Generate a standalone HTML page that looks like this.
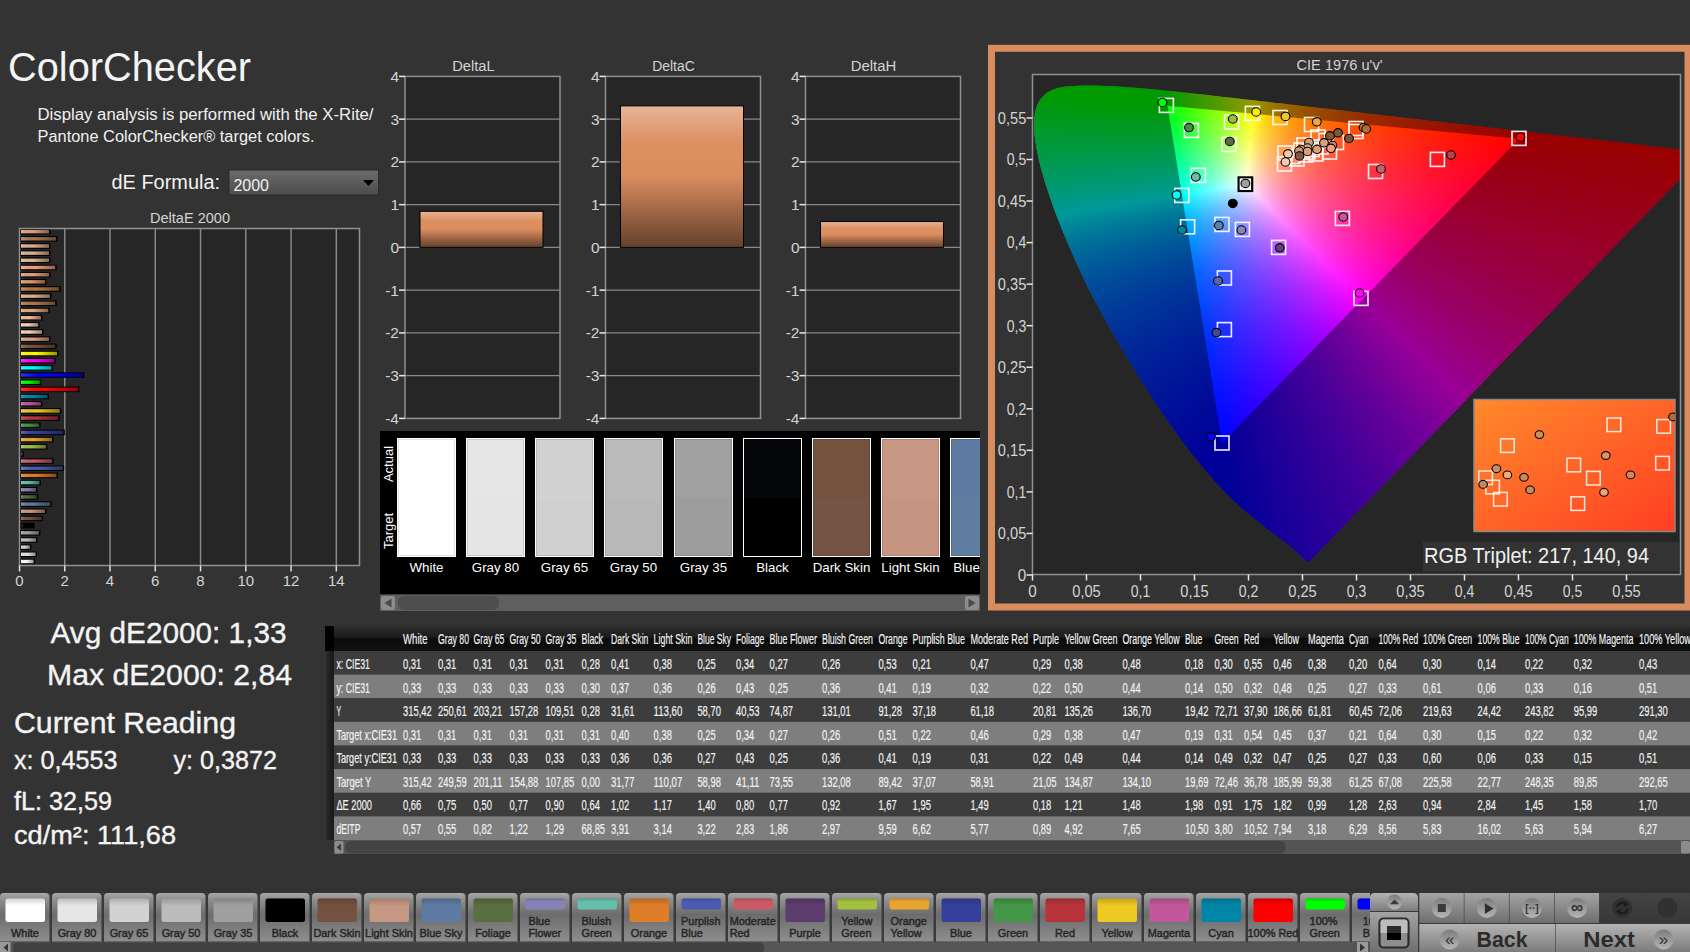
<!DOCTYPE html>
<html lang="en"><head><meta charset="utf-8"><title>ColorChecker</title>
<style>html,body{margin:0;padding:0;width:1690px;height:952px;background:#333333;overflow:hidden}svg{display:block;font-family:"Liberation Sans",sans-serif}.b{stroke:#262626;stroke-width:.45px}</style>
</head><body>
<svg width="1690" height="952" viewBox="0 0 1690 952">
<defs>
<linearGradient id="dd" x1="0" y1="0" x2="0" y2="1"><stop offset="0" stop-color="#6b6b6b"/><stop offset="1" stop-color="#4c4c4c"/></linearGradient>
<linearGradient id="bh" x1="0" y1="0" x2="1" y2="0"><stop offset="0" stop-color="#fff" stop-opacity=".2"/><stop offset=".4" stop-color="#000" stop-opacity="0"/><stop offset="1" stop-color="#000" stop-opacity=".4"/></linearGradient>
<linearGradient id="bg3" x1="0" y1="0" x2="0" y2="1"><stop offset="0" stop-color="#e9b497"/><stop offset=".25" stop-color="#dd9163"/><stop offset=".5" stop-color="#d98c5e"/><stop offset="1" stop-color="#63402c"/></linearGradient>
<clipPath id="cp"><rect x="1032.5" y="74.5" width="648" height="500"/></clipPath>
<clipPath id="cl"><path d="M1309.9,560.8 L1309.9,560.8 L1309.8,560.7 L1309.8,560.7 L1309.8,560.7 L1309.7,560.7 L1309.7,560.8 L1309.6,560.8 L1309.6,560.9 L1309.5,560.9 L1309.4,560.9 L1309.3,560.9 L1309.2,560.8 L1309.1,560.8 L1309.0,560.8 L1309.0,560.9 L1308.9,561.0 L1308.9,561.0 L1308.8,561.1 L1308.8,561.2 L1308.7,561.2 L1308.7,561.3 L1308.6,561.3 L1308.5,561.3 L1308.3,561.3 L1308.2,561.3 L1308.0,561.3 L1307.8,561.3 L1307.7,561.2 L1307.5,561.2 L1307.4,561.2 L1307.2,561.2 L1307.0,561.2 L1306.8,561.2 L1306.6,561.2 L1306.4,561.0 L1306.2,560.8 L1305.9,560.6 L1305.6,560.3 L1305.2,560.0 L1304.8,559.6 L1304.2,559.1 L1303.7,558.7 L1303.1,558.1 L1302.5,557.6 L1301.9,557.0 L1301.2,556.4 L1300.5,555.7 L1299.7,555.0 L1298.8,554.2 L1297.9,553.3 L1297.0,552.5 L1295.9,551.5 L1294.9,550.5 L1293.7,549.4 L1292.5,548.3 L1291.3,547.1 L1290.0,546.1 L1288.6,545.1 L1287.2,544.0 L1285.7,542.8 L1284.2,541.6 L1282.6,540.4 L1280.9,539.1 L1279.0,537.7 L1277.1,536.2 L1275.1,534.7 L1272.9,533.0 L1270.7,531.3 L1268.3,529.4 L1265.8,527.5 L1263.3,525.6 L1260.6,523.5 L1257.9,521.3 L1255.0,519.1 L1252.0,516.7 L1248.9,514.1 L1245.7,511.4 L1242.3,508.5 L1238.8,505.3 L1235.2,501.9 L1231.5,498.4 L1227.6,494.6 L1223.6,490.5 L1219.5,486.1 L1215.0,481.3 L1210.2,475.8 L1205.1,469.9 L1199.7,463.3 L1194.0,456.2 L1188.1,448.7 L1182.1,440.7 L1175.9,432.3 L1169.5,423.4 L1163.0,414.0 L1156.3,404.1 L1149.6,393.8 L1142.7,383.0 L1135.8,371.9 L1128.9,360.5 L1121.9,348.8 L1115.0,337.0 L1108.2,325.1 L1101.5,313.1 L1095.0,301.0 L1088.8,288.9 L1082.9,277.0 L1077.4,265.2 L1072.3,253.7 L1067.4,242.4 L1062.9,231.5 L1058.7,220.9 L1054.8,210.7 L1051.3,200.9 L1048.1,191.7 L1045.3,183.0 L1042.9,174.8 L1040.7,167.1 L1038.9,159.9 L1037.5,153.2 L1036.2,147.0 L1035.3,141.1 L1034.6,135.7 L1034.2,130.8 L1034.0,126.2 L1034.0,121.9 L1034.3,117.9 L1034.8,114.2 L1035.5,110.7 L1036.4,107.6 L1037.5,104.7 L1038.8,102.0 L1040.3,99.6 L1042.0,97.4 L1043.8,95.4 L1045.8,93.7 L1047.9,92.2 L1050.1,90.9 L1052.5,89.8 L1054.9,88.9 L1057.5,88.1 L1060.1,87.5 L1062.8,87.0 L1065.6,86.6 L1068.5,86.3 L1071.4,86.1 L1074.4,85.9 L1077.4,85.7 L1080.4,85.7 L1083.5,85.6 L1086.6,85.6 L1089.6,85.6 L1092.7,85.6 L1095.8,85.6 L1098.9,85.7 L1102.0,85.7 L1105.1,85.9 L1108.3,86.0 L1111.5,86.1 L1114.8,86.3 L1118.1,86.5 L1121.4,86.7 L1124.8,86.9 L1128.3,87.2 L1131.8,87.5 L1135.4,87.8 L1139.0,88.1 L1142.7,88.4 L1146.5,88.7 L1150.3,89.1 L1154.2,89.5 L1158.2,89.8 L1162.3,90.3 L1166.4,90.7 L1170.6,91.1 L1174.9,91.6 L1179.3,92.0 L1183.8,92.5 L1188.4,93.0 L1193.1,93.5 L1197.9,94.0 L1202.7,94.6 L1207.7,95.1 L1212.8,95.7 L1217.9,96.3 L1223.2,96.9 L1228.6,97.5 L1234.1,98.1 L1239.7,98.7 L1245.4,99.4 L1251.3,100.0 L1257.2,100.7 L1263.3,101.4 L1269.5,102.1 L1275.7,102.9 L1282.1,103.6 L1288.7,104.4 L1295.3,105.1 L1302.0,105.9 L1308.9,106.7 L1315.8,107.5 L1322.9,108.3 L1330.0,109.1 L1337.3,110.0 L1344.7,110.8 L1352.1,111.7 L1359.6,112.5 L1367.2,113.4 L1374.9,114.3 L1382.7,115.2 L1390.5,116.1 L1398.4,117.0 L1406.3,117.9 L1414.2,118.8 L1422.2,119.8 L1430.0,120.7 L1437.8,121.6 L1445.5,122.4 L1453.1,123.3 L1460.7,124.2 L1468.3,125.1 L1475.9,125.9 L1483.4,126.8 L1490.9,127.7 L1498.3,128.5 L1505.5,129.4 L1512.6,130.2 L1519.4,131.0 L1526.2,131.7 L1532.7,132.5 L1539.2,133.2 L1545.4,133.9 L1551.6,134.6 L1557.5,135.3 L1563.3,136.0 L1568.9,136.7 L1574.4,137.3 L1579.6,137.9 L1584.7,138.5 L1589.6,139.0 L1594.3,139.6 L1598.9,140.1 L1603.3,140.6 L1607.5,141.1 L1611.7,141.6 L1615.6,142.0 L1619.4,142.5 L1623.1,142.9 L1626.7,143.3 L1630.1,143.7 L1633.5,144.1 L1636.8,144.5 L1640.0,144.8 L1643.1,145.2 L1646.1,145.6 L1649.0,145.9 L1651.9,146.2 L1654.6,146.5 L1657.2,146.8 L1659.7,147.1 L1662.2,147.4 L1664.5,147.7 L1666.8,147.9 L1668.9,148.2 L1671.0,148.4 L1672.9,148.6 L1674.7,148.9 L1676.4,149.1 L1678.0,149.2 L1679.6,149.4 L1681.0,149.6 L1682.4,149.7 L1683.7,149.9 L1685.0,150.0 L1686.2,150.2 L1687.4,150.3 L1688.5,150.4 L1689.5,150.6 L1690.4,150.7 L1691.3,150.8 L1692.2,150.9 L1692.9,151.0 L1693.6,151.0 L1694.2,151.1 L1694.8,151.2 L1695.3,151.2 L1695.9,151.3 L1696.4,151.4 L1697.0,151.4 L1697.5,151.5 L1697.9,151.5 L1698.4,151.6 L1698.8,151.6 L1699.2,151.7 L1699.6,151.7 L1700.0,151.8 L1700.4,151.8 L1700.8,151.9 L1701.2,151.9 L1701.6,152.0 L1702.0,152.0 L1702.4,152.1 L1702.8,152.1 L1703.2,152.1 L1703.5,152.2 L1703.9,152.2 L1704.1,152.3 L1704.4,152.3 L1704.6,152.3 L1704.7,152.3 L1704.9,152.3 L1705.0,152.4 L1705.1,152.4 L1705.2,152.4 L1705.4,152.4 L1705.4,152.4 L1705.5,152.4 L1705.6,152.4 L1705.7,152.4 L1705.7,152.4 L1705.7,152.4Z"/></clipPath>
<linearGradient id="c0" gradientUnits="userSpaceOnUse" x1="1033" x2="1681" y1="0" y2="0"><stop offset="0.0586" stop-color="#00ff00"/><stop offset="0.1188" stop-color="#00ff00"/></linearGradient>
<linearGradient id="c1" gradientUnits="userSpaceOnUse" x1="1033" x2="1681" y1="0" y2="0"><stop offset="0.0370" stop-color="#00ff00"/><stop offset="0.1651" stop-color="#00ff00"/></linearGradient>
<linearGradient id="c2" gradientUnits="userSpaceOnUse" x1="1033" x2="1681" y1="0" y2="0"><stop offset="0.0278" stop-color="#00ff00"/><stop offset="0.1975" stop-color="#00ff00"/></linearGradient>
<linearGradient id="c3" gradientUnits="userSpaceOnUse" x1="1033" x2="1681" y1="0" y2="0"><stop offset="0.0216" stop-color="#00ff00"/><stop offset="0.2037" stop-color="#00ff00"/><stop offset="0.2269" stop-color="#29ff00"/></linearGradient>
<linearGradient id="c4" gradientUnits="userSpaceOnUse" x1="1033" x2="1681" y1="0" y2="0"><stop offset="0.0170" stop-color="#00ff00"/><stop offset="0.2037" stop-color="#00ff00"/><stop offset="0.2562" stop-color="#5aff00"/></linearGradient>
<linearGradient id="c5" gradientUnits="userSpaceOnUse" x1="1033" x2="1681" y1="0" y2="0"><stop offset="0.0139" stop-color="#00ff03"/><stop offset="0.2037" stop-color="#00ff00"/><stop offset="0.2840" stop-color="#8bff00"/></linearGradient>
<linearGradient id="c6" gradientUnits="userSpaceOnUse" x1="1033" x2="1681" y1="0" y2="0"><stop offset="0.0108" stop-color="#00ff07"/><stop offset="0.0633" stop-color="#00ff00"/><stop offset="0.2052" stop-color="#00ff00"/><stop offset="0.2747" stop-color="#7aff00"/><stop offset="0.3117" stop-color="#c1ff00"/></linearGradient>
<linearGradient id="c7" gradientUnits="userSpaceOnUse" x1="1033" x2="1681" y1="0" y2="0"><stop offset="0.0093" stop-color="#00ff0b"/><stop offset="0.0972" stop-color="#00ff00"/><stop offset="0.2052" stop-color="#00ff00"/><stop offset="0.2855" stop-color="#8eff00"/><stop offset="0.3380" stop-color="#f8ff00"/></linearGradient>
<linearGradient id="c8" gradientUnits="userSpaceOnUse" x1="1033" x2="1681" y1="0" y2="0"><stop offset="0.0062" stop-color="#00ff10"/><stop offset="0.1296" stop-color="#00ff00"/><stop offset="0.2068" stop-color="#01ff00"/><stop offset="0.2886" stop-color="#94ff00"/><stop offset="0.3410" stop-color="#ffff00"/><stop offset="0.3657" stop-color="#ffd000"/></linearGradient>
<linearGradient id="c9" gradientUnits="userSpaceOnUse" x1="1033" x2="1681" y1="0" y2="0"><stop offset="0.0046" stop-color="#00ff14"/><stop offset="0.1620" stop-color="#00ff00"/><stop offset="0.2068" stop-color="#00ff00"/><stop offset="0.2870" stop-color="#91ff00"/><stop offset="0.3410" stop-color="#fffe00"/><stop offset="0.3642" stop-color="#ffd200"/><stop offset="0.3920" stop-color="#ffab00"/></linearGradient>
<linearGradient id="c10" gradientUnits="userSpaceOnUse" x1="1033" x2="1681" y1="0" y2="0"><stop offset="0.0031" stop-color="#00ff17"/><stop offset="0.2068" stop-color="#00ff00"/><stop offset="0.2855" stop-color="#8eff00"/><stop offset="0.3410" stop-color="#fffe00"/><stop offset="0.3565" stop-color="#ffdf00"/><stop offset="0.3750" stop-color="#ffc100"/><stop offset="0.3951" stop-color="#ffa600"/><stop offset="0.4182" stop-color="#ff8e00"/></linearGradient>
<linearGradient id="c11" gradientUnits="userSpaceOnUse" x1="1033" x2="1681" y1="0" y2="0"><stop offset="0.0031" stop-color="#00ff1b"/><stop offset="0.2068" stop-color="#00ff04"/><stop offset="0.2284" stop-color="#26ff00"/><stop offset="0.2855" stop-color="#8eff00"/><stop offset="0.3395" stop-color="#feff00"/><stop offset="0.3627" stop-color="#ffd300"/><stop offset="0.3858" stop-color="#ffb100"/><stop offset="0.4136" stop-color="#ff9200"/><stop offset="0.4460" stop-color="#ff7600"/></linearGradient>
<linearGradient id="c12" gradientUnits="userSpaceOnUse" x1="1033" x2="1681" y1="0" y2="0"><stop offset="0.0015" stop-color="#00ff1f"/><stop offset="0.2083" stop-color="#00ff0a"/><stop offset="0.2608" stop-color="#60ff00"/><stop offset="0.2886" stop-color="#94ff00"/><stop offset="0.3395" stop-color="#feff00"/><stop offset="0.3657" stop-color="#ffcd00"/><stop offset="0.3951" stop-color="#ffa500"/><stop offset="0.4306" stop-color="#ff8100"/><stop offset="0.4722" stop-color="#ff6300"/></linearGradient>
<linearGradient id="c13" gradientUnits="userSpaceOnUse" x1="1033" x2="1681" y1="0" y2="0"><stop offset="0.0015" stop-color="#00ff23"/><stop offset="0.2083" stop-color="#00ff0f"/><stop offset="0.2870" stop-color="#91ff02"/><stop offset="0.3395" stop-color="#ffff00"/><stop offset="0.3534" stop-color="#ffe200"/><stop offset="0.3688" stop-color="#ffc800"/><stop offset="0.4043" stop-color="#ff9a00"/><stop offset="0.4475" stop-color="#ff7300"/><stop offset="0.4985" stop-color="#ff5300"/></linearGradient>
<linearGradient id="c14" gradientUnits="userSpaceOnUse" x1="1033" x2="1681" y1="0" y2="0"><stop offset="0.0000" stop-color="#00ff26"/><stop offset="0.2083" stop-color="#00ff14"/><stop offset="0.2855" stop-color="#8eff09"/><stop offset="0.3380" stop-color="#fcff00"/><stop offset="0.3395" stop-color="#fffe00"/><stop offset="0.3549" stop-color="#ffdf00"/><stop offset="0.3735" stop-color="#ffc000"/><stop offset="0.4136" stop-color="#ff8f00"/><stop offset="0.4645" stop-color="#ff6700"/><stop offset="0.5262" stop-color="#ff4600"/></linearGradient>
<linearGradient id="c15" gradientUnits="userSpaceOnUse" x1="1033" x2="1681" y1="0" y2="0"><stop offset="0.0000" stop-color="#00ff2a"/><stop offset="0.2099" stop-color="#00ff19"/><stop offset="0.2886" stop-color="#94ff0f"/><stop offset="0.3380" stop-color="#fdff05"/><stop offset="0.3580" stop-color="#ffd800"/><stop offset="0.3765" stop-color="#ffbb00"/><stop offset="0.3981" stop-color="#ff9f00"/><stop offset="0.4213" stop-color="#ff8700"/><stop offset="0.4799" stop-color="#ff5c00"/><stop offset="0.5525" stop-color="#ff3a00"/></linearGradient>
<linearGradient id="c16" gradientUnits="userSpaceOnUse" x1="1033" x2="1681" y1="0" y2="0"><stop offset="0.0000" stop-color="#00ff2e"/><stop offset="0.2099" stop-color="#00ff1e"/><stop offset="0.2870" stop-color="#91ff15"/><stop offset="0.3380" stop-color="#fdff0d"/><stop offset="0.3580" stop-color="#ffd807"/><stop offset="0.3781" stop-color="#ffb803"/><stop offset="0.4012" stop-color="#ff9b00"/><stop offset="0.4290" stop-color="#ff8000"/><stop offset="0.4599" stop-color="#ff6800"/><stop offset="0.4938" stop-color="#ff5400"/><stop offset="0.5787" stop-color="#ff3000"/></linearGradient>
<linearGradient id="c17" gradientUnits="userSpaceOnUse" x1="1033" x2="1681" y1="0" y2="0"><stop offset="0.0000" stop-color="#00ff31"/><stop offset="0.2099" stop-color="#00ff23"/><stop offset="0.2855" stop-color="#8dff1b"/><stop offset="0.3380" stop-color="#feff14"/><stop offset="0.3596" stop-color="#ffd40d"/><stop offset="0.3812" stop-color="#ffb308"/><stop offset="0.4074" stop-color="#ff9303"/><stop offset="0.4367" stop-color="#ff7900"/><stop offset="0.4707" stop-color="#ff6100"/><stop offset="0.5108" stop-color="#ff4b00"/><stop offset="0.6065" stop-color="#ff2700"/></linearGradient>
<linearGradient id="c18" gradientUnits="userSpaceOnUse" x1="1033" x2="1681" y1="0" y2="0"><stop offset="0.0000" stop-color="#00ff35"/><stop offset="0.2114" stop-color="#00ff28"/><stop offset="0.2886" stop-color="#93ff21"/><stop offset="0.3380" stop-color="#ffff1a"/><stop offset="0.3596" stop-color="#ffd313"/><stop offset="0.3843" stop-color="#ffae0d"/><stop offset="0.4120" stop-color="#ff8e07"/><stop offset="0.4444" stop-color="#ff7202"/><stop offset="0.4815" stop-color="#ff5900"/><stop offset="0.5247" stop-color="#ff4400"/><stop offset="0.6327" stop-color="#ff1f00"/></linearGradient>
<linearGradient id="c19" gradientUnits="userSpaceOnUse" x1="1033" x2="1681" y1="0" y2="0"><stop offset="0.0000" stop-color="#00ff39"/><stop offset="0.2114" stop-color="#00ff2d"/><stop offset="0.2870" stop-color="#90ff27"/><stop offset="0.3380" stop-color="#ffff21"/><stop offset="0.3596" stop-color="#ffd319"/><stop offset="0.3858" stop-color="#ffab12"/><stop offset="0.4151" stop-color="#ff8a0b"/><stop offset="0.4506" stop-color="#ff6d06"/><stop offset="0.4907" stop-color="#ff5400"/><stop offset="0.5386" stop-color="#ff3d00"/><stop offset="0.6590" stop-color="#ff1800"/></linearGradient>
<linearGradient id="c20" gradientUnits="userSpaceOnUse" x1="1033" x2="1681" y1="0" y2="0"><stop offset="-0.0015" stop-color="#00ff3c"/><stop offset="0.2114" stop-color="#00ff33"/><stop offset="0.2855" stop-color="#8dff2d"/><stop offset="0.3380" stop-color="#fffe28"/><stop offset="0.3611" stop-color="#ffcf1e"/><stop offset="0.3889" stop-color="#ffa616"/><stop offset="0.4213" stop-color="#ff840f"/><stop offset="0.4583" stop-color="#ff6708"/><stop offset="0.5031" stop-color="#ff4d03"/><stop offset="0.5540" stop-color="#ff3700"/><stop offset="0.6142" stop-color="#ff2300"/><stop offset="0.6867" stop-color="#ff1100"/></linearGradient>
<linearGradient id="c21" gradientUnits="userSpaceOnUse" x1="1033" x2="1681" y1="0" y2="0"><stop offset="-0.0015" stop-color="#00ff40"/><stop offset="0.2130" stop-color="#00ff38"/><stop offset="0.2870" stop-color="#90ff33"/><stop offset="0.3380" stop-color="#fffd2e"/><stop offset="0.3627" stop-color="#ffcc23"/><stop offset="0.3904" stop-color="#ffa41a"/><stop offset="0.4244" stop-color="#ff8012"/><stop offset="0.4645" stop-color="#ff620b"/><stop offset="0.5123" stop-color="#ff4705"/><stop offset="0.5679" stop-color="#ff3100"/><stop offset="0.6327" stop-color="#ff1d00"/><stop offset="0.7130" stop-color="#ff0b00"/></linearGradient>
<linearGradient id="c22" gradientUnits="userSpaceOnUse" x1="1033" x2="1681" y1="0" y2="0"><stop offset="0.0000" stop-color="#00ff44"/><stop offset="0.2130" stop-color="#00ff3d"/><stop offset="0.2855" stop-color="#8dff39"/><stop offset="0.3380" stop-color="#fffd35"/><stop offset="0.3627" stop-color="#ffcb29"/><stop offset="0.3935" stop-color="#ff9f1e"/><stop offset="0.4290" stop-color="#ff7b15"/><stop offset="0.4707" stop-color="#ff5d0e"/><stop offset="0.5201" stop-color="#ff4307"/><stop offset="0.5802" stop-color="#ff2c01"/><stop offset="0.6512" stop-color="#ff1800"/><stop offset="0.7407" stop-color="#ff0500"/></linearGradient>
<linearGradient id="c23" gradientUnits="userSpaceOnUse" x1="1033" x2="1681" y1="0" y2="0"><stop offset="0.0000" stop-color="#00ff47"/><stop offset="0.2130" stop-color="#00ff42"/><stop offset="0.2824" stop-color="#87ff3f"/><stop offset="0.3102" stop-color="#c2ff3d"/><stop offset="0.3364" stop-color="#feff3c"/><stop offset="0.3380" stop-color="#fffc3b"/><stop offset="0.3642" stop-color="#ffc82d"/><stop offset="0.3951" stop-color="#ff9d22"/><stop offset="0.4321" stop-color="#ff7818"/><stop offset="0.4769" stop-color="#ff5910"/><stop offset="0.5309" stop-color="#ff3e09"/><stop offset="0.5941" stop-color="#ff2703"/><stop offset="0.6713" stop-color="#ff1300"/><stop offset="0.7670" stop-color="#ff0000"/></linearGradient>
<linearGradient id="c24" gradientUnits="userSpaceOnUse" x1="1033" x2="1681" y1="0" y2="0"><stop offset="0.0000" stop-color="#00ff4b"/><stop offset="0.2145" stop-color="#00ff47"/><stop offset="0.2886" stop-color="#93ff44"/><stop offset="0.3364" stop-color="#ffff42"/><stop offset="0.3503" stop-color="#ffe03a"/><stop offset="0.3642" stop-color="#ffc733"/><stop offset="0.3966" stop-color="#ff9a26"/><stop offset="0.4367" stop-color="#ff731b"/><stop offset="0.4846" stop-color="#ff5412"/><stop offset="0.5463" stop-color="#ff370a"/><stop offset="0.6219" stop-color="#ff1f03"/><stop offset="0.7593" stop-color="#ff0000"/><stop offset="0.7932" stop-color="#ff0000"/></linearGradient>
<linearGradient id="c25" gradientUnits="userSpaceOnUse" x1="1033" x2="1681" y1="0" y2="0"><stop offset="0.0000" stop-color="#00ff4f"/><stop offset="0.2145" stop-color="#00ff4c"/><stop offset="0.2870" stop-color="#90ff4a"/><stop offset="0.3364" stop-color="#fffe49"/><stop offset="0.3503" stop-color="#ffdf40"/><stop offset="0.3642" stop-color="#ffc638"/><stop offset="0.3997" stop-color="#ff962a"/><stop offset="0.4414" stop-color="#ff6f1e"/><stop offset="0.4938" stop-color="#ff4e14"/><stop offset="0.5648" stop-color="#ff300b"/><stop offset="0.6559" stop-color="#ff1503"/><stop offset="0.7562" stop-color="#ff0000"/><stop offset="0.8210" stop-color="#ff0000"/></linearGradient>
<linearGradient id="c26" gradientUnits="userSpaceOnUse" x1="1033" x2="1681" y1="0" y2="0"><stop offset="0.0000" stop-color="#00ff53"/><stop offset="0.2145" stop-color="#00ff51"/><stop offset="0.2840" stop-color="#89ff51"/><stop offset="0.3364" stop-color="#fffd4f"/><stop offset="0.3503" stop-color="#ffdf46"/><stop offset="0.3657" stop-color="#ffc33d"/><stop offset="0.3827" stop-color="#ffaa35"/><stop offset="0.4028" stop-color="#ff912d"/><stop offset="0.4475" stop-color="#ff6a20"/><stop offset="0.5015" stop-color="#ff4916"/><stop offset="0.5849" stop-color="#ff280b"/><stop offset="0.6960" stop-color="#ff0c02"/><stop offset="0.7531" stop-color="#ff0000"/><stop offset="0.8472" stop-color="#ff0000"/></linearGradient>
<linearGradient id="c27" gradientUnits="userSpaceOnUse" x1="1033" x2="1681" y1="0" y2="0"><stop offset="0.0000" stop-color="#00ff56"/><stop offset="0.2160" stop-color="#01ff56"/><stop offset="0.2855" stop-color="#8dff56"/><stop offset="0.3364" stop-color="#fffd56"/><stop offset="0.3503" stop-color="#ffde4b"/><stop offset="0.3673" stop-color="#ffbf41"/><stop offset="0.4043" stop-color="#ff8f31"/><stop offset="0.4522" stop-color="#ff6623"/><stop offset="0.5108" stop-color="#ff4417"/><stop offset="0.6080" stop-color="#ff210b"/><stop offset="0.7500" stop-color="#ff0000"/><stop offset="0.8735" stop-color="#ff0000"/></linearGradient>
<linearGradient id="c28" gradientUnits="userSpaceOnUse" x1="1033" x2="1681" y1="0" y2="0"><stop offset="0.0015" stop-color="#00ff5a"/><stop offset="0.2160" stop-color="#00ff5c"/><stop offset="0.2840" stop-color="#89ff5d"/><stop offset="0.3102" stop-color="#c3ff5d"/><stop offset="0.3349" stop-color="#feff5d"/><stop offset="0.3364" stop-color="#fffc5c"/><stop offset="0.3503" stop-color="#ffdd51"/><stop offset="0.3673" stop-color="#ffbf46"/><stop offset="0.3858" stop-color="#ffa43d"/><stop offset="0.4074" stop-color="#ff8b34"/><stop offset="0.4568" stop-color="#ff6225"/><stop offset="0.5185" stop-color="#ff4019"/><stop offset="0.6127" stop-color="#ff1f0d"/><stop offset="0.7469" stop-color="#ff0003"/><stop offset="0.9012" stop-color="#ff0000"/></linearGradient>
<linearGradient id="c29" gradientUnits="userSpaceOnUse" x1="1033" x2="1681" y1="0" y2="0"><stop offset="0.0015" stop-color="#00ff5e"/><stop offset="0.2160" stop-color="#00ff61"/><stop offset="0.2870" stop-color="#90ff63"/><stop offset="0.3349" stop-color="#ffff64"/><stop offset="0.3503" stop-color="#ffdc57"/><stop offset="0.3673" stop-color="#ffbe4b"/><stop offset="0.3873" stop-color="#ffa141"/><stop offset="0.4090" stop-color="#ff8937"/><stop offset="0.4599" stop-color="#ff5f28"/><stop offset="0.5247" stop-color="#ff3d1b"/><stop offset="0.6157" stop-color="#ff1d0f"/><stop offset="0.7438" stop-color="#ff0005"/><stop offset="0.8194" stop-color="#ff0000"/><stop offset="0.9275" stop-color="#ff0000"/></linearGradient>
<linearGradient id="c30" gradientUnits="userSpaceOnUse" x1="1033" x2="1681" y1="0" y2="0"><stop offset="0.0015" stop-color="#00ff62"/><stop offset="0.2176" stop-color="#01ff66"/><stop offset="0.2886" stop-color="#93ff69"/><stop offset="0.3349" stop-color="#fffe6b"/><stop offset="0.3503" stop-color="#ffdc5d"/><stop offset="0.3688" stop-color="#ffbb50"/><stop offset="0.3889" stop-color="#ff9e45"/><stop offset="0.4105" stop-color="#ff863b"/><stop offset="0.4645" stop-color="#ff5b2a"/><stop offset="0.5324" stop-color="#ff391c"/><stop offset="0.6188" stop-color="#ff1c11"/><stop offset="0.7407" stop-color="#ff0007"/><stop offset="0.8534" stop-color="#ff0000"/><stop offset="0.9537" stop-color="#ff0000"/></linearGradient>
<linearGradient id="c31" gradientUnits="userSpaceOnUse" x1="1033" x2="1681" y1="0" y2="0"><stop offset="0.0031" stop-color="#00ff65"/><stop offset="0.2176" stop-color="#00ff6c"/><stop offset="0.2870" stop-color="#90ff6f"/><stop offset="0.3349" stop-color="#fffe71"/><stop offset="0.3503" stop-color="#ffdb63"/><stop offset="0.3688" stop-color="#ffba55"/><stop offset="0.3904" stop-color="#ff9c48"/><stop offset="0.4136" stop-color="#ff823e"/><stop offset="0.4691" stop-color="#ff582c"/><stop offset="0.5401" stop-color="#ff351e"/><stop offset="0.6219" stop-color="#ff1b13"/><stop offset="0.7377" stop-color="#ff0009"/><stop offset="0.8858" stop-color="#ff0000"/><stop offset="0.9815" stop-color="#ff0000"/></linearGradient>
<linearGradient id="c32" gradientUnits="userSpaceOnUse" x1="1033" x2="1681" y1="0" y2="0"><stop offset="0.0031" stop-color="#00ff69"/><stop offset="0.2176" stop-color="#00ff71"/><stop offset="0.2840" stop-color="#89ff75"/><stop offset="0.3349" stop-color="#fffd78"/><stop offset="0.3519" stop-color="#ffd767"/><stop offset="0.3704" stop-color="#ffb659"/><stop offset="0.3920" stop-color="#ff994c"/><stop offset="0.4151" stop-color="#ff8041"/><stop offset="0.4414" stop-color="#ff6a37"/><stop offset="0.4722" stop-color="#ff552e"/><stop offset="0.5463" stop-color="#ff321f"/><stop offset="0.6250" stop-color="#ff1915"/><stop offset="0.7346" stop-color="#ff000b"/><stop offset="0.9182" stop-color="#ff0000"/><stop offset="1.0031" stop-color="#ff0000"/></linearGradient>
<linearGradient id="c33" gradientUnits="userSpaceOnUse" x1="1033" x2="1681" y1="0" y2="0"><stop offset="0.0031" stop-color="#00ff6d"/><stop offset="0.2191" stop-color="#01ff77"/><stop offset="0.2855" stop-color="#8cff7b"/><stop offset="0.3333" stop-color="#feff80"/><stop offset="0.3349" stop-color="#fffc7f"/><stop offset="0.3519" stop-color="#ffd66d"/><stop offset="0.3704" stop-color="#ffb65e"/><stop offset="0.3920" stop-color="#ff9851"/><stop offset="0.4151" stop-color="#ff7f45"/><stop offset="0.4414" stop-color="#ff693b"/><stop offset="0.4722" stop-color="#ff5431"/><stop offset="0.5463" stop-color="#ff3122"/><stop offset="0.6235" stop-color="#ff1917"/><stop offset="0.7315" stop-color="#ff000d"/><stop offset="1.0031" stop-color="#ff0000"/></linearGradient>
<linearGradient id="c34" gradientUnits="userSpaceOnUse" x1="1033" x2="1681" y1="0" y2="0"><stop offset="0.0046" stop-color="#00ff71"/><stop offset="0.2191" stop-color="#00ff7c"/><stop offset="0.2886" stop-color="#93ff82"/><stop offset="0.3333" stop-color="#ffff87"/><stop offset="0.3503" stop-color="#ffd874"/><stop offset="0.3688" stop-color="#ffb764"/><stop offset="0.3904" stop-color="#ff9956"/><stop offset="0.4136" stop-color="#ff804a"/><stop offset="0.4398" stop-color="#ff693f"/><stop offset="0.4707" stop-color="#ff5435"/><stop offset="0.5448" stop-color="#ff3124"/><stop offset="0.6219" stop-color="#ff1919"/><stop offset="0.7299" stop-color="#ff000f"/><stop offset="1.0031" stop-color="#ff0000"/></linearGradient>
<linearGradient id="c35" gradientUnits="userSpaceOnUse" x1="1033" x2="1681" y1="0" y2="0"><stop offset="0.0046" stop-color="#00ff75"/><stop offset="0.2191" stop-color="#00ff82"/><stop offset="0.2870" stop-color="#8fff88"/><stop offset="0.3333" stop-color="#ffff8e"/><stop offset="0.3488" stop-color="#ffdb7c"/><stop offset="0.3673" stop-color="#ffb96b"/><stop offset="0.3889" stop-color="#ff9a5b"/><stop offset="0.4120" stop-color="#ff814f"/><stop offset="0.4398" stop-color="#ff6943"/><stop offset="0.4707" stop-color="#ff5438"/><stop offset="0.5448" stop-color="#ff3027"/><stop offset="0.6204" stop-color="#ff191b"/><stop offset="0.7269" stop-color="#ff0011"/><stop offset="1.0031" stop-color="#ff0001"/></linearGradient>
<linearGradient id="c36" gradientUnits="userSpaceOnUse" x1="1033" x2="1681" y1="0" y2="0"><stop offset="0.0062" stop-color="#00ff79"/><stop offset="0.2207" stop-color="#01ff87"/><stop offset="0.2870" stop-color="#8fff8f"/><stop offset="0.3333" stop-color="#fffe95"/><stop offset="0.3488" stop-color="#ffda82"/><stop offset="0.3673" stop-color="#ffb870"/><stop offset="0.3889" stop-color="#ff9960"/><stop offset="0.4120" stop-color="#ff8053"/><stop offset="0.4398" stop-color="#ff6846"/><stop offset="0.4707" stop-color="#ff533b"/><stop offset="0.5448" stop-color="#ff3029"/><stop offset="0.6204" stop-color="#ff181e"/><stop offset="0.7238" stop-color="#ff0013"/><stop offset="1.0031" stop-color="#ff0002"/></linearGradient>
<linearGradient id="c37" gradientUnits="userSpaceOnUse" x1="1033" x2="1681" y1="0" y2="0"><stop offset="0.0062" stop-color="#00ff7d"/><stop offset="0.2207" stop-color="#00ff8d"/><stop offset="0.2870" stop-color="#8fff95"/><stop offset="0.3333" stop-color="#fffd9c"/><stop offset="0.3488" stop-color="#ffd988"/><stop offset="0.3673" stop-color="#ffb775"/><stop offset="0.3889" stop-color="#ff9965"/><stop offset="0.4120" stop-color="#ff7f57"/><stop offset="0.4398" stop-color="#ff674a"/><stop offset="0.4707" stop-color="#ff523f"/><stop offset="0.5448" stop-color="#ff2f2c"/><stop offset="0.6188" stop-color="#ff1820"/><stop offset="0.7207" stop-color="#ff0015"/><stop offset="1.0031" stop-color="#ff0003"/></linearGradient>
<linearGradient id="c38" gradientUnits="userSpaceOnUse" x1="1033" x2="1681" y1="0" y2="0"><stop offset="0.0062" stop-color="#00ff81"/><stop offset="0.2207" stop-color="#00ff93"/><stop offset="0.2840" stop-color="#88ff9b"/><stop offset="0.3086" stop-color="#c2ffa0"/><stop offset="0.3318" stop-color="#feffa4"/><stop offset="0.3333" stop-color="#fffca2"/><stop offset="0.3488" stop-color="#ffd88e"/><stop offset="0.3673" stop-color="#ffb67b"/><stop offset="0.3889" stop-color="#ff9869"/><stop offset="0.4120" stop-color="#ff7e5b"/><stop offset="0.4398" stop-color="#ff664d"/><stop offset="0.4707" stop-color="#ff5142"/><stop offset="0.5448" stop-color="#ff2e2f"/><stop offset="0.6173" stop-color="#ff1722"/><stop offset="0.7176" stop-color="#ff0017"/><stop offset="1.0031" stop-color="#ff0005"/></linearGradient>
<linearGradient id="c39" gradientUnits="userSpaceOnUse" x1="1033" x2="1681" y1="0" y2="0"><stop offset="0.0077" stop-color="#00ff85"/><stop offset="0.2222" stop-color="#01ff99"/><stop offset="0.2855" stop-color="#8bffa2"/><stop offset="0.3318" stop-color="#feffab"/><stop offset="0.3333" stop-color="#fffba9"/><stop offset="0.3488" stop-color="#ffd794"/><stop offset="0.3673" stop-color="#ffb580"/><stop offset="0.3889" stop-color="#ff976e"/><stop offset="0.4120" stop-color="#ff7d5f"/><stop offset="0.4383" stop-color="#ff6752"/><stop offset="0.4691" stop-color="#ff5246"/><stop offset="0.5448" stop-color="#ff2e31"/><stop offset="0.6157" stop-color="#ff1725"/><stop offset="0.7145" stop-color="#ff0019"/><stop offset="1.0031" stop-color="#ff0006"/></linearGradient>
<linearGradient id="c40" gradientUnits="userSpaceOnUse" x1="1033" x2="1681" y1="0" y2="0"><stop offset="0.0077" stop-color="#00ff89"/><stop offset="0.2222" stop-color="#00ff9e"/><stop offset="0.2886" stop-color="#93ffaa"/><stop offset="0.3318" stop-color="#ffffb3"/><stop offset="0.3472" stop-color="#ffda9c"/><stop offset="0.3657" stop-color="#ffb787"/><stop offset="0.3873" stop-color="#ff9874"/><stop offset="0.4105" stop-color="#ff7e64"/><stop offset="0.4367" stop-color="#ff6756"/><stop offset="0.4676" stop-color="#ff5249"/><stop offset="0.5417" stop-color="#ff2e34"/><stop offset="0.6127" stop-color="#ff1727"/><stop offset="0.7114" stop-color="#ff001b"/><stop offset="1.0031" stop-color="#ff0007"/></linearGradient>
<linearGradient id="c41" gradientUnits="userSpaceOnUse" x1="1033" x2="1681" y1="0" y2="0"><stop offset="0.0093" stop-color="#00ff8d"/><stop offset="0.2222" stop-color="#00ffa4"/><stop offset="0.2870" stop-color="#8fffb0"/><stop offset="0.3318" stop-color="#fffeba"/><stop offset="0.3472" stop-color="#ffd9a2"/><stop offset="0.3657" stop-color="#ffb68c"/><stop offset="0.3873" stop-color="#ff9778"/><stop offset="0.4105" stop-color="#ff7d68"/><stop offset="0.4367" stop-color="#ff665a"/><stop offset="0.4676" stop-color="#ff514c"/><stop offset="0.5417" stop-color="#ff2e37"/><stop offset="0.6111" stop-color="#ff1729"/><stop offset="0.7083" stop-color="#ff001d"/><stop offset="1.0031" stop-color="#ff0008"/></linearGradient>
<linearGradient id="c42" gradientUnits="userSpaceOnUse" x1="1033" x2="1681" y1="0" y2="0"><stop offset="0.0093" stop-color="#00ff91"/><stop offset="0.2222" stop-color="#00ffaa"/><stop offset="0.2840" stop-color="#88ffb6"/><stop offset="0.3318" stop-color="#fffdc1"/><stop offset="0.3472" stop-color="#ffd8a8"/><stop offset="0.3657" stop-color="#ffb591"/><stop offset="0.3873" stop-color="#ff967d"/><stop offset="0.4105" stop-color="#ff7c6c"/><stop offset="0.4367" stop-color="#ff655d"/><stop offset="0.4676" stop-color="#ff5050"/><stop offset="0.5417" stop-color="#ff2d39"/><stop offset="0.6096" stop-color="#ff172c"/><stop offset="0.7052" stop-color="#ff001f"/><stop offset="1.0031" stop-color="#ff000a"/></linearGradient>
<linearGradient id="c43" gradientUnits="userSpaceOnUse" x1="1033" x2="1681" y1="0" y2="0"><stop offset="0.0108" stop-color="#00ff95"/><stop offset="0.2238" stop-color="#00ffb1"/><stop offset="0.2870" stop-color="#8fffbe"/><stop offset="0.3318" stop-color="#fffcc8"/><stop offset="0.3472" stop-color="#ffd7ae"/><stop offset="0.3657" stop-color="#ffb497"/><stop offset="0.3873" stop-color="#ff9582"/><stop offset="0.4105" stop-color="#ff7b70"/><stop offset="0.4367" stop-color="#ff6561"/><stop offset="0.4676" stop-color="#ff4f53"/><stop offset="0.5417" stop-color="#ff2c3c"/><stop offset="0.6080" stop-color="#ff172e"/><stop offset="0.7022" stop-color="#ff0021"/><stop offset="1.0031" stop-color="#ff000b"/></linearGradient>
<linearGradient id="c44" gradientUnits="userSpaceOnUse" x1="1033" x2="1681" y1="0" y2="0"><stop offset="0.0123" stop-color="#00ff99"/><stop offset="0.1281" stop-color="#00ffa7"/><stop offset="0.2238" stop-color="#00ffb7"/><stop offset="0.2840" stop-color="#87ffc4"/><stop offset="0.3086" stop-color="#c4ffcb"/><stop offset="0.3302" stop-color="#feffd1"/><stop offset="0.3318" stop-color="#fffccf"/><stop offset="0.3472" stop-color="#ffd6b5"/><stop offset="0.3657" stop-color="#ffb49c"/><stop offset="0.3873" stop-color="#ff9486"/><stop offset="0.4105" stop-color="#ff7b74"/><stop offset="0.4367" stop-color="#ff6465"/><stop offset="0.4676" stop-color="#ff4f56"/><stop offset="0.5417" stop-color="#ff2b3e"/><stop offset="0.6065" stop-color="#ff1730"/><stop offset="0.6991" stop-color="#ff0023"/><stop offset="0.8333" stop-color="#ff0016"/><stop offset="1.0031" stop-color="#ff000c"/></linearGradient>
<linearGradient id="c45" gradientUnits="userSpaceOnUse" x1="1033" x2="1681" y1="0" y2="0"><stop offset="0.0123" stop-color="#00ff9e"/><stop offset="0.1281" stop-color="#00ffac"/><stop offset="0.2238" stop-color="#00ffbd"/><stop offset="0.2855" stop-color="#8bffcc"/><stop offset="0.3302" stop-color="#ffffd9"/><stop offset="0.3457" stop-color="#ffd9bd"/><stop offset="0.3642" stop-color="#ffb5a4"/><stop offset="0.3843" stop-color="#ff978e"/><stop offset="0.4074" stop-color="#ff7d7b"/><stop offset="0.4336" stop-color="#ff656a"/><stop offset="0.4645" stop-color="#ff505b"/><stop offset="0.5401" stop-color="#ff2b41"/><stop offset="0.6049" stop-color="#ff1633"/><stop offset="0.6960" stop-color="#ff0025"/><stop offset="0.8302" stop-color="#ff0018"/><stop offset="1.0031" stop-color="#ff000d"/></linearGradient>
<linearGradient id="c46" gradientUnits="userSpaceOnUse" x1="1033" x2="1681" y1="0" y2="0"><stop offset="0.0139" stop-color="#00ffa2"/><stop offset="0.1296" stop-color="#00ffb1"/><stop offset="0.2253" stop-color="#00ffc3"/><stop offset="0.2886" stop-color="#92ffd4"/><stop offset="0.3302" stop-color="#fffee1"/><stop offset="0.3457" stop-color="#ffd8c4"/><stop offset="0.3642" stop-color="#ffb4a9"/><stop offset="0.3843" stop-color="#ff9793"/><stop offset="0.4074" stop-color="#ff7c7f"/><stop offset="0.4336" stop-color="#ff646e"/><stop offset="0.4645" stop-color="#ff4f5e"/><stop offset="0.5401" stop-color="#ff2b44"/><stop offset="0.6034" stop-color="#ff1635"/><stop offset="0.6929" stop-color="#ff0027"/><stop offset="0.8287" stop-color="#ff001a"/><stop offset="1.0031" stop-color="#ff000e"/></linearGradient>
<linearGradient id="c47" gradientUnits="userSpaceOnUse" x1="1033" x2="1681" y1="0" y2="0"><stop offset="0.0139" stop-color="#00ffa6"/><stop offset="0.1296" stop-color="#00ffb6"/><stop offset="0.2253" stop-color="#00ffc9"/><stop offset="0.2870" stop-color="#8effda"/><stop offset="0.3302" stop-color="#fffde8"/><stop offset="0.3457" stop-color="#ffd7ca"/><stop offset="0.3642" stop-color="#ffb3af"/><stop offset="0.3843" stop-color="#ff9698"/><stop offset="0.4074" stop-color="#ff7b83"/><stop offset="0.4336" stop-color="#ff6471"/><stop offset="0.4645" stop-color="#ff4e61"/><stop offset="0.5401" stop-color="#ff2a46"/><stop offset="0.6019" stop-color="#ff1638"/><stop offset="0.6898" stop-color="#ff0029"/><stop offset="0.8256" stop-color="#ff001b"/><stop offset="1.0015" stop-color="#ff0010"/></linearGradient>
<linearGradient id="c48" gradientUnits="userSpaceOnUse" x1="1033" x2="1681" y1="0" y2="0"><stop offset="0.0154" stop-color="#00ffab"/><stop offset="0.1296" stop-color="#00ffbb"/><stop offset="0.2253" stop-color="#00ffd0"/><stop offset="0.2840" stop-color="#87ffe1"/><stop offset="0.3302" stop-color="#fffdf0"/><stop offset="0.3457" stop-color="#ffd6d1"/><stop offset="0.3642" stop-color="#ffb2b4"/><stop offset="0.3843" stop-color="#ff959d"/><stop offset="0.4074" stop-color="#ff7a88"/><stop offset="0.4336" stop-color="#ff6375"/><stop offset="0.4645" stop-color="#ff4d64"/><stop offset="0.5386" stop-color="#ff2a49"/><stop offset="0.6065" stop-color="#ff1439"/><stop offset="0.6867" stop-color="#ff002c"/><stop offset="0.8241" stop-color="#ff001d"/><stop offset="1.0000" stop-color="#ff0011"/></linearGradient>
<linearGradient id="c49" gradientUnits="userSpaceOnUse" x1="1033" x2="1681" y1="0" y2="0"><stop offset="0.0170" stop-color="#00ffaf"/><stop offset="0.1312" stop-color="#00ffc1"/><stop offset="0.2269" stop-color="#00ffd6"/><stop offset="0.2855" stop-color="#8affe9"/><stop offset="0.3287" stop-color="#fefffa"/><stop offset="0.3302" stop-color="#fffcf7"/><stop offset="0.3457" stop-color="#ffd5d7"/><stop offset="0.3642" stop-color="#ffb1ba"/><stop offset="0.3843" stop-color="#ff94a1"/><stop offset="0.4074" stop-color="#ff798c"/><stop offset="0.4336" stop-color="#ff6279"/><stop offset="0.4645" stop-color="#ff4d68"/><stop offset="0.5386" stop-color="#ff294c"/><stop offset="0.6049" stop-color="#ff143b"/><stop offset="0.6836" stop-color="#ff002e"/><stop offset="0.8210" stop-color="#ff001e"/><stop offset="0.9969" stop-color="#ff0012"/></linearGradient>
<linearGradient id="c50" gradientUnits="userSpaceOnUse" x1="1033" x2="1681" y1="0" y2="0"><stop offset="0.0170" stop-color="#00ffb3"/><stop offset="0.1312" stop-color="#00ffc6"/><stop offset="0.2269" stop-color="#00ffdd"/><stop offset="0.2840" stop-color="#86ffef"/><stop offset="0.3210" stop-color="#e8ffff"/><stop offset="0.3302" stop-color="#fffbff"/><stop offset="0.3457" stop-color="#ffd4de"/><stop offset="0.3642" stop-color="#ffb1bf"/><stop offset="0.3843" stop-color="#ff93a6"/><stop offset="0.4074" stop-color="#ff7890"/><stop offset="0.4336" stop-color="#ff617d"/><stop offset="0.4630" stop-color="#ff4d6c"/><stop offset="0.5370" stop-color="#ff294f"/><stop offset="0.6019" stop-color="#ff143e"/><stop offset="0.6806" stop-color="#ff0030"/><stop offset="0.8179" stop-color="#ff0020"/><stop offset="0.9938" stop-color="#ff0013"/></linearGradient>
<linearGradient id="c51" gradientUnits="userSpaceOnUse" x1="1033" x2="1681" y1="0" y2="0"><stop offset="0.0185" stop-color="#00ffb8"/><stop offset="0.1327" stop-color="#00ffcc"/><stop offset="0.2269" stop-color="#00ffe3"/><stop offset="0.2731" stop-color="#6cfff3"/><stop offset="0.3025" stop-color="#b6ffff"/><stop offset="0.3333" stop-color="#fff1ff"/><stop offset="0.3488" stop-color="#ffcdde"/><stop offset="0.3673" stop-color="#ffaac1"/><stop offset="0.3873" stop-color="#ff8ea8"/><stop offset="0.4105" stop-color="#ff7492"/><stop offset="0.4367" stop-color="#ff5e7e"/><stop offset="0.4676" stop-color="#ff496d"/><stop offset="0.5432" stop-color="#ff264f"/><stop offset="0.6775" stop-color="#ff0032"/><stop offset="0.8148" stop-color="#ff0022"/><stop offset="0.9907" stop-color="#ff0015"/></linearGradient>
<linearGradient id="c52" gradientUnits="userSpaceOnUse" x1="1033" x2="1681" y1="0" y2="0"><stop offset="0.0185" stop-color="#00ffbc"/><stop offset="0.1327" stop-color="#00ffd1"/><stop offset="0.2284" stop-color="#00ffea"/><stop offset="0.2855" stop-color="#8affff"/><stop offset="0.3364" stop-color="#ffe8ff"/><stop offset="0.3519" stop-color="#ffc5df"/><stop offset="0.3704" stop-color="#ffa5c2"/><stop offset="0.3920" stop-color="#ff87a8"/><stop offset="0.4151" stop-color="#ff6f92"/><stop offset="0.4414" stop-color="#ff597f"/><stop offset="0.4722" stop-color="#ff466d"/><stop offset="0.5478" stop-color="#ff2450"/><stop offset="0.6744" stop-color="#ff0035"/><stop offset="0.8102" stop-color="#ff0024"/><stop offset="0.9877" stop-color="#ff0016"/></linearGradient>
<linearGradient id="c53" gradientUnits="userSpaceOnUse" x1="1033" x2="1681" y1="0" y2="0"><stop offset="0.0201" stop-color="#00ffc1"/><stop offset="0.1343" stop-color="#00ffd7"/><stop offset="0.2284" stop-color="#00fff1"/><stop offset="0.2670" stop-color="#5cffff"/><stop offset="0.3395" stop-color="#ffe0ff"/><stop offset="0.3549" stop-color="#ffbee0"/><stop offset="0.3735" stop-color="#ff9fc3"/><stop offset="0.3951" stop-color="#ff83a9"/><stop offset="0.4182" stop-color="#ff6b94"/><stop offset="0.4460" stop-color="#ff5580"/><stop offset="0.4769" stop-color="#ff426e"/><stop offset="0.5525" stop-color="#ff2151"/><stop offset="0.6728" stop-color="#ff0037"/><stop offset="0.8086" stop-color="#ff0025"/><stop offset="0.9846" stop-color="#ff0017"/></linearGradient>
<linearGradient id="c54" gradientUnits="userSpaceOnUse" x1="1033" x2="1681" y1="0" y2="0"><stop offset="0.0216" stop-color="#00ffc6"/><stop offset="0.1343" stop-color="#00ffdc"/><stop offset="0.2284" stop-color="#00fff8"/><stop offset="0.2485" stop-color="#30ffff"/><stop offset="0.3426" stop-color="#ffd7ff"/><stop offset="0.3596" stop-color="#ffb5de"/><stop offset="0.3781" stop-color="#ff97c2"/><stop offset="0.3997" stop-color="#ff7da9"/><stop offset="0.4228" stop-color="#ff6694"/><stop offset="0.4815" stop-color="#ff3f6f"/><stop offset="0.5571" stop-color="#ff1f52"/><stop offset="0.6698" stop-color="#ff0039"/><stop offset="0.8056" stop-color="#ff0027"/><stop offset="0.9815" stop-color="#ff0019"/></linearGradient>
<linearGradient id="c55" gradientUnits="userSpaceOnUse" x1="1033" x2="1681" y1="0" y2="0"><stop offset="0.0216" stop-color="#00ffca"/><stop offset="0.1343" stop-color="#00ffe2"/><stop offset="0.2299" stop-color="#00ffff"/><stop offset="0.2562" stop-color="#3ff5ff"/><stop offset="0.3457" stop-color="#ffcfff"/><stop offset="0.3627" stop-color="#ffaede"/><stop offset="0.3812" stop-color="#ff92c3"/><stop offset="0.4028" stop-color="#ff79aa"/><stop offset="0.4275" stop-color="#ff6294"/><stop offset="0.4861" stop-color="#ff3c70"/><stop offset="0.5633" stop-color="#ff1c53"/><stop offset="0.6667" stop-color="#ff003b"/><stop offset="0.8025" stop-color="#ff0029"/><stop offset="0.9784" stop-color="#ff001a"/></linearGradient>
<linearGradient id="c56" gradientUnits="userSpaceOnUse" x1="1033" x2="1681" y1="0" y2="0"><stop offset="0.0231" stop-color="#00ffcf"/><stop offset="0.1250" stop-color="#00ffe5"/><stop offset="0.2099" stop-color="#00ffff"/><stop offset="0.2299" stop-color="#00f8ff"/><stop offset="0.2577" stop-color="#40eeff"/><stop offset="0.3488" stop-color="#ffc8ff"/><stop offset="0.3657" stop-color="#ffa8df"/><stop offset="0.3843" stop-color="#ff8dc4"/><stop offset="0.4059" stop-color="#ff74ab"/><stop offset="0.4306" stop-color="#ff5e95"/><stop offset="0.4907" stop-color="#ff3871"/><stop offset="0.5679" stop-color="#ff1a54"/><stop offset="0.6636" stop-color="#ff003e"/><stop offset="0.7994" stop-color="#ff002a"/><stop offset="0.9753" stop-color="#ff001b"/></linearGradient>
<linearGradient id="c57" gradientUnits="userSpaceOnUse" x1="1033" x2="1681" y1="0" y2="0"><stop offset="0.0247" stop-color="#00ffd4"/><stop offset="0.1142" stop-color="#00ffe8"/><stop offset="0.1914" stop-color="#00ffff"/><stop offset="0.2299" stop-color="#00f2ff"/><stop offset="0.2623" stop-color="#47e5ff"/><stop offset="0.3519" stop-color="#ffc0ff"/><stop offset="0.3688" stop-color="#ffa2e0"/><stop offset="0.3889" stop-color="#ff86c3"/><stop offset="0.4105" stop-color="#ff6fab"/><stop offset="0.4352" stop-color="#ff5a96"/><stop offset="0.4954" stop-color="#ff3571"/><stop offset="0.5741" stop-color="#ff1754"/><stop offset="0.6605" stop-color="#ff0040"/><stop offset="0.7963" stop-color="#ff002c"/><stop offset="0.9722" stop-color="#ff001d"/></linearGradient>
<linearGradient id="c58" gradientUnits="userSpaceOnUse" x1="1033" x2="1681" y1="0" y2="0"><stop offset="0.0247" stop-color="#00ffd9"/><stop offset="0.1728" stop-color="#00ffff"/><stop offset="0.2315" stop-color="#01ebff"/><stop offset="0.2593" stop-color="#3ee0ff"/><stop offset="0.3549" stop-color="#ffb9ff"/><stop offset="0.3719" stop-color="#ff9ce0"/><stop offset="0.3920" stop-color="#ff82c4"/><stop offset="0.4151" stop-color="#ff6aab"/><stop offset="0.4398" stop-color="#ff5596"/><stop offset="0.5000" stop-color="#ff3272"/><stop offset="0.5787" stop-color="#ff1555"/><stop offset="0.6574" stop-color="#ff0043"/><stop offset="0.7932" stop-color="#ff002e"/><stop offset="0.9691" stop-color="#ff001e"/></linearGradient>
<linearGradient id="c59" gradientUnits="userSpaceOnUse" x1="1033" x2="1681" y1="0" y2="0"><stop offset="0.0262" stop-color="#00ffde"/><stop offset="0.1543" stop-color="#00ffff"/><stop offset="0.2315" stop-color="#00e5ff"/><stop offset="0.2608" stop-color="#3fdaff"/><stop offset="0.3580" stop-color="#ffb3ff"/><stop offset="0.3750" stop-color="#ff97e1"/><stop offset="0.3951" stop-color="#ff7dc5"/><stop offset="0.4182" stop-color="#ff66ac"/><stop offset="0.4444" stop-color="#ff5196"/><stop offset="0.5062" stop-color="#ff2f72"/><stop offset="0.5849" stop-color="#ff1356"/><stop offset="0.6543" stop-color="#ff0045"/><stop offset="0.7901" stop-color="#ff0030"/><stop offset="0.9660" stop-color="#ff001f"/></linearGradient>
<linearGradient id="c60" gradientUnits="userSpaceOnUse" x1="1033" x2="1681" y1="0" y2="0"><stop offset="0.0278" stop-color="#00ffe3"/><stop offset="0.1358" stop-color="#00ffff"/><stop offset="0.2315" stop-color="#00dfff"/><stop offset="0.2639" stop-color="#43d3ff"/><stop offset="0.3611" stop-color="#ffacff"/><stop offset="0.3796" stop-color="#ff8fdf"/><stop offset="0.3997" stop-color="#ff77c4"/><stop offset="0.4228" stop-color="#ff61ac"/><stop offset="0.4491" stop-color="#ff4d96"/><stop offset="0.5123" stop-color="#ff2b72"/><stop offset="0.5926" stop-color="#ff1056"/><stop offset="0.6512" stop-color="#ff0048"/><stop offset="0.7870" stop-color="#ff0032"/><stop offset="0.9630" stop-color="#ff0021"/></linearGradient>
<linearGradient id="c61" gradientUnits="userSpaceOnUse" x1="1033" x2="1681" y1="0" y2="0"><stop offset="0.0293" stop-color="#00ffe8"/><stop offset="0.1188" stop-color="#00ffff"/><stop offset="0.2330" stop-color="#01d9ff"/><stop offset="0.2623" stop-color="#3eceff"/><stop offset="0.3642" stop-color="#ffa6ff"/><stop offset="0.3827" stop-color="#ff8ae0"/><stop offset="0.4028" stop-color="#ff73c5"/><stop offset="0.4259" stop-color="#ff5dad"/><stop offset="0.4537" stop-color="#ff4996"/><stop offset="0.5170" stop-color="#ff2973"/><stop offset="0.5988" stop-color="#ff0d56"/><stop offset="0.6481" stop-color="#ff004a"/><stop offset="0.7824" stop-color="#ff0034"/><stop offset="0.9599" stop-color="#ff0022"/></linearGradient>
<linearGradient id="c62" gradientUnits="userSpaceOnUse" x1="1033" x2="1681" y1="0" y2="0"><stop offset="0.0293" stop-color="#00ffed"/><stop offset="0.1003" stop-color="#00ffff"/><stop offset="0.2330" stop-color="#00d4ff"/><stop offset="0.2639" stop-color="#3fc9ff"/><stop offset="0.3673" stop-color="#ffa0ff"/><stop offset="0.3858" stop-color="#ff85e0"/><stop offset="0.4074" stop-color="#ff6dc4"/><stop offset="0.4306" stop-color="#ff59ad"/><stop offset="0.4583" stop-color="#ff4597"/><stop offset="0.5247" stop-color="#ff2572"/><stop offset="0.6080" stop-color="#ff0a56"/><stop offset="0.6451" stop-color="#ff004d"/><stop offset="0.7793" stop-color="#ff0036"/><stop offset="0.9568" stop-color="#ff0023"/></linearGradient>
<linearGradient id="c63" gradientUnits="userSpaceOnUse" x1="1033" x2="1681" y1="0" y2="0"><stop offset="0.0309" stop-color="#00fff2"/><stop offset="0.0818" stop-color="#00ffff"/><stop offset="0.2330" stop-color="#00cfff"/><stop offset="0.2670" stop-color="#42c3ff"/><stop offset="0.3704" stop-color="#ff9aff"/><stop offset="0.3904" stop-color="#ff7fdf"/><stop offset="0.4136" stop-color="#ff66c2"/><stop offset="0.4398" stop-color="#ff51a8"/><stop offset="0.4707" stop-color="#ff3d92"/><stop offset="0.5448" stop-color="#ff1c6c"/><stop offset="0.6404" stop-color="#ff0050"/><stop offset="0.7762" stop-color="#ff0037"/><stop offset="0.9537" stop-color="#ff0025"/></linearGradient>
<linearGradient id="c64" gradientUnits="userSpaceOnUse" x1="1033" x2="1681" y1="0" y2="0"><stop offset="0.0324" stop-color="#00fff7"/><stop offset="0.0633" stop-color="#00ffff"/><stop offset="0.2346" stop-color="#01c9ff"/><stop offset="0.2654" stop-color="#3ebeff"/><stop offset="0.3735" stop-color="#ff94ff"/><stop offset="0.3935" stop-color="#ff7adf"/><stop offset="0.4167" stop-color="#ff62c3"/><stop offset="0.4429" stop-color="#ff4eaa"/><stop offset="0.4722" stop-color="#ff3b94"/><stop offset="0.5448" stop-color="#ff1c6f"/><stop offset="0.6373" stop-color="#ff0052"/><stop offset="0.7716" stop-color="#ff003a"/><stop offset="0.9506" stop-color="#ff0026"/></linearGradient>
<linearGradient id="c65" gradientUnits="userSpaceOnUse" x1="1033" x2="1681" y1="0" y2="0"><stop offset="0.0340" stop-color="#00fffc"/><stop offset="0.1003" stop-color="#00efff"/><stop offset="0.2346" stop-color="#00c4ff"/><stop offset="0.2670" stop-color="#3eb9ff"/><stop offset="0.3765" stop-color="#ff8eff"/><stop offset="0.4090" stop-color="#ff69d0"/><stop offset="0.4491" stop-color="#ff49a8"/><stop offset="0.4969" stop-color="#ff2e88"/><stop offset="0.5556" stop-color="#ff176d"/><stop offset="0.6358" stop-color="#ff0055"/><stop offset="0.7701" stop-color="#ff003b"/><stop offset="0.9491" stop-color="#ff0028"/></linearGradient>
<linearGradient id="c66" gradientUnits="userSpaceOnUse" x1="1033" x2="1681" y1="0" y2="0"><stop offset="0.0340" stop-color="#00fdff"/><stop offset="0.2346" stop-color="#00c0ff"/><stop offset="0.2701" stop-color="#42b3ff"/><stop offset="0.3796" stop-color="#ff89ff"/><stop offset="0.4120" stop-color="#ff65d0"/><stop offset="0.4522" stop-color="#ff46a9"/><stop offset="0.5000" stop-color="#ff2c89"/><stop offset="0.5586" stop-color="#ff166e"/><stop offset="0.6327" stop-color="#ff0057"/><stop offset="0.7670" stop-color="#ff003d"/><stop offset="0.9460" stop-color="#ff0029"/></linearGradient>
<linearGradient id="c67" gradientUnits="userSpaceOnUse" x1="1033" x2="1681" y1="0" y2="0"><stop offset="0.0355" stop-color="#00f7ff"/><stop offset="0.2361" stop-color="#01bbff"/><stop offset="0.2685" stop-color="#3db0ff"/><stop offset="0.3827" stop-color="#ff84ff"/><stop offset="0.4151" stop-color="#ff61d1"/><stop offset="0.4552" stop-color="#ff43aa"/><stop offset="0.5031" stop-color="#ff2a8a"/><stop offset="0.5617" stop-color="#ff1470"/><stop offset="0.6296" stop-color="#ff005a"/><stop offset="0.7639" stop-color="#ff003f"/><stop offset="0.9429" stop-color="#ff002a"/></linearGradient>
<linearGradient id="c68" gradientUnits="userSpaceOnUse" x1="1033" x2="1681" y1="0" y2="0"><stop offset="0.0370" stop-color="#00f2ff"/><stop offset="0.2361" stop-color="#00b7ff"/><stop offset="0.2701" stop-color="#3eabff"/><stop offset="0.3858" stop-color="#ff7fff"/><stop offset="0.4182" stop-color="#ff5dd2"/><stop offset="0.4583" stop-color="#ff40ab"/><stop offset="0.5062" stop-color="#ff278c"/><stop offset="0.5633" stop-color="#ff1271"/><stop offset="0.6265" stop-color="#ff005d"/><stop offset="0.7608" stop-color="#ff0041"/><stop offset="0.9398" stop-color="#ff002c"/></linearGradient>
<linearGradient id="c69" gradientUnits="userSpaceOnUse" x1="1033" x2="1681" y1="0" y2="0"><stop offset="0.0386" stop-color="#00edff"/><stop offset="0.2361" stop-color="#00b2ff"/><stop offset="0.2731" stop-color="#41a6ff"/><stop offset="0.3889" stop-color="#ff7aff"/><stop offset="0.4213" stop-color="#ff59d2"/><stop offset="0.4614" stop-color="#ff3dac"/><stop offset="0.5093" stop-color="#ff258d"/><stop offset="0.5664" stop-color="#ff1173"/><stop offset="0.6235" stop-color="#ff0060"/><stop offset="0.7577" stop-color="#ff0043"/><stop offset="0.9367" stop-color="#ff002d"/></linearGradient>
<linearGradient id="c70" gradientUnits="userSpaceOnUse" x1="1033" x2="1681" y1="0" y2="0"><stop offset="0.0386" stop-color="#00e9ff"/><stop offset="0.2377" stop-color="#01aeff"/><stop offset="0.2731" stop-color="#40a2ff"/><stop offset="0.3920" stop-color="#ff75ff"/><stop offset="0.4244" stop-color="#ff56d3"/><stop offset="0.4645" stop-color="#ff3aad"/><stop offset="0.5108" stop-color="#ff248f"/><stop offset="0.5679" stop-color="#ff0f74"/><stop offset="0.6204" stop-color="#ff0063"/><stop offset="0.7546" stop-color="#ff0045"/><stop offset="0.9336" stop-color="#ff002f"/></linearGradient>
<linearGradient id="c71" gradientUnits="userSpaceOnUse" x1="1033" x2="1681" y1="0" y2="0"><stop offset="0.0401" stop-color="#00e4ff"/><stop offset="0.2377" stop-color="#00aaff"/><stop offset="0.2731" stop-color="#3e9eff"/><stop offset="0.3951" stop-color="#ff71ff"/><stop offset="0.4275" stop-color="#ff52d4"/><stop offset="0.4676" stop-color="#ff38ae"/><stop offset="0.5139" stop-color="#ff2290"/><stop offset="0.5710" stop-color="#ff0e75"/><stop offset="0.6173" stop-color="#ff0066"/><stop offset="0.7515" stop-color="#ff0047"/><stop offset="0.9306" stop-color="#ff0030"/></linearGradient>
<linearGradient id="c72" gradientUnits="userSpaceOnUse" x1="1033" x2="1681" y1="0" y2="0"><stop offset="0.0417" stop-color="#00e0ff"/><stop offset="0.2377" stop-color="#00a6ff"/><stop offset="0.2762" stop-color="#4199ff"/><stop offset="0.3981" stop-color="#ff6cff"/><stop offset="0.4306" stop-color="#ff4fd4"/><stop offset="0.4707" stop-color="#ff35af"/><stop offset="0.5170" stop-color="#ff2091"/><stop offset="0.5725" stop-color="#ff0c77"/><stop offset="0.6142" stop-color="#ff0069"/><stop offset="0.7191" stop-color="#ff004f"/><stop offset="0.9275" stop-color="#ff0032"/></linearGradient>
<linearGradient id="c73" gradientUnits="userSpaceOnUse" x1="1033" x2="1681" y1="0" y2="0"><stop offset="0.0432" stop-color="#00dbff"/><stop offset="0.2392" stop-color="#01a2ff"/><stop offset="0.2762" stop-color="#3f96ff"/><stop offset="0.4012" stop-color="#ff68ff"/><stop offset="0.4352" stop-color="#ff4bd3"/><stop offset="0.4738" stop-color="#ff33b0"/><stop offset="0.5201" stop-color="#ff1e92"/><stop offset="0.5756" stop-color="#ff0b78"/><stop offset="0.6111" stop-color="#ff006c"/><stop offset="0.7207" stop-color="#ff0050"/><stop offset="0.9244" stop-color="#ff0033"/></linearGradient>
<linearGradient id="c74" gradientUnits="userSpaceOnUse" x1="1033" x2="1681" y1="0" y2="0"><stop offset="0.0448" stop-color="#00d7ff"/><stop offset="0.2392" stop-color="#009fff"/><stop offset="0.2762" stop-color="#3e93ff"/><stop offset="0.4043" stop-color="#ff64ff"/><stop offset="0.4367" stop-color="#ff49d5"/><stop offset="0.4753" stop-color="#ff31b2"/><stop offset="0.5216" stop-color="#ff1c94"/><stop offset="0.5772" stop-color="#ff097a"/><stop offset="0.6096" stop-color="#ff006e"/><stop offset="0.7207" stop-color="#ff0052"/><stop offset="0.9213" stop-color="#ff0035"/></linearGradient>
<linearGradient id="c75" gradientUnits="userSpaceOnUse" x1="1033" x2="1681" y1="0" y2="0"><stop offset="0.0448" stop-color="#00d3ff"/><stop offset="0.2392" stop-color="#009bff"/><stop offset="0.2793" stop-color="#418eff"/><stop offset="0.4074" stop-color="#ff60ff"/><stop offset="0.4414" stop-color="#ff44d4"/><stop offset="0.4799" stop-color="#ff2eb2"/><stop offset="0.5262" stop-color="#ff1a94"/><stop offset="0.5802" stop-color="#ff087b"/><stop offset="0.6065" stop-color="#ff0071"/><stop offset="0.7207" stop-color="#ff0053"/><stop offset="0.9182" stop-color="#ff0036"/></linearGradient>
<linearGradient id="c76" gradientUnits="userSpaceOnUse" x1="1033" x2="1681" y1="0" y2="0"><stop offset="0.0463" stop-color="#00cfff"/><stop offset="0.2392" stop-color="#0098ff"/><stop offset="0.2824" stop-color="#448aff"/><stop offset="0.4105" stop-color="#ff5cff"/><stop offset="0.4429" stop-color="#ff42d6"/><stop offset="0.4815" stop-color="#ff2cb4"/><stop offset="0.5278" stop-color="#ff1896"/><stop offset="0.5818" stop-color="#ff067d"/><stop offset="0.6034" stop-color="#ff0075"/><stop offset="0.7207" stop-color="#ff0055"/><stop offset="0.9151" stop-color="#ff0038"/></linearGradient>
<linearGradient id="c77" gradientUnits="userSpaceOnUse" x1="1033" x2="1681" y1="0" y2="0"><stop offset="0.0478" stop-color="#00cbff"/><stop offset="0.2407" stop-color="#0094ff"/><stop offset="0.2793" stop-color="#3d88ff"/><stop offset="0.4136" stop-color="#ff58ff"/><stop offset="0.4460" stop-color="#ff3fd7"/><stop offset="0.4846" stop-color="#ff2ab5"/><stop offset="0.5293" stop-color="#ff1798"/><stop offset="0.5833" stop-color="#ff057e"/><stop offset="0.6003" stop-color="#ff0078"/><stop offset="0.7207" stop-color="#ff0057"/><stop offset="0.9120" stop-color="#ff0039"/></linearGradient>
<linearGradient id="c78" gradientUnits="userSpaceOnUse" x1="1033" x2="1681" y1="0" y2="0"><stop offset="0.0494" stop-color="#00c7ff"/><stop offset="0.2407" stop-color="#0091ff"/><stop offset="0.2824" stop-color="#4084ff"/><stop offset="0.4167" stop-color="#ff54ff"/><stop offset="0.4491" stop-color="#ff3cd8"/><stop offset="0.4877" stop-color="#ff27b5"/><stop offset="0.5324" stop-color="#ff1599"/><stop offset="0.5864" stop-color="#ff037f"/><stop offset="0.5972" stop-color="#ff007b"/><stop offset="0.6481" stop-color="#ff006a"/><stop offset="0.7222" stop-color="#ff0058"/><stop offset="0.9090" stop-color="#ff003b"/></linearGradient>
<linearGradient id="c79" gradientUnits="userSpaceOnUse" x1="1033" x2="1681" y1="0" y2="0"><stop offset="0.0509" stop-color="#00c3ff"/><stop offset="0.2407" stop-color="#008eff"/><stop offset="0.2855" stop-color="#4380ff"/><stop offset="0.4198" stop-color="#ff50ff"/><stop offset="0.4522" stop-color="#ff39d8"/><stop offset="0.4907" stop-color="#ff25b6"/><stop offset="0.5355" stop-color="#ff1399"/><stop offset="0.5880" stop-color="#ff0281"/><stop offset="0.6497" stop-color="#ff006c"/><stop offset="0.7222" stop-color="#ff0059"/><stop offset="0.9059" stop-color="#ff003c"/></linearGradient>
<linearGradient id="c80" gradientUnits="userSpaceOnUse" x1="1033" x2="1681" y1="0" y2="0"><stop offset="0.0525" stop-color="#00bfff"/><stop offset="0.2423" stop-color="#008bff"/><stop offset="0.2824" stop-color="#3d7eff"/><stop offset="0.4228" stop-color="#ff4dff"/><stop offset="0.4552" stop-color="#ff36d9"/><stop offset="0.4938" stop-color="#ff22b7"/><stop offset="0.5386" stop-color="#ff119a"/><stop offset="0.5895" stop-color="#ff0083"/><stop offset="0.6512" stop-color="#ff006d"/><stop offset="0.7222" stop-color="#ff005b"/><stop offset="0.9028" stop-color="#ff003e"/></linearGradient>
<linearGradient id="c81" gradientUnits="userSpaceOnUse" x1="1033" x2="1681" y1="0" y2="0"><stop offset="0.0525" stop-color="#00bcff"/><stop offset="0.2423" stop-color="#0088ff"/><stop offset="0.2855" stop-color="#407aff"/><stop offset="0.4259" stop-color="#ff49ff"/><stop offset="0.4583" stop-color="#ff34d9"/><stop offset="0.4969" stop-color="#ff20b8"/><stop offset="0.5417" stop-color="#ff0f9b"/><stop offset="0.5926" stop-color="#ff0083"/><stop offset="0.6528" stop-color="#ff006f"/><stop offset="0.7238" stop-color="#ff005c"/><stop offset="0.9012" stop-color="#ff003f"/></linearGradient>
<linearGradient id="c82" gradientUnits="userSpaceOnUse" x1="1033" x2="1681" y1="0" y2="0"><stop offset="0.0540" stop-color="#00b8ff"/><stop offset="0.2423" stop-color="#0085ff"/><stop offset="0.2886" stop-color="#4377ff"/><stop offset="0.4290" stop-color="#ff46ff"/><stop offset="0.4614" stop-color="#ff31d9"/><stop offset="0.4985" stop-color="#ff1fba"/><stop offset="0.5432" stop-color="#ff0d9d"/><stop offset="0.5833" stop-color="#ff008a"/><stop offset="0.5941" stop-color="#ff0085"/><stop offset="0.6543" stop-color="#ff0070"/><stop offset="0.7238" stop-color="#ff005e"/><stop offset="0.8981" stop-color="#ff0041"/></linearGradient>
<linearGradient id="c83" gradientUnits="userSpaceOnUse" x1="1033" x2="1681" y1="0" y2="0"><stop offset="0.0556" stop-color="#00b5ff"/><stop offset="0.2438" stop-color="#0082ff"/><stop offset="0.2855" stop-color="#3d75ff"/><stop offset="0.4321" stop-color="#ff43ff"/><stop offset="0.4645" stop-color="#ff2eda"/><stop offset="0.5015" stop-color="#ff1cba"/><stop offset="0.5386" stop-color="#ff0ea2"/><stop offset="0.5802" stop-color="#ff008d"/><stop offset="0.5957" stop-color="#ff0087"/><stop offset="0.6543" stop-color="#ff0072"/><stop offset="0.7238" stop-color="#ff0060"/><stop offset="0.8951" stop-color="#ff0042"/></linearGradient>
<linearGradient id="c84" gradientUnits="userSpaceOnUse" x1="1033" x2="1681" y1="0" y2="0"><stop offset="0.0571" stop-color="#00b1ff"/><stop offset="0.2438" stop-color="#007fff"/><stop offset="0.2886" stop-color="#4071ff"/><stop offset="0.4352" stop-color="#ff3fff"/><stop offset="0.4676" stop-color="#ff2bda"/><stop offset="0.5046" stop-color="#ff1abb"/><stop offset="0.5772" stop-color="#ff0091"/><stop offset="0.5988" stop-color="#ff0088"/><stop offset="0.6574" stop-color="#ff0073"/><stop offset="0.7238" stop-color="#ff0061"/><stop offset="0.8920" stop-color="#ff0044"/></linearGradient>
<linearGradient id="c85" gradientUnits="userSpaceOnUse" x1="1033" x2="1681" y1="0" y2="0"><stop offset="0.0586" stop-color="#00aeff"/><stop offset="0.2438" stop-color="#007cff"/><stop offset="0.2917" stop-color="#426eff"/><stop offset="0.4383" stop-color="#ff3cff"/><stop offset="0.4707" stop-color="#ff29db"/><stop offset="0.5077" stop-color="#ff18bc"/><stop offset="0.5756" stop-color="#ff0094"/><stop offset="0.6003" stop-color="#ff0089"/><stop offset="0.6574" stop-color="#ff0075"/><stop offset="0.7238" stop-color="#ff0063"/><stop offset="0.8889" stop-color="#ff0046"/></linearGradient>
<linearGradient id="c86" gradientUnits="userSpaceOnUse" x1="1033" x2="1681" y1="0" y2="0"><stop offset="0.0602" stop-color="#00abff"/><stop offset="0.2454" stop-color="#0079ff"/><stop offset="0.2886" stop-color="#3d6cff"/><stop offset="0.4414" stop-color="#ff39ff"/><stop offset="0.4738" stop-color="#ff26db"/><stop offset="0.5108" stop-color="#ff16bc"/><stop offset="0.5725" stop-color="#ff0098"/><stop offset="0.6019" stop-color="#ff008b"/><stop offset="0.6590" stop-color="#ff0076"/><stop offset="0.7238" stop-color="#ff0064"/><stop offset="0.8858" stop-color="#ff0047"/></linearGradient>
<linearGradient id="c87" gradientUnits="userSpaceOnUse" x1="1033" x2="1681" y1="0" y2="0"><stop offset="0.0617" stop-color="#00a8ff"/><stop offset="0.2454" stop-color="#0077ff"/><stop offset="0.2917" stop-color="#3f69ff"/><stop offset="0.4444" stop-color="#ff36ff"/><stop offset="0.4769" stop-color="#ff24dc"/><stop offset="0.5123" stop-color="#ff14be"/><stop offset="0.5694" stop-color="#ff009c"/><stop offset="0.6034" stop-color="#ff008c"/><stop offset="0.6590" stop-color="#ff0078"/><stop offset="0.7238" stop-color="#ff0066"/><stop offset="0.8827" stop-color="#ff0049"/></linearGradient>
<linearGradient id="c88" gradientUnits="userSpaceOnUse" x1="1033" x2="1681" y1="0" y2="0"><stop offset="0.0633" stop-color="#00a5ff"/><stop offset="0.2454" stop-color="#0074ff"/><stop offset="0.2948" stop-color="#4266ff"/><stop offset="0.4475" stop-color="#ff33ff"/><stop offset="0.4799" stop-color="#ff21dc"/><stop offset="0.5154" stop-color="#ff12bf"/><stop offset="0.5664" stop-color="#ff00a0"/><stop offset="0.6049" stop-color="#ff008e"/><stop offset="0.6605" stop-color="#ff0079"/><stop offset="0.7238" stop-color="#ff0068"/><stop offset="0.8796" stop-color="#ff004b"/></linearGradient>
<linearGradient id="c89" gradientUnits="userSpaceOnUse" x1="1033" x2="1681" y1="0" y2="0"><stop offset="0.0633" stop-color="#00a2ff"/><stop offset="0.2469" stop-color="#0072ff"/><stop offset="0.2917" stop-color="#3d65ff"/><stop offset="0.4506" stop-color="#ff30ff"/><stop offset="0.4830" stop-color="#ff1fdc"/><stop offset="0.5185" stop-color="#ff10bf"/><stop offset="0.5633" stop-color="#ff00a4"/><stop offset="0.6065" stop-color="#ff008f"/><stop offset="0.6605" stop-color="#ff007b"/><stop offset="0.7238" stop-color="#ff0069"/><stop offset="0.8765" stop-color="#ff004c"/></linearGradient>
<linearGradient id="c90" gradientUnits="userSpaceOnUse" x1="1033" x2="1681" y1="0" y2="0"><stop offset="0.0648" stop-color="#009fff"/><stop offset="0.2469" stop-color="#006fff"/><stop offset="0.2948" stop-color="#3f61ff"/><stop offset="0.4537" stop-color="#ff2dff"/><stop offset="0.4861" stop-color="#ff1cdd"/><stop offset="0.5216" stop-color="#ff0ec0"/><stop offset="0.5602" stop-color="#ff00a8"/><stop offset="0.6096" stop-color="#ff0090"/><stop offset="0.7238" stop-color="#ff006b"/><stop offset="0.8735" stop-color="#ff004e"/></linearGradient>
<linearGradient id="c91" gradientUnits="userSpaceOnUse" x1="1033" x2="1681" y1="0" y2="0"><stop offset="0.0664" stop-color="#009cff"/><stop offset="0.2469" stop-color="#006dff"/><stop offset="0.2978" stop-color="#425eff"/><stop offset="0.4568" stop-color="#ff2aff"/><stop offset="0.5031" stop-color="#ff14d1"/><stop offset="0.5571" stop-color="#ff00ac"/><stop offset="0.6111" stop-color="#ff0091"/><stop offset="0.7238" stop-color="#ff006d"/><stop offset="0.8704" stop-color="#ff0050"/></linearGradient>
<linearGradient id="c92" gradientUnits="userSpaceOnUse" x1="1033" x2="1681" y1="0" y2="0"><stop offset="0.0679" stop-color="#0099ff"/><stop offset="0.2485" stop-color="#006bff"/><stop offset="0.2963" stop-color="#3e5dff"/><stop offset="0.4599" stop-color="#ff27ff"/><stop offset="0.5031" stop-color="#ff13d4"/><stop offset="0.5540" stop-color="#ff00b0"/><stop offset="0.6127" stop-color="#ff0093"/><stop offset="0.7238" stop-color="#ff006e"/><stop offset="0.8673" stop-color="#ff0051"/></linearGradient>
<linearGradient id="c93" gradientUnits="userSpaceOnUse" x1="1033" x2="1681" y1="0" y2="0"><stop offset="0.0694" stop-color="#0096ff"/><stop offset="0.2485" stop-color="#0068ff"/><stop offset="0.2978" stop-color="#3f5aff"/><stop offset="0.4630" stop-color="#ff25ff"/><stop offset="0.5031" stop-color="#ff12d7"/><stop offset="0.5509" stop-color="#ff00b5"/><stop offset="0.6142" stop-color="#ff0094"/><stop offset="0.7238" stop-color="#ff0070"/><stop offset="0.8642" stop-color="#ff0053"/></linearGradient>
<linearGradient id="c94" gradientUnits="userSpaceOnUse" x1="1033" x2="1681" y1="0" y2="0"><stop offset="0.0710" stop-color="#0093ff"/><stop offset="0.2485" stop-color="#0066ff"/><stop offset="0.3009" stop-color="#4157ff"/><stop offset="0.4660" stop-color="#ff22ff"/><stop offset="0.5046" stop-color="#ff10d9"/><stop offset="0.5478" stop-color="#ff00b9"/><stop offset="0.6157" stop-color="#ff0096"/><stop offset="0.7238" stop-color="#ff0071"/><stop offset="0.8611" stop-color="#ff0055"/></linearGradient>
<linearGradient id="c95" gradientUnits="userSpaceOnUse" x1="1033" x2="1681" y1="0" y2="0"><stop offset="0.0725" stop-color="#0091ff"/><stop offset="0.2500" stop-color="#0064ff"/><stop offset="0.2994" stop-color="#3e56ff"/><stop offset="0.4691" stop-color="#ff1fff"/><stop offset="0.5046" stop-color="#ff0fdc"/><stop offset="0.5448" stop-color="#ff00be"/><stop offset="0.6173" stop-color="#ff0097"/><stop offset="0.7238" stop-color="#ff0073"/><stop offset="0.8580" stop-color="#ff0057"/></linearGradient>
<linearGradient id="c96" gradientUnits="userSpaceOnUse" x1="1033" x2="1681" y1="0" y2="0"><stop offset="0.0741" stop-color="#008eff"/><stop offset="0.2500" stop-color="#0062ff"/><stop offset="0.3009" stop-color="#3f54ff"/><stop offset="0.4722" stop-color="#ff1dff"/><stop offset="0.5046" stop-color="#ff0edf"/><stop offset="0.5417" stop-color="#ff00c2"/><stop offset="0.6188" stop-color="#ff0099"/><stop offset="0.7222" stop-color="#ff0075"/><stop offset="0.8549" stop-color="#ff0059"/></linearGradient>
<linearGradient id="c97" gradientUnits="userSpaceOnUse" x1="1033" x2="1681" y1="0" y2="0"><stop offset="0.0756" stop-color="#008bff"/><stop offset="0.2500" stop-color="#0060ff"/><stop offset="0.3040" stop-color="#4151ff"/><stop offset="0.4753" stop-color="#ff1aff"/><stop offset="0.5062" stop-color="#ff0de1"/><stop offset="0.5386" stop-color="#ff00c7"/><stop offset="0.5772" stop-color="#ff00af"/><stop offset="0.6204" stop-color="#ff009a"/><stop offset="0.7238" stop-color="#ff0076"/><stop offset="0.8534" stop-color="#ff005a"/></linearGradient>
<linearGradient id="c98" gradientUnits="userSpaceOnUse" x1="1033" x2="1681" y1="0" y2="0"><stop offset="0.0772" stop-color="#0089ff"/><stop offset="0.2515" stop-color="#015eff"/><stop offset="0.3025" stop-color="#3e4fff"/><stop offset="0.4784" stop-color="#ff18ff"/><stop offset="0.5062" stop-color="#ff0ce4"/><stop offset="0.5355" stop-color="#ff00cc"/><stop offset="0.5756" stop-color="#ff00b2"/><stop offset="0.6219" stop-color="#ff009b"/><stop offset="0.7222" stop-color="#ff0078"/><stop offset="0.8503" stop-color="#ff005c"/></linearGradient>
<linearGradient id="c99" gradientUnits="userSpaceOnUse" x1="1033" x2="1681" y1="0" y2="0"><stop offset="0.0787" stop-color="#0086ff"/><stop offset="0.2515" stop-color="#005cff"/><stop offset="0.3040" stop-color="#3e4dff"/><stop offset="0.4815" stop-color="#ff15ff"/><stop offset="0.5340" stop-color="#ff00d0"/><stop offset="0.5756" stop-color="#ff00b5"/><stop offset="0.6235" stop-color="#ff009d"/><stop offset="0.7222" stop-color="#ff007a"/><stop offset="0.8472" stop-color="#ff005e"/></linearGradient>
<linearGradient id="c100" gradientUnits="userSpaceOnUse" x1="1033" x2="1681" y1="0" y2="0"><stop offset="0.0802" stop-color="#0084ff"/><stop offset="0.2515" stop-color="#005aff"/><stop offset="0.3071" stop-color="#414bff"/><stop offset="0.4846" stop-color="#ff13ff"/><stop offset="0.5309" stop-color="#ff00d5"/><stop offset="0.5741" stop-color="#ff00b8"/><stop offset="0.6250" stop-color="#ff009e"/><stop offset="0.7222" stop-color="#ff007c"/><stop offset="0.8441" stop-color="#ff0060"/></linearGradient>
<linearGradient id="c101" gradientUnits="userSpaceOnUse" x1="1033" x2="1681" y1="0" y2="0"><stop offset="0.0818" stop-color="#0082ff"/><stop offset="0.2531" stop-color="#0158ff"/><stop offset="0.3056" stop-color="#3e49ff"/><stop offset="0.4877" stop-color="#ff10ff"/><stop offset="0.5278" stop-color="#ff00da"/><stop offset="0.5741" stop-color="#ff00ba"/><stop offset="0.6265" stop-color="#ff00a0"/><stop offset="0.7222" stop-color="#ff007d"/><stop offset="0.8410" stop-color="#ff0062"/></linearGradient>
<linearGradient id="c102" gradientUnits="userSpaceOnUse" x1="1033" x2="1681" y1="0" y2="0"><stop offset="0.0833" stop-color="#007fff"/><stop offset="0.2531" stop-color="#0056ff"/><stop offset="0.3071" stop-color="#3e47ff"/><stop offset="0.4907" stop-color="#ff0eff"/><stop offset="0.5247" stop-color="#ff00e0"/><stop offset="0.5725" stop-color="#ff00be"/><stop offset="0.6281" stop-color="#ff00a1"/><stop offset="0.7222" stop-color="#ff007f"/><stop offset="0.8380" stop-color="#ff0063"/></linearGradient>
<linearGradient id="c103" gradientUnits="userSpaceOnUse" x1="1033" x2="1681" y1="0" y2="0"><stop offset="0.0849" stop-color="#007dff"/><stop offset="0.2531" stop-color="#0054ff"/><stop offset="0.3102" stop-color="#4045ff"/><stop offset="0.4938" stop-color="#ff0bff"/><stop offset="0.5216" stop-color="#ff00e5"/><stop offset="0.5540" stop-color="#ff00cc"/><stop offset="0.6281" stop-color="#ff00a3"/><stop offset="0.7207" stop-color="#ff0081"/><stop offset="0.8349" stop-color="#ff0065"/></linearGradient>
<linearGradient id="c104" gradientUnits="userSpaceOnUse" x1="1033" x2="1681" y1="0" y2="0"><stop offset="0.0864" stop-color="#007bff"/><stop offset="0.2546" stop-color="#0152ff"/><stop offset="0.3086" stop-color="#3e44ff"/><stop offset="0.4969" stop-color="#ff09ff"/><stop offset="0.5185" stop-color="#ff00eb"/><stop offset="0.5571" stop-color="#ff00cd"/><stop offset="0.6296" stop-color="#ff00a4"/><stop offset="0.7207" stop-color="#ff0083"/><stop offset="0.8318" stop-color="#ff0067"/></linearGradient>
<linearGradient id="c105" gradientUnits="userSpaceOnUse" x1="1033" x2="1681" y1="0" y2="0"><stop offset="0.0880" stop-color="#0078ff"/><stop offset="0.2546" stop-color="#0050ff"/><stop offset="0.3102" stop-color="#3e42ff"/><stop offset="0.5000" stop-color="#ff06ff"/><stop offset="0.5154" stop-color="#ff00f0"/><stop offset="0.5602" stop-color="#ff00cd"/><stop offset="0.6312" stop-color="#ff00a6"/><stop offset="0.7191" stop-color="#ff0085"/><stop offset="0.8287" stop-color="#ff0069"/></linearGradient>
<linearGradient id="c106" gradientUnits="userSpaceOnUse" x1="1033" x2="1681" y1="0" y2="0"><stop offset="0.0895" stop-color="#0076ff"/><stop offset="0.2546" stop-color="#004fff"/><stop offset="0.3133" stop-color="#403fff"/><stop offset="0.4228" stop-color="#ae20ff"/><stop offset="0.5031" stop-color="#ff04ff"/><stop offset="0.5123" stop-color="#ff00f6"/><stop offset="0.5617" stop-color="#ff00cf"/><stop offset="0.6327" stop-color="#ff00a7"/><stop offset="0.7191" stop-color="#ff0086"/><stop offset="0.8256" stop-color="#ff006b"/></linearGradient>
<linearGradient id="c107" gradientUnits="userSpaceOnUse" x1="1033" x2="1681" y1="0" y2="0"><stop offset="0.0910" stop-color="#0074ff"/><stop offset="0.2562" stop-color="#014dff"/><stop offset="0.3117" stop-color="#3d3eff"/><stop offset="0.4275" stop-color="#b01dff"/><stop offset="0.5062" stop-color="#ff01ff"/><stop offset="0.5648" stop-color="#ff00cf"/><stop offset="0.6343" stop-color="#ff00a8"/><stop offset="0.7191" stop-color="#ff0088"/><stop offset="0.8225" stop-color="#ff006d"/></linearGradient>
<linearGradient id="c108" gradientUnits="userSpaceOnUse" x1="1033" x2="1681" y1="0" y2="0"><stop offset="0.0926" stop-color="#0072ff"/><stop offset="0.2562" stop-color="#004bff"/><stop offset="0.3133" stop-color="#3e3cff"/><stop offset="0.5093" stop-color="#ff00ff"/><stop offset="0.5664" stop-color="#ff00d0"/><stop offset="0.6358" stop-color="#ff00aa"/><stop offset="0.7191" stop-color="#ff008a"/><stop offset="0.8194" stop-color="#ff006f"/></linearGradient>
<linearGradient id="c109" gradientUnits="userSpaceOnUse" x1="1033" x2="1681" y1="0" y2="0"><stop offset="0.0941" stop-color="#0070ff"/><stop offset="0.2562" stop-color="#004aff"/><stop offset="0.3164" stop-color="#403aff"/><stop offset="0.4290" stop-color="#ad1aff"/><stop offset="0.5031" stop-color="#f600ff"/><stop offset="0.5123" stop-color="#ff00ff"/><stop offset="0.5694" stop-color="#ff00d1"/><stop offset="0.6358" stop-color="#ff00ac"/><stop offset="0.7176" stop-color="#ff008c"/><stop offset="0.8164" stop-color="#ff0071"/></linearGradient>
<linearGradient id="c110" gradientUnits="userSpaceOnUse" x1="1033" x2="1681" y1="0" y2="0"><stop offset="0.0957" stop-color="#006eff"/><stop offset="0.2577" stop-color="#0148ff"/><stop offset="0.3164" stop-color="#3f39ff"/><stop offset="0.4275" stop-color="#aa19ff"/><stop offset="0.5000" stop-color="#f000ff"/><stop offset="0.5154" stop-color="#ff00ff"/><stop offset="0.5710" stop-color="#ff00d2"/><stop offset="0.6373" stop-color="#ff00ad"/><stop offset="0.7176" stop-color="#ff008e"/><stop offset="0.8133" stop-color="#ff0073"/></linearGradient>
<linearGradient id="c111" gradientUnits="userSpaceOnUse" x1="1033" x2="1681" y1="0" y2="0"><stop offset="0.0972" stop-color="#006cff"/><stop offset="0.2577" stop-color="#0046ff"/><stop offset="0.3148" stop-color="#3c38ff"/><stop offset="0.4259" stop-color="#a618ff"/><stop offset="0.4969" stop-color="#ea00ff"/><stop offset="0.5185" stop-color="#ff00ff"/><stop offset="0.5741" stop-color="#ff00d3"/><stop offset="0.6389" stop-color="#ff00ae"/><stop offset="0.7176" stop-color="#ff008f"/><stop offset="0.8102" stop-color="#ff0076"/></linearGradient>
<linearGradient id="c112" gradientUnits="userSpaceOnUse" x1="1033" x2="1681" y1="0" y2="0"><stop offset="0.0988" stop-color="#006aff"/><stop offset="0.2577" stop-color="#0045ff"/><stop offset="0.3164" stop-color="#3d36ff"/><stop offset="0.4244" stop-color="#a318ff"/><stop offset="0.4938" stop-color="#e400ff"/><stop offset="0.5216" stop-color="#ff00ff"/><stop offset="0.5772" stop-color="#ff00d3"/><stop offset="0.6404" stop-color="#ff00b0"/><stop offset="0.7160" stop-color="#ff0091"/><stop offset="0.8071" stop-color="#ff0078"/></linearGradient>
<linearGradient id="c113" gradientUnits="userSpaceOnUse" x1="1033" x2="1681" y1="0" y2="0"><stop offset="0.1003" stop-color="#0068ff"/><stop offset="0.2593" stop-color="#0143ff"/><stop offset="0.3164" stop-color="#3c35ff"/><stop offset="0.4228" stop-color="#9f17ff"/><stop offset="0.4907" stop-color="#df00ff"/><stop offset="0.5247" stop-color="#ff00ff"/><stop offset="0.5787" stop-color="#ff00d4"/><stop offset="0.6404" stop-color="#ff00b2"/><stop offset="0.7145" stop-color="#ff0094"/><stop offset="0.8040" stop-color="#ff007a"/></linearGradient>
<linearGradient id="c114" gradientUnits="userSpaceOnUse" x1="1033" x2="1681" y1="0" y2="0"><stop offset="0.1019" stop-color="#0066ff"/><stop offset="0.2593" stop-color="#0042ff"/><stop offset="0.3164" stop-color="#3b33ff"/><stop offset="0.4877" stop-color="#d900ff"/><stop offset="0.5278" stop-color="#ff00ff"/><stop offset="0.5802" stop-color="#ff00d6"/><stop offset="0.6420" stop-color="#ff00b3"/><stop offset="0.7160" stop-color="#ff0095"/><stop offset="0.8025" stop-color="#ff007c"/></linearGradient>
<linearGradient id="c115" gradientUnits="userSpaceOnUse" x1="1033" x2="1681" y1="0" y2="0"><stop offset="0.1049" stop-color="#0063ff"/><stop offset="0.2593" stop-color="#0040ff"/><stop offset="0.3179" stop-color="#3b32ff"/><stop offset="0.4846" stop-color="#d400ff"/><stop offset="0.5309" stop-color="#ff00ff"/><stop offset="0.5833" stop-color="#ff00d6"/><stop offset="0.6435" stop-color="#ff00b4"/><stop offset="0.7145" stop-color="#ff0097"/><stop offset="0.7994" stop-color="#ff007e"/></linearGradient>
<linearGradient id="c116" gradientUnits="userSpaceOnUse" x1="1033" x2="1681" y1="0" y2="0"><stop offset="0.1065" stop-color="#0062ff"/><stop offset="0.2608" stop-color="#013fff"/><stop offset="0.3179" stop-color="#3a31ff"/><stop offset="0.4815" stop-color="#cf00ff"/><stop offset="0.5340" stop-color="#ff00ff"/><stop offset="0.5864" stop-color="#ff00d6"/><stop offset="0.6451" stop-color="#ff00b5"/><stop offset="0.7145" stop-color="#ff0099"/><stop offset="0.7963" stop-color="#ff0080"/></linearGradient>
<linearGradient id="c117" gradientUnits="userSpaceOnUse" x1="1033" x2="1681" y1="0" y2="0"><stop offset="0.1080" stop-color="#0060ff"/><stop offset="0.2608" stop-color="#003dff"/><stop offset="0.3179" stop-color="#392fff"/><stop offset="0.4784" stop-color="#ca00ff"/><stop offset="0.5370" stop-color="#ff00ff"/><stop offset="0.5880" stop-color="#ff00d8"/><stop offset="0.6451" stop-color="#ff00b7"/><stop offset="0.7130" stop-color="#ff009b"/><stop offset="0.7932" stop-color="#ff0082"/></linearGradient>
<linearGradient id="c118" gradientUnits="userSpaceOnUse" x1="1033" x2="1681" y1="0" y2="0"><stop offset="0.1096" stop-color="#005eff"/><stop offset="0.2608" stop-color="#003cff"/><stop offset="0.3194" stop-color="#3a2eff"/><stop offset="0.4753" stop-color="#c500ff"/><stop offset="0.5401" stop-color="#ff00ff"/><stop offset="0.5895" stop-color="#ff00d9"/><stop offset="0.6466" stop-color="#ff00b9"/><stop offset="0.7130" stop-color="#ff009d"/><stop offset="0.7901" stop-color="#ff0085"/></linearGradient>
<linearGradient id="c119" gradientUnits="userSpaceOnUse" x1="1033" x2="1681" y1="0" y2="0"><stop offset="0.1111" stop-color="#005cff"/><stop offset="0.2623" stop-color="#013aff"/><stop offset="0.3194" stop-color="#392cff"/><stop offset="0.4722" stop-color="#c000ff"/><stop offset="0.5432" stop-color="#ff00ff"/><stop offset="0.5926" stop-color="#ff00d9"/><stop offset="0.6481" stop-color="#ff00ba"/><stop offset="0.7130" stop-color="#ff009e"/><stop offset="0.7870" stop-color="#ff0087"/></linearGradient>
<linearGradient id="c120" gradientUnits="userSpaceOnUse" x1="1033" x2="1681" y1="0" y2="0"><stop offset="0.1127" stop-color="#005aff"/><stop offset="0.2623" stop-color="#0039ff"/><stop offset="0.3179" stop-color="#362cff"/><stop offset="0.4691" stop-color="#bb00ff"/><stop offset="0.5463" stop-color="#ff00ff"/><stop offset="0.5941" stop-color="#ff00db"/><stop offset="0.6481" stop-color="#ff00bc"/><stop offset="0.7114" stop-color="#ff00a1"/><stop offset="0.7840" stop-color="#ff0089"/></linearGradient>
<linearGradient id="c121" gradientUnits="userSpaceOnUse" x1="1033" x2="1681" y1="0" y2="0"><stop offset="0.1142" stop-color="#0059ff"/><stop offset="0.2623" stop-color="#0038ff"/><stop offset="0.3194" stop-color="#372aff"/><stop offset="0.4660" stop-color="#b600ff"/><stop offset="0.5494" stop-color="#ff00ff"/><stop offset="0.5972" stop-color="#ff00db"/><stop offset="0.6497" stop-color="#ff00bd"/><stop offset="0.7114" stop-color="#ff00a2"/><stop offset="0.7809" stop-color="#ff008c"/></linearGradient>
<linearGradient id="c122" gradientUnits="userSpaceOnUse" x1="1033" x2="1681" y1="0" y2="0"><stop offset="0.1157" stop-color="#0057ff"/><stop offset="0.2623" stop-color="#0037ff"/><stop offset="0.3225" stop-color="#3928ff"/><stop offset="0.4630" stop-color="#b100ff"/><stop offset="0.5525" stop-color="#ff00ff"/><stop offset="0.5988" stop-color="#ff00dc"/><stop offset="0.6497" stop-color="#ff00bf"/><stop offset="0.7099" stop-color="#ff00a5"/><stop offset="0.7778" stop-color="#ff008e"/></linearGradient>
<linearGradient id="c123" gradientUnits="userSpaceOnUse" x1="1033" x2="1681" y1="0" y2="0"><stop offset="0.1188" stop-color="#0055ff"/><stop offset="0.2639" stop-color="#0035ff"/><stop offset="0.3179" stop-color="#3428ff"/><stop offset="0.4599" stop-color="#ad00ff"/><stop offset="0.5556" stop-color="#ff00ff"/><stop offset="0.6019" stop-color="#ff00dd"/><stop offset="0.6512" stop-color="#ff00c0"/><stop offset="0.7083" stop-color="#ff00a7"/><stop offset="0.7747" stop-color="#ff0090"/></linearGradient>
<linearGradient id="c124" gradientUnits="userSpaceOnUse" x1="1033" x2="1681" y1="0" y2="0"><stop offset="0.1204" stop-color="#0053ff"/><stop offset="0.2639" stop-color="#0034ff"/><stop offset="0.3194" stop-color="#3427ff"/><stop offset="0.4583" stop-color="#aa00ff"/><stop offset="0.5586" stop-color="#ff00ff"/><stop offset="0.6034" stop-color="#ff00de"/><stop offset="0.6512" stop-color="#ff00c2"/><stop offset="0.7068" stop-color="#ff00a9"/><stop offset="0.7716" stop-color="#ff0093"/></linearGradient>
<linearGradient id="c125" gradientUnits="userSpaceOnUse" x1="1033" x2="1681" y1="0" y2="0"><stop offset="0.1219" stop-color="#0052ff"/><stop offset="0.2639" stop-color="#0033ff"/><stop offset="0.3225" stop-color="#3625ff"/><stop offset="0.4552" stop-color="#a500ff"/><stop offset="0.5617" stop-color="#ff00ff"/><stop offset="0.6049" stop-color="#ff00df"/><stop offset="0.6528" stop-color="#ff00c3"/><stop offset="0.7068" stop-color="#ff00ab"/><stop offset="0.7685" stop-color="#ff0095"/></linearGradient>
<linearGradient id="c126" gradientUnits="userSpaceOnUse" x1="1033" x2="1681" y1="0" y2="0"><stop offset="0.1235" stop-color="#0050ff"/><stop offset="0.2654" stop-color="#0031ff"/><stop offset="0.3194" stop-color="#3325ff"/><stop offset="0.4522" stop-color="#a100ff"/><stop offset="0.5648" stop-color="#ff00ff"/><stop offset="0.6080" stop-color="#ff00df"/><stop offset="0.6543" stop-color="#ff00c5"/><stop offset="0.7068" stop-color="#ff00ad"/><stop offset="0.7654" stop-color="#ff0098"/></linearGradient>
<linearGradient id="c127" gradientUnits="userSpaceOnUse" x1="1033" x2="1681" y1="0" y2="0"><stop offset="0.1250" stop-color="#004eff"/><stop offset="0.2654" stop-color="#0030ff"/><stop offset="0.3194" stop-color="#3224ff"/><stop offset="0.4491" stop-color="#9d00ff"/><stop offset="0.5679" stop-color="#ff00ff"/><stop offset="0.6096" stop-color="#ff00e1"/><stop offset="0.6543" stop-color="#ff00c7"/><stop offset="0.7052" stop-color="#ff00af"/><stop offset="0.7623" stop-color="#ff009a"/></linearGradient>
<linearGradient id="c128" gradientUnits="userSpaceOnUse" x1="1033" x2="1681" y1="0" y2="0"><stop offset="0.1265" stop-color="#004dff"/><stop offset="0.2654" stop-color="#002fff"/><stop offset="0.3210" stop-color="#3222ff"/><stop offset="0.4460" stop-color="#9900ff"/><stop offset="0.5710" stop-color="#ff00ff"/><stop offset="0.6127" stop-color="#ff00e1"/><stop offset="0.6559" stop-color="#ff00c8"/><stop offset="0.7593" stop-color="#ff009d"/></linearGradient>
<linearGradient id="c129" gradientUnits="userSpaceOnUse" x1="1033" x2="1681" y1="0" y2="0"><stop offset="0.1281" stop-color="#004bff"/><stop offset="0.2670" stop-color="#002eff"/><stop offset="0.3194" stop-color="#3022ff"/><stop offset="0.4429" stop-color="#9500ff"/><stop offset="0.5741" stop-color="#ff00ff"/><stop offset="0.6142" stop-color="#ff00e2"/><stop offset="0.6559" stop-color="#ff00ca"/><stop offset="0.7562" stop-color="#ff009f"/></linearGradient>
<linearGradient id="c130" gradientUnits="userSpaceOnUse" x1="1033" x2="1681" y1="0" y2="0"><stop offset="0.1312" stop-color="#004aff"/><stop offset="0.2670" stop-color="#002dff"/><stop offset="0.3194" stop-color="#2f21ff"/><stop offset="0.4398" stop-color="#9000ff"/><stop offset="0.5772" stop-color="#ff00ff"/><stop offset="0.6173" stop-color="#ff00e2"/><stop offset="0.6574" stop-color="#ff00cb"/><stop offset="0.7546" stop-color="#ff00a2"/></linearGradient>
<linearGradient id="c131" gradientUnits="userSpaceOnUse" x1="1033" x2="1681" y1="0" y2="0"><stop offset="0.1327" stop-color="#0048ff"/><stop offset="0.2670" stop-color="#002cff"/><stop offset="0.3210" stop-color="#301fff"/><stop offset="0.4367" stop-color="#8c00ff"/><stop offset="0.5802" stop-color="#ff00ff"/><stop offset="0.6574" stop-color="#ff00cd"/><stop offset="0.7515" stop-color="#ff00a4"/></linearGradient>
<linearGradient id="c132" gradientUnits="userSpaceOnUse" x1="1033" x2="1681" y1="0" y2="0"><stop offset="0.1343" stop-color="#0047ff"/><stop offset="0.2685" stop-color="#002aff"/><stop offset="0.3179" stop-color="#2d1fff"/><stop offset="0.4336" stop-color="#8900ff"/><stop offset="0.5833" stop-color="#ff00ff"/><stop offset="0.6590" stop-color="#ff00ce"/><stop offset="0.7485" stop-color="#ff00a7"/></linearGradient>
<linearGradient id="c133" gradientUnits="userSpaceOnUse" x1="1033" x2="1681" y1="0" y2="0"><stop offset="0.1358" stop-color="#0045ff"/><stop offset="0.2685" stop-color="#0029ff"/><stop offset="0.3179" stop-color="#2c1eff"/><stop offset="0.4306" stop-color="#8500ff"/><stop offset="0.5864" stop-color="#ff00ff"/><stop offset="0.6590" stop-color="#ff00d0"/><stop offset="0.7454" stop-color="#ff00aa"/></linearGradient>
<linearGradient id="c134" gradientUnits="userSpaceOnUse" x1="1033" x2="1681" y1="0" y2="0"><stop offset="0.1373" stop-color="#0044ff"/><stop offset="0.2685" stop-color="#0028ff"/><stop offset="0.3194" stop-color="#2c1dff"/><stop offset="0.4275" stop-color="#8100ff"/><stop offset="0.5895" stop-color="#ff00ff"/><stop offset="0.6605" stop-color="#ff00d1"/><stop offset="0.7423" stop-color="#ff00ac"/></linearGradient>
<linearGradient id="c135" gradientUnits="userSpaceOnUse" x1="1033" x2="1681" y1="0" y2="0"><stop offset="0.1404" stop-color="#0042ff"/><stop offset="0.2701" stop-color="#0027ff"/><stop offset="0.3179" stop-color="#2a1cff"/><stop offset="0.4244" stop-color="#7d00ff"/><stop offset="0.5926" stop-color="#ff00ff"/><stop offset="0.6605" stop-color="#ff00d3"/><stop offset="0.7392" stop-color="#ff00af"/></linearGradient>
<linearGradient id="c136" gradientUnits="userSpaceOnUse" x1="1033" x2="1681" y1="0" y2="0"><stop offset="0.1420" stop-color="#0040ff"/><stop offset="0.2701" stop-color="#0026ff"/><stop offset="0.3164" stop-color="#281cff"/><stop offset="0.4213" stop-color="#7a00ff"/><stop offset="0.5957" stop-color="#ff00ff"/><stop offset="0.6605" stop-color="#ff00d5"/><stop offset="0.7361" stop-color="#ff00b2"/></linearGradient>
<linearGradient id="c137" gradientUnits="userSpaceOnUse" x1="1033" x2="1681" y1="0" y2="0"><stop offset="0.1435" stop-color="#003fff"/><stop offset="0.2701" stop-color="#0025ff"/><stop offset="0.3194" stop-color="#2a1aff"/><stop offset="0.4182" stop-color="#7600ff"/><stop offset="0.5988" stop-color="#ff00ff"/><stop offset="0.6620" stop-color="#ff00d6"/><stop offset="0.7330" stop-color="#ff00b5"/></linearGradient>
<linearGradient id="c138" gradientUnits="userSpaceOnUse" x1="1033" x2="1681" y1="0" y2="0"><stop offset="0.1451" stop-color="#003eff"/><stop offset="0.2716" stop-color="#0124ff"/><stop offset="0.3164" stop-color="#271aff"/><stop offset="0.4151" stop-color="#7200ff"/><stop offset="0.6019" stop-color="#ff00ff"/><stop offset="0.6620" stop-color="#ff00d8"/><stop offset="0.7299" stop-color="#ff00b8"/></linearGradient>
<linearGradient id="c139" gradientUnits="userSpaceOnUse" x1="1033" x2="1681" y1="0" y2="0"><stop offset="0.1466" stop-color="#003cff"/><stop offset="0.2716" stop-color="#0023ff"/><stop offset="0.3164" stop-color="#2619ff"/><stop offset="0.4120" stop-color="#6f00ff"/><stop offset="0.6049" stop-color="#ff00ff"/><stop offset="0.6620" stop-color="#ff00da"/><stop offset="0.7269" stop-color="#ff00bb"/></linearGradient>
<linearGradient id="c140" gradientUnits="userSpaceOnUse" x1="1033" x2="1681" y1="0" y2="0"><stop offset="0.1497" stop-color="#003bff"/><stop offset="0.2716" stop-color="#0022ff"/><stop offset="0.3179" stop-color="#2718ff"/><stop offset="0.4090" stop-color="#6b00ff"/><stop offset="0.6080" stop-color="#ff00ff"/><stop offset="0.6636" stop-color="#ff00db"/><stop offset="0.7238" stop-color="#ff00be"/></linearGradient>
<linearGradient id="c141" gradientUnits="userSpaceOnUse" x1="1033" x2="1681" y1="0" y2="0"><stop offset="0.1512" stop-color="#0039ff"/><stop offset="0.2731" stop-color="#0121ff"/><stop offset="0.3164" stop-color="#2517ff"/><stop offset="0.4059" stop-color="#6800ff"/><stop offset="0.6111" stop-color="#ff00ff"/><stop offset="0.6636" stop-color="#ff00dd"/><stop offset="0.7207" stop-color="#ff00c1"/></linearGradient>
<linearGradient id="c142" gradientUnits="userSpaceOnUse" x1="1033" x2="1681" y1="0" y2="0"><stop offset="0.1528" stop-color="#0038ff"/><stop offset="0.2731" stop-color="#0020ff"/><stop offset="0.3148" stop-color="#2317ff"/><stop offset="0.4043" stop-color="#6600ff"/><stop offset="0.6142" stop-color="#ff00ff"/><stop offset="0.6636" stop-color="#ff00df"/><stop offset="0.7176" stop-color="#ff00c4"/></linearGradient>
<linearGradient id="c143" gradientUnits="userSpaceOnUse" x1="1033" x2="1681" y1="0" y2="0"><stop offset="0.1543" stop-color="#0037ff"/><stop offset="0.2731" stop-color="#001fff"/><stop offset="0.3164" stop-color="#2415ff"/><stop offset="0.4012" stop-color="#6300ff"/><stop offset="0.6173" stop-color="#ff00ff"/><stop offset="0.6651" stop-color="#ff00e0"/><stop offset="0.7145" stop-color="#ff00c7"/></linearGradient>
<linearGradient id="c144" gradientUnits="userSpaceOnUse" x1="1033" x2="1681" y1="0" y2="0"><stop offset="0.1559" stop-color="#0036ff"/><stop offset="0.2747" stop-color="#011eff"/><stop offset="0.3148" stop-color="#2215ff"/><stop offset="0.3981" stop-color="#5f00ff"/><stop offset="0.6204" stop-color="#ff00ff"/><stop offset="0.6651" stop-color="#ff00e2"/><stop offset="0.7114" stop-color="#ff00ca"/></linearGradient>
<linearGradient id="c145" gradientUnits="userSpaceOnUse" x1="1033" x2="1681" y1="0" y2="0"><stop offset="0.1590" stop-color="#0034ff"/><stop offset="0.2747" stop-color="#001dff"/><stop offset="0.3133" stop-color="#2014ff"/><stop offset="0.3951" stop-color="#5c00ff"/><stop offset="0.6235" stop-color="#ff00ff"/><stop offset="0.7083" stop-color="#ff00ce"/></linearGradient>
<linearGradient id="c146" gradientUnits="userSpaceOnUse" x1="1033" x2="1681" y1="0" y2="0"><stop offset="0.1605" stop-color="#0033ff"/><stop offset="0.2747" stop-color="#001cff"/><stop offset="0.3920" stop-color="#5900ff"/><stop offset="0.6265" stop-color="#ff00ff"/><stop offset="0.7068" stop-color="#ff00d0"/></linearGradient>
<linearGradient id="c147" gradientUnits="userSpaceOnUse" x1="1033" x2="1681" y1="0" y2="0"><stop offset="0.1620" stop-color="#0032ff"/><stop offset="0.2762" stop-color="#011bff"/><stop offset="0.3889" stop-color="#5600ff"/><stop offset="0.6296" stop-color="#ff00ff"/><stop offset="0.7037" stop-color="#ff00d3"/></linearGradient>
<linearGradient id="c148" gradientUnits="userSpaceOnUse" x1="1033" x2="1681" y1="0" y2="0"><stop offset="0.1636" stop-color="#0030ff"/><stop offset="0.2762" stop-color="#001aff"/><stop offset="0.3858" stop-color="#5300ff"/><stop offset="0.6327" stop-color="#ff00ff"/><stop offset="0.7006" stop-color="#ff00d7"/></linearGradient>
<linearGradient id="c149" gradientUnits="userSpaceOnUse" x1="1033" x2="1681" y1="0" y2="0"><stop offset="0.1667" stop-color="#002fff"/><stop offset="0.2762" stop-color="#0019ff"/><stop offset="0.3827" stop-color="#5000ff"/><stop offset="0.6358" stop-color="#ff00ff"/><stop offset="0.6975" stop-color="#ff00da"/></linearGradient>
<linearGradient id="c150" gradientUnits="userSpaceOnUse" x1="1033" x2="1681" y1="0" y2="0"><stop offset="0.1682" stop-color="#002eff"/><stop offset="0.2778" stop-color="#0118ff"/><stop offset="0.3796" stop-color="#4d00ff"/><stop offset="0.6389" stop-color="#ff00ff"/><stop offset="0.6944" stop-color="#ff00de"/></linearGradient>
<linearGradient id="c151" gradientUnits="userSpaceOnUse" x1="1033" x2="1681" y1="0" y2="0"><stop offset="0.1698" stop-color="#002cff"/><stop offset="0.2778" stop-color="#0017ff"/><stop offset="0.3765" stop-color="#4a00ff"/><stop offset="0.6420" stop-color="#ff00ff"/><stop offset="0.6914" stop-color="#ff00e1"/></linearGradient>
<linearGradient id="c152" gradientUnits="userSpaceOnUse" x1="1033" x2="1681" y1="0" y2="0"><stop offset="0.1713" stop-color="#002bff"/><stop offset="0.2778" stop-color="#0016ff"/><stop offset="0.3735" stop-color="#4700ff"/><stop offset="0.6451" stop-color="#ff00ff"/><stop offset="0.6883" stop-color="#ff00e5"/></linearGradient>
<linearGradient id="c153" gradientUnits="userSpaceOnUse" x1="1033" x2="1681" y1="0" y2="0"><stop offset="0.1744" stop-color="#002aff"/><stop offset="0.2793" stop-color="#0115ff"/><stop offset="0.3704" stop-color="#4400ff"/><stop offset="0.6481" stop-color="#ff00ff"/><stop offset="0.6852" stop-color="#ff00e8"/></linearGradient>
<linearGradient id="c154" gradientUnits="userSpaceOnUse" x1="1033" x2="1681" y1="0" y2="0"><stop offset="0.1759" stop-color="#0029ff"/><stop offset="0.2793" stop-color="#0014ff"/><stop offset="0.3673" stop-color="#4100ff"/><stop offset="0.6512" stop-color="#ff00ff"/><stop offset="0.6821" stop-color="#ff00ec"/></linearGradient>
<linearGradient id="c155" gradientUnits="userSpaceOnUse" x1="1033" x2="1681" y1="0" y2="0"><stop offset="0.1775" stop-color="#0028ff"/><stop offset="0.2793" stop-color="#0014ff"/><stop offset="0.3642" stop-color="#3e00ff"/><stop offset="0.6543" stop-color="#ff00ff"/><stop offset="0.6790" stop-color="#ff00f0"/></linearGradient>
<linearGradient id="c156" gradientUnits="userSpaceOnUse" x1="1033" x2="1681" y1="0" y2="0"><stop offset="0.1806" stop-color="#0026ff"/><stop offset="0.2809" stop-color="#0113ff"/><stop offset="0.3611" stop-color="#3b00ff"/><stop offset="0.6574" stop-color="#ff00ff"/><stop offset="0.6759" stop-color="#ff00f4"/></linearGradient>
<linearGradient id="c157" gradientUnits="userSpaceOnUse" x1="1033" x2="1681" y1="0" y2="0"><stop offset="0.1821" stop-color="#0025ff"/><stop offset="0.2809" stop-color="#0012ff"/><stop offset="0.3580" stop-color="#3800ff"/><stop offset="0.6605" stop-color="#ff00ff"/><stop offset="0.6728" stop-color="#ff00f8"/></linearGradient>
<linearGradient id="c158" gradientUnits="userSpaceOnUse" x1="1033" x2="1681" y1="0" y2="0"><stop offset="0.1836" stop-color="#0024ff"/><stop offset="0.2809" stop-color="#0011ff"/><stop offset="0.3549" stop-color="#3600ff"/><stop offset="0.6636" stop-color="#ff00ff"/><stop offset="0.6698" stop-color="#ff00fb"/></linearGradient>
<linearGradient id="c159" gradientUnits="userSpaceOnUse" x1="1033" x2="1681" y1="0" y2="0"><stop offset="0.1852" stop-color="#0023ff"/><stop offset="0.2824" stop-color="#0110ff"/><stop offset="0.3519" stop-color="#3300ff"/><stop offset="0.6667" stop-color="#ff00ff"/></linearGradient>
<linearGradient id="c160" gradientUnits="userSpaceOnUse" x1="1033" x2="1681" y1="0" y2="0"><stop offset="0.1883" stop-color="#0022ff"/><stop offset="0.2824" stop-color="#000fff"/><stop offset="0.3488" stop-color="#3000ff"/><stop offset="0.6636" stop-color="#fb00ff"/></linearGradient>
<linearGradient id="c161" gradientUnits="userSpaceOnUse" x1="1033" x2="1681" y1="0" y2="0"><stop offset="0.1898" stop-color="#0021ff"/><stop offset="0.2824" stop-color="#000fff"/><stop offset="0.3457" stop-color="#2e00ff"/><stop offset="0.6605" stop-color="#f700ff"/></linearGradient>
<linearGradient id="c162" gradientUnits="userSpaceOnUse" x1="1033" x2="1681" y1="0" y2="0"><stop offset="0.1914" stop-color="#0020ff"/><stop offset="0.2824" stop-color="#000eff"/><stop offset="0.3441" stop-color="#2c00ff"/><stop offset="0.6574" stop-color="#f300ff"/></linearGradient>
<linearGradient id="c163" gradientUnits="userSpaceOnUse" x1="1033" x2="1681" y1="0" y2="0"><stop offset="0.1944" stop-color="#001eff"/><stop offset="0.2840" stop-color="#000dff"/><stop offset="0.3410" stop-color="#2900ff"/><stop offset="0.6559" stop-color="#f000ff"/></linearGradient>
<linearGradient id="c164" gradientUnits="userSpaceOnUse" x1="1033" x2="1681" y1="0" y2="0"><stop offset="0.1960" stop-color="#001dff"/><stop offset="0.2840" stop-color="#000cff"/><stop offset="0.3380" stop-color="#2700ff"/><stop offset="0.6528" stop-color="#ec00ff"/></linearGradient>
<linearGradient id="c165" gradientUnits="userSpaceOnUse" x1="1033" x2="1681" y1="0" y2="0"><stop offset="0.1991" stop-color="#001cff"/><stop offset="0.2840" stop-color="#000bff"/><stop offset="0.3349" stop-color="#2400ff"/><stop offset="0.6497" stop-color="#e800ff"/></linearGradient>
<linearGradient id="c166" gradientUnits="userSpaceOnUse" x1="1033" x2="1681" y1="0" y2="0"><stop offset="0.2006" stop-color="#001bff"/><stop offset="0.2855" stop-color="#000aff"/><stop offset="0.3318" stop-color="#2100ff"/><stop offset="0.6466" stop-color="#e500ff"/></linearGradient>
<linearGradient id="c167" gradientUnits="userSpaceOnUse" x1="1033" x2="1681" y1="0" y2="0"><stop offset="0.2022" stop-color="#001aff"/><stop offset="0.2855" stop-color="#000aff"/><stop offset="0.3287" stop-color="#1f00ff"/><stop offset="0.6435" stop-color="#e100ff"/></linearGradient>
<linearGradient id="c168" gradientUnits="userSpaceOnUse" x1="1033" x2="1681" y1="0" y2="0"><stop offset="0.2052" stop-color="#0019ff"/><stop offset="0.2855" stop-color="#0009ff"/><stop offset="0.3256" stop-color="#1c00ff"/><stop offset="0.6404" stop-color="#dd00ff"/></linearGradient>
<linearGradient id="c169" gradientUnits="userSpaceOnUse" x1="1033" x2="1681" y1="0" y2="0"><stop offset="0.2068" stop-color="#0018ff"/><stop offset="0.2870" stop-color="#0008ff"/><stop offset="0.3225" stop-color="#1a00ff"/><stop offset="0.6373" stop-color="#da00ff"/></linearGradient>
<linearGradient id="c170" gradientUnits="userSpaceOnUse" x1="1033" x2="1681" y1="0" y2="0"><stop offset="0.2083" stop-color="#0017ff"/><stop offset="0.2870" stop-color="#0007ff"/><stop offset="0.3194" stop-color="#1700ff"/><stop offset="0.6343" stop-color="#d600ff"/></linearGradient>
<linearGradient id="c171" gradientUnits="userSpaceOnUse" x1="1033" x2="1681" y1="0" y2="0"><stop offset="0.2114" stop-color="#0015ff"/><stop offset="0.2870" stop-color="#0007ff"/><stop offset="0.3164" stop-color="#1500ff"/><stop offset="0.6312" stop-color="#d300ff"/></linearGradient>
<linearGradient id="c172" gradientUnits="userSpaceOnUse" x1="1033" x2="1681" y1="0" y2="0"><stop offset="0.2130" stop-color="#0014ff"/><stop offset="0.2886" stop-color="#0006ff"/><stop offset="0.3133" stop-color="#1200ff"/><stop offset="0.6281" stop-color="#d000ff"/></linearGradient>
<linearGradient id="c173" gradientUnits="userSpaceOnUse" x1="1033" x2="1681" y1="0" y2="0"><stop offset="0.2160" stop-color="#0013ff"/><stop offset="0.2886" stop-color="#0005ff"/><stop offset="0.3102" stop-color="#1000ff"/><stop offset="0.6250" stop-color="#cc00ff"/></linearGradient>
<linearGradient id="c174" gradientUnits="userSpaceOnUse" x1="1033" x2="1681" y1="0" y2="0"><stop offset="0.2176" stop-color="#0012ff"/><stop offset="0.2886" stop-color="#0004ff"/><stop offset="0.3071" stop-color="#0d00ff"/><stop offset="0.6219" stop-color="#c900ff"/></linearGradient>
<linearGradient id="c175" gradientUnits="userSpaceOnUse" x1="1033" x2="1681" y1="0" y2="0"><stop offset="0.2207" stop-color="#0011ff"/><stop offset="0.2901" stop-color="#0003ff"/><stop offset="0.3040" stop-color="#0b00ff"/><stop offset="0.3765" stop-color="#3800ff"/><stop offset="0.6188" stop-color="#c600ff"/></linearGradient>
<linearGradient id="c176" gradientUnits="userSpaceOnUse" x1="1033" x2="1681" y1="0" y2="0"><stop offset="0.2222" stop-color="#0010ff"/><stop offset="0.2901" stop-color="#0003ff"/><stop offset="0.3750" stop-color="#3700ff"/><stop offset="0.6157" stop-color="#c200ff"/></linearGradient>
<linearGradient id="c177" gradientUnits="userSpaceOnUse" x1="1033" x2="1681" y1="0" y2="0"><stop offset="0.2253" stop-color="#000fff"/><stop offset="0.2901" stop-color="#0002ff"/><stop offset="0.3781" stop-color="#3800ff"/><stop offset="0.6127" stop-color="#bf00ff"/></linearGradient>
<linearGradient id="c178" gradientUnits="userSpaceOnUse" x1="1033" x2="1681" y1="0" y2="0"><stop offset="0.2269" stop-color="#000eff"/><stop offset="0.2917" stop-color="#0101ff"/><stop offset="0.3781" stop-color="#3700ff"/><stop offset="0.6096" stop-color="#bc00ff"/></linearGradient>
<linearGradient id="c179" gradientUnits="userSpaceOnUse" x1="1033" x2="1681" y1="0" y2="0"><stop offset="0.2299" stop-color="#000dff"/><stop offset="0.2917" stop-color="#0000ff"/><stop offset="0.3765" stop-color="#3600ff"/><stop offset="0.6080" stop-color="#ba00ff"/></linearGradient>
<linearGradient id="c180" gradientUnits="userSpaceOnUse" x1="1033" x2="1681" y1="0" y2="0"><stop offset="0.2315" stop-color="#000cff"/><stop offset="0.2917" stop-color="#0000ff"/><stop offset="0.3781" stop-color="#3600ff"/><stop offset="0.6049" stop-color="#b700ff"/></linearGradient>
<linearGradient id="c181" gradientUnits="userSpaceOnUse" x1="1033" x2="1681" y1="0" y2="0"><stop offset="0.2346" stop-color="#000bff"/><stop offset="0.2932" stop-color="#0100ff"/><stop offset="0.3781" stop-color="#3600ff"/><stop offset="0.6019" stop-color="#b400ff"/></linearGradient>
<linearGradient id="c182" gradientUnits="userSpaceOnUse" x1="1033" x2="1681" y1="0" y2="0"><stop offset="0.2361" stop-color="#000aff"/><stop offset="0.2932" stop-color="#0000ff"/><stop offset="0.3765" stop-color="#3400ff"/><stop offset="0.5988" stop-color="#b100ff"/></linearGradient>
<linearGradient id="c183" gradientUnits="userSpaceOnUse" x1="1033" x2="1681" y1="0" y2="0"><stop offset="0.2392" stop-color="#0008ff"/><stop offset="0.2932" stop-color="#0000ff"/><stop offset="0.3781" stop-color="#3500ff"/><stop offset="0.5957" stop-color="#ae00ff"/></linearGradient>
<linearGradient id="c184" gradientUnits="userSpaceOnUse" x1="1033" x2="1681" y1="0" y2="0"><stop offset="0.2407" stop-color="#0008ff"/><stop offset="0.2762" stop-color="#0000ff"/><stop offset="0.2948" stop-color="#0100ff"/><stop offset="0.3781" stop-color="#3400ff"/><stop offset="0.5926" stop-color="#ab00ff"/></linearGradient>
<linearGradient id="c185" gradientUnits="userSpaceOnUse" x1="1033" x2="1681" y1="0" y2="0"><stop offset="0.2438" stop-color="#0006ff"/><stop offset="0.2731" stop-color="#0000ff"/><stop offset="0.2948" stop-color="#0000ff"/><stop offset="0.3781" stop-color="#3300ff"/><stop offset="0.5895" stop-color="#a800ff"/></linearGradient>
<linearGradient id="c186" gradientUnits="userSpaceOnUse" x1="1033" x2="1681" y1="0" y2="0"><stop offset="0.2454" stop-color="#0005ff"/><stop offset="0.2701" stop-color="#0000ff"/><stop offset="0.2948" stop-color="#0000ff"/><stop offset="0.3781" stop-color="#3300ff"/><stop offset="0.5864" stop-color="#a500ff"/></linearGradient>
<linearGradient id="c187" gradientUnits="userSpaceOnUse" x1="1033" x2="1681" y1="0" y2="0"><stop offset="0.2485" stop-color="#0004ff"/><stop offset="0.2963" stop-color="#0100ff"/><stop offset="0.3796" stop-color="#3300ff"/><stop offset="0.5833" stop-color="#a200ff"/></linearGradient>
<linearGradient id="c188" gradientUnits="userSpaceOnUse" x1="1033" x2="1681" y1="0" y2="0"><stop offset="0.2515" stop-color="#0003ff"/><stop offset="0.2963" stop-color="#0000ff"/><stop offset="0.3781" stop-color="#3200ff"/><stop offset="0.5802" stop-color="#9f00ff"/></linearGradient>
<linearGradient id="c189" gradientUnits="userSpaceOnUse" x1="1033" x2="1681" y1="0" y2="0"><stop offset="0.2531" stop-color="#0002ff"/><stop offset="0.2963" stop-color="#0000ff"/><stop offset="0.3781" stop-color="#3100ff"/><stop offset="0.5772" stop-color="#9d00ff"/></linearGradient>
<linearGradient id="c190" gradientUnits="userSpaceOnUse" x1="1033" x2="1681" y1="0" y2="0"><stop offset="0.2562" stop-color="#0001ff"/><stop offset="0.2978" stop-color="#0100ff"/><stop offset="0.3781" stop-color="#3100ff"/><stop offset="0.5741" stop-color="#9a00ff"/></linearGradient>
<linearGradient id="c191" gradientUnits="userSpaceOnUse" x1="1033" x2="1681" y1="0" y2="0"><stop offset="0.2577" stop-color="#0000ff"/><stop offset="0.2978" stop-color="#0000ff"/><stop offset="0.3781" stop-color="#3000ff"/><stop offset="0.5710" stop-color="#9700ff"/></linearGradient>
<linearGradient id="c192" gradientUnits="userSpaceOnUse" x1="1033" x2="1681" y1="0" y2="0"><stop offset="0.2608" stop-color="#0000ff"/><stop offset="0.2978" stop-color="#0000ff"/><stop offset="0.3781" stop-color="#3000ff"/><stop offset="0.5679" stop-color="#9500ff"/></linearGradient>
<linearGradient id="c193" gradientUnits="userSpaceOnUse" x1="1033" x2="1681" y1="0" y2="0"><stop offset="0.2639" stop-color="#0000ff"/><stop offset="0.2994" stop-color="#0100ff"/><stop offset="0.3781" stop-color="#2f00ff"/><stop offset="0.5648" stop-color="#9200ff"/></linearGradient>
<linearGradient id="c194" gradientUnits="userSpaceOnUse" x1="1033" x2="1681" y1="0" y2="0"><stop offset="0.2654" stop-color="#0000ff"/><stop offset="0.2994" stop-color="#0000ff"/><stop offset="0.3765" stop-color="#2e00ff"/><stop offset="0.5617" stop-color="#8f00ff"/></linearGradient>
<linearGradient id="c195" gradientUnits="userSpaceOnUse" x1="1033" x2="1681" y1="0" y2="0"><stop offset="0.2685" stop-color="#0000ff"/><stop offset="0.2994" stop-color="#0000ff"/><stop offset="0.3781" stop-color="#2e00ff"/><stop offset="0.5602" stop-color="#8d00ff"/></linearGradient>
<linearGradient id="c196" gradientUnits="userSpaceOnUse" x1="1033" x2="1681" y1="0" y2="0"><stop offset="0.2716" stop-color="#0000ff"/><stop offset="0.3009" stop-color="#0100ff"/><stop offset="0.3781" stop-color="#2e00ff"/><stop offset="0.5571" stop-color="#8b00ff"/></linearGradient>
<linearGradient id="c197" gradientUnits="userSpaceOnUse" x1="1033" x2="1681" y1="0" y2="0"><stop offset="0.2747" stop-color="#0000ff"/><stop offset="0.3009" stop-color="#0000ff"/><stop offset="0.3765" stop-color="#2c00ff"/><stop offset="0.5540" stop-color="#8800ff"/></linearGradient>
<linearGradient id="c198" gradientUnits="userSpaceOnUse" x1="1033" x2="1681" y1="0" y2="0"><stop offset="0.2762" stop-color="#0000ff"/><stop offset="0.3009" stop-color="#0000ff"/><stop offset="0.3765" stop-color="#2c00ff"/><stop offset="0.5509" stop-color="#8600ff"/></linearGradient>
<linearGradient id="c199" gradientUnits="userSpaceOnUse" x1="1033" x2="1681" y1="0" y2="0"><stop offset="0.2793" stop-color="#0000ff"/><stop offset="0.3025" stop-color="#0100ff"/><stop offset="0.3781" stop-color="#2c00ff"/><stop offset="0.5478" stop-color="#8300ff"/></linearGradient>
<linearGradient id="c200" gradientUnits="userSpaceOnUse" x1="1033" x2="1681" y1="0" y2="0"><stop offset="0.2824" stop-color="#0000ff"/><stop offset="0.3025" stop-color="#0000ff"/><stop offset="0.3765" stop-color="#2b00ff"/><stop offset="0.5448" stop-color="#8100ff"/></linearGradient>
<linearGradient id="c201" gradientUnits="userSpaceOnUse" x1="1033" x2="1681" y1="0" y2="0"><stop offset="0.2855" stop-color="#0000ff"/><stop offset="0.3025" stop-color="#0000ff"/><stop offset="0.3750" stop-color="#2a00ff"/><stop offset="0.5417" stop-color="#7e00ff"/></linearGradient>
<linearGradient id="c202" gradientUnits="userSpaceOnUse" x1="1033" x2="1681" y1="0" y2="0"><stop offset="0.2886" stop-color="#0000ff"/><stop offset="0.3040" stop-color="#0100ff"/><stop offset="0.3765" stop-color="#2a00ff"/><stop offset="0.5386" stop-color="#7c00ff"/></linearGradient>
<linearGradient id="c203" gradientUnits="userSpaceOnUse" x1="1033" x2="1681" y1="0" y2="0"><stop offset="0.2917" stop-color="#0000ff"/><stop offset="0.3040" stop-color="#0000ff"/><stop offset="0.3750" stop-color="#2900ff"/><stop offset="0.5355" stop-color="#7a00ff"/></linearGradient>
<linearGradient id="c204" gradientUnits="userSpaceOnUse" x1="1033" x2="1681" y1="0" y2="0"><stop offset="0.2948" stop-color="#0000ff"/><stop offset="0.3040" stop-color="#0000ff"/><stop offset="0.3750" stop-color="#2800ff"/><stop offset="0.5324" stop-color="#7700ff"/></linearGradient>
<linearGradient id="c205" gradientUnits="userSpaceOnUse" x1="1033" x2="1681" y1="0" y2="0"><stop offset="0.2978" stop-color="#0000ff"/><stop offset="0.3040" stop-color="#0000ff"/><stop offset="0.3765" stop-color="#2900ff"/><stop offset="0.5293" stop-color="#7500ff"/></linearGradient>
<linearGradient id="c206" gradientUnits="userSpaceOnUse" x1="1033" x2="1681" y1="0" y2="0"><stop offset="0.3009" stop-color="#0000ff"/><stop offset="0.5262" stop-color="#7300ff"/></linearGradient>
<linearGradient id="c207" gradientUnits="userSpaceOnUse" x1="1033" x2="1681" y1="0" y2="0"><stop offset="0.3040" stop-color="#0000ff"/><stop offset="0.3812" stop-color="#2a00ff"/><stop offset="0.5231" stop-color="#7000ff"/></linearGradient>
<linearGradient id="c208" gradientUnits="userSpaceOnUse" x1="1033" x2="1681" y1="0" y2="0"><stop offset="0.3071" stop-color="#0100ff"/><stop offset="0.3750" stop-color="#2600ff"/><stop offset="0.5201" stop-color="#6e00ff"/></linearGradient>
<linearGradient id="c209" gradientUnits="userSpaceOnUse" x1="1033" x2="1681" y1="0" y2="0"><stop offset="0.3102" stop-color="#0300ff"/><stop offset="0.5170" stop-color="#6c00ff"/></linearGradient>
<linearGradient id="c210" gradientUnits="userSpaceOnUse" x1="1033" x2="1681" y1="0" y2="0"><stop offset="0.3133" stop-color="#0400ff"/><stop offset="0.5139" stop-color="#6a00ff"/></linearGradient>
<linearGradient id="c211" gradientUnits="userSpaceOnUse" x1="1033" x2="1681" y1="0" y2="0"><stop offset="0.3164" stop-color="#0600ff"/><stop offset="0.5108" stop-color="#6700ff"/></linearGradient>
<linearGradient id="c212" gradientUnits="userSpaceOnUse" x1="1033" x2="1681" y1="0" y2="0"><stop offset="0.3194" stop-color="#0700ff"/><stop offset="0.5093" stop-color="#6600ff"/></linearGradient>
<linearGradient id="c213" gradientUnits="userSpaceOnUse" x1="1033" x2="1681" y1="0" y2="0"><stop offset="0.3241" stop-color="#0a00ff"/><stop offset="0.5062" stop-color="#6400ff"/></linearGradient>
<linearGradient id="c214" gradientUnits="userSpaceOnUse" x1="1033" x2="1681" y1="0" y2="0"><stop offset="0.3272" stop-color="#0b00ff"/><stop offset="0.5031" stop-color="#6200ff"/></linearGradient>
<linearGradient id="c215" gradientUnits="userSpaceOnUse" x1="1033" x2="1681" y1="0" y2="0"><stop offset="0.3302" stop-color="#0c00ff"/><stop offset="0.5000" stop-color="#6000ff"/></linearGradient>
<linearGradient id="c216" gradientUnits="userSpaceOnUse" x1="1033" x2="1681" y1="0" y2="0"><stop offset="0.3349" stop-color="#0f00ff"/><stop offset="0.4969" stop-color="#5d00ff"/></linearGradient>
<linearGradient id="c217" gradientUnits="userSpaceOnUse" x1="1033" x2="1681" y1="0" y2="0"><stop offset="0.3380" stop-color="#1000ff"/><stop offset="0.4938" stop-color="#5b00ff"/></linearGradient>
<linearGradient id="c218" gradientUnits="userSpaceOnUse" x1="1033" x2="1681" y1="0" y2="0"><stop offset="0.3426" stop-color="#1200ff"/><stop offset="0.4907" stop-color="#5900ff"/></linearGradient>
<linearGradient id="c219" gradientUnits="userSpaceOnUse" x1="1033" x2="1681" y1="0" y2="0"><stop offset="0.3457" stop-color="#1300ff"/><stop offset="0.4877" stop-color="#5700ff"/></linearGradient>
<linearGradient id="c220" gradientUnits="userSpaceOnUse" x1="1033" x2="1681" y1="0" y2="0"><stop offset="0.3503" stop-color="#1500ff"/><stop offset="0.4846" stop-color="#5500ff"/></linearGradient>
<linearGradient id="c221" gradientUnits="userSpaceOnUse" x1="1033" x2="1681" y1="0" y2="0"><stop offset="0.3534" stop-color="#1600ff"/><stop offset="0.4815" stop-color="#5300ff"/></linearGradient>
<linearGradient id="c222" gradientUnits="userSpaceOnUse" x1="1033" x2="1681" y1="0" y2="0"><stop offset="0.3580" stop-color="#1800ff"/><stop offset="0.4784" stop-color="#5100ff"/></linearGradient>
<linearGradient id="c223" gradientUnits="userSpaceOnUse" x1="1033" x2="1681" y1="0" y2="0"><stop offset="0.3627" stop-color="#1a00ff"/><stop offset="0.4753" stop-color="#4f00ff"/></linearGradient>
<linearGradient id="c224" gradientUnits="userSpaceOnUse" x1="1033" x2="1681" y1="0" y2="0"><stop offset="0.3657" stop-color="#1c00ff"/><stop offset="0.4722" stop-color="#4d00ff"/></linearGradient>
<linearGradient id="c225" gradientUnits="userSpaceOnUse" x1="1033" x2="1681" y1="0" y2="0"><stop offset="0.3704" stop-color="#1d00ff"/><stop offset="0.4691" stop-color="#4b00ff"/></linearGradient>
<linearGradient id="c226" gradientUnits="userSpaceOnUse" x1="1033" x2="1681" y1="0" y2="0"><stop offset="0.3735" stop-color="#1f00ff"/><stop offset="0.4660" stop-color="#4900ff"/></linearGradient>
<linearGradient id="c227" gradientUnits="userSpaceOnUse" x1="1033" x2="1681" y1="0" y2="0"><stop offset="0.3781" stop-color="#2000ff"/><stop offset="0.4630" stop-color="#4700ff"/></linearGradient>
<linearGradient id="c228" gradientUnits="userSpaceOnUse" x1="1033" x2="1681" y1="0" y2="0"><stop offset="0.3827" stop-color="#2200ff"/><stop offset="0.4614" stop-color="#4600ff"/></linearGradient>
<linearGradient id="c229" gradientUnits="userSpaceOnUse" x1="1033" x2="1681" y1="0" y2="0"><stop offset="0.3858" stop-color="#2300ff"/><stop offset="0.4583" stop-color="#4400ff"/></linearGradient>
<linearGradient id="c230" gradientUnits="userSpaceOnUse" x1="1033" x2="1681" y1="0" y2="0"><stop offset="0.3904" stop-color="#2500ff"/><stop offset="0.4552" stop-color="#4200ff"/></linearGradient>
<linearGradient id="c231" gradientUnits="userSpaceOnUse" x1="1033" x2="1681" y1="0" y2="0"><stop offset="0.3935" stop-color="#2600ff"/><stop offset="0.4522" stop-color="#4000ff"/></linearGradient>
<linearGradient id="c232" gradientUnits="userSpaceOnUse" x1="1033" x2="1681" y1="0" y2="0"><stop offset="0.3981" stop-color="#2800ff"/><stop offset="0.4491" stop-color="#3f00ff"/></linearGradient>
<linearGradient id="c233" gradientUnits="userSpaceOnUse" x1="1033" x2="1681" y1="0" y2="0"><stop offset="0.4012" stop-color="#2900ff"/><stop offset="0.4460" stop-color="#3d00ff"/></linearGradient>
<linearGradient id="c234" gradientUnits="userSpaceOnUse" x1="1033" x2="1681" y1="0" y2="0"><stop offset="0.4043" stop-color="#2a00ff"/><stop offset="0.4429" stop-color="#3b00ff"/></linearGradient>
<linearGradient id="c235" gradientUnits="userSpaceOnUse" x1="1033" x2="1681" y1="0" y2="0"><stop offset="0.4074" stop-color="#2b00ff"/><stop offset="0.4398" stop-color="#3900ff"/></linearGradient>
<linearGradient id="c236" gradientUnits="userSpaceOnUse" x1="1033" x2="1681" y1="0" y2="0"><stop offset="0.4105" stop-color="#2c00ff"/><stop offset="0.4367" stop-color="#3700ff"/></linearGradient>
<linearGradient id="c237" gradientUnits="userSpaceOnUse" x1="1033" x2="1681" y1="0" y2="0"><stop offset="0.4136" stop-color="#2d00ff"/><stop offset="0.4336" stop-color="#3600ff"/></linearGradient>
<linearGradient id="c238" gradientUnits="userSpaceOnUse" x1="1033" x2="1681" y1="0" y2="0"><stop offset="0.4182" stop-color="#2e00ff"/><stop offset="0.4306" stop-color="#3400ff"/></linearGradient>
<linearGradient id="ins" x1="0" y1="0" x2="1" y2="1"><stop offset="0" stop-color="#ff8a2c"/><stop offset="1" stop-color="#ff3e22"/></linearGradient>
<clipPath id="ic"><rect x="1474" y="399.5" width="201" height="132"/></clipPath>
<linearGradient id="th" x1="0" y1="0" x2="0" y2="1"><stop offset="0" stop-color="#2e2e2e"/><stop offset=".45" stop-color="#1c1c1c"/><stop offset=".5" stop-color="#0c0c0c"/><stop offset="1" stop-color="#101010"/></linearGradient>
<linearGradient id="tsh" x1="0" y1="0" x2="1" y2="0"><stop offset="0" stop-color="#000" stop-opacity="0"/><stop offset=".3" stop-color="#000" stop-opacity=".3"/><stop offset="1" stop-color="#000" stop-opacity=".5"/></linearGradient>
<linearGradient id="bt" x1="0" y1="0" x2="0" y2="1"><stop offset="0" stop-color="#a9a9a9"/><stop offset=".12" stop-color="#909090"/><stop offset=".45" stop-color="#6c6c6c"/><stop offset=".7" stop-color="#7c7c7c"/><stop offset="1" stop-color="#8e8e8e"/></linearGradient>
<linearGradient id="bsh" x1="0" y1="0" x2="0" y2="1"><stop offset="0" stop-color="#000" stop-opacity=".18"/><stop offset=".3" stop-color="#000" stop-opacity="0"/></linearGradient>
<linearGradient id="g1" x1="0" y1="0" x2="0" y2="1"><stop offset="0" stop-color="#a4a4a4"/><stop offset="1" stop-color="#6e6e6e"/></linearGradient>
<linearGradient id="g2" x1="0" y1="0" x2="0" y2="1"><stop offset="0" stop-color="#b4b4b4"/><stop offset="1" stop-color="#7c7c7c"/></linearGradient>
<linearGradient id="g3" x1="0" y1="0" x2="0" y2="1"><stop offset="0" stop-color="#444"/><stop offset="1" stop-color="#383838"/></linearGradient>
<linearGradient id="gc" x1="0" y1="0" x2="0" y2="1"><stop offset="0" stop-color="#7c7c7c"/><stop offset="1" stop-color="#b6b6b6"/></linearGradient>
</defs>
<rect width="1690" height="952" fill="#333333"/>
<text x="8" y="81" font-size="40" fill="#f4f4f4" textLength="243" lengthAdjust="spacingAndGlyphs">ColorChecker</text>
<text x="37.5" y="119.5" font-size="15.6" fill="#f0f0f0" textLength="336" lengthAdjust="spacingAndGlyphs">Display analysis is performed with the X-Rite/</text>
<text x="37.5" y="141.5" font-size="15.6" fill="#f0f0f0" textLength="277" lengthAdjust="spacingAndGlyphs">Pantone ColorChecker® target colors.</text>
<text x="111.5" y="189" font-size="19.5" fill="#f4f4f4" textLength="108.5" lengthAdjust="spacingAndGlyphs">dE Formula:</text>
<rect x="229" y="170" width="149.5" height="25" fill="url(#dd)" stroke="#2a2a2a" stroke-width="1"/>
<text x="233.5" y="190.8" font-size="16.3" fill="#f0f0f0" textLength="35.5" lengthAdjust="spacingAndGlyphs">2000</text>
<path d="M363,180 L374,180 L368.5,186 Z" fill="#000"/>
<text x="190" y="222.5" font-size="15" fill="#d4d4d4" text-anchor="middle" textLength="80" lengthAdjust="spacingAndGlyphs">DeltaE 2000</text>
<rect x="19.5" y="228.5" width="340" height="337" fill="#262626"/>
<line x1="64.76" y1="228.5" x2="64.76" y2="565.5" stroke="#888888" stroke-width="1.5"/>
<line x1="110.02" y1="228.5" x2="110.02" y2="565.5" stroke="#888888" stroke-width="1.5"/>
<line x1="155.28" y1="228.5" x2="155.28" y2="565.5" stroke="#888888" stroke-width="1.5"/>
<line x1="200.54" y1="228.5" x2="200.54" y2="565.5" stroke="#888888" stroke-width="1.5"/>
<line x1="245.8" y1="228.5" x2="245.8" y2="565.5" stroke="#888888" stroke-width="1.5"/>
<line x1="291.06" y1="228.5" x2="291.06" y2="565.5" stroke="#888888" stroke-width="1.5"/>
<line x1="336.32" y1="228.5" x2="336.32" y2="565.5" stroke="#888888" stroke-width="1.5"/>
<rect x="20" y="558.665" width="14.9358" height="5.6" fill="#000"/>
<rect x="21" y="559.765" width="12.4358" height="3.4" fill="#ffffff"/>
<rect x="21" y="559.765" width="12.4358" height="3.4" fill="url(#bh)"/>
<rect x="20" y="551.495" width="16.9725" height="5.6" fill="#000"/>
<rect x="21" y="552.595" width="14.4725" height="3.4" fill="#e6e6e6"/>
<rect x="21" y="552.595" width="14.4725" height="3.4" fill="url(#bh)"/>
<rect x="20" y="544.324" width="11.315" height="5.6" fill="#000"/>
<rect x="21" y="545.424" width="8.815" height="3.4" fill="#d2d2d2"/>
<rect x="21" y="545.424" width="8.815" height="3.4" fill="url(#bh)"/>
<rect x="20" y="537.154" width="17.4251" height="5.6" fill="#000"/>
<rect x="21" y="538.254" width="14.9251" height="3.4" fill="#bbbbbb"/>
<rect x="21" y="538.254" width="14.9251" height="3.4" fill="url(#bh)"/>
<rect x="20" y="529.984" width="20.367" height="5.6" fill="#000"/>
<rect x="21" y="531.084" width="17.867" height="3.4" fill="#9f9f9f"/>
<rect x="21" y="531.084" width="17.867" height="3.4" fill="url(#bh)"/>
<rect x="20" y="522.814" width="14.4832" height="5.6" fill="#000"/>
<rect x="21" y="523.914" width="11.9832" height="3.4" fill="#000000"/>
<rect x="21" y="523.914" width="11.9832" height="3.4" fill="url(#bh)"/>
<rect x="20" y="515.644" width="23.0826" height="5.6" fill="#000"/>
<rect x="21" y="516.744" width="20.5826" height="3.4" fill="#75523f"/>
<rect x="21" y="516.744" width="20.5826" height="3.4" fill="url(#bh)"/>
<rect x="20" y="508.473" width="26.4771" height="5.6" fill="#000"/>
<rect x="21" y="509.573" width="23.9771" height="3.4" fill="#c69782"/>
<rect x="21" y="509.573" width="23.9771" height="3.4" fill="url(#bh)"/>
<rect x="20" y="501.303" width="31.682" height="5.6" fill="#000"/>
<rect x="21" y="502.403" width="29.182" height="3.4" fill="#5d7ba3"/>
<rect x="21" y="502.403" width="29.182" height="3.4" fill="url(#bh)"/>
<rect x="20" y="494.133" width="18.104" height="5.6" fill="#000"/>
<rect x="21" y="495.233" width="15.604" height="3.4" fill="#596e41"/>
<rect x="21" y="495.233" width="15.604" height="3.4" fill="url(#bh)"/>
<rect x="20" y="486.963" width="17.4251" height="5.6" fill="#000"/>
<rect x="21" y="488.063" width="14.9251" height="3.4" fill="#8583b9"/>
<rect x="21" y="488.063" width="14.9251" height="3.4" fill="url(#bh)"/>
<rect x="20" y="479.793" width="20.8196" height="5.6" fill="#000"/>
<rect x="21" y="480.893" width="18.3196" height="3.4" fill="#63bfab"/>
<rect x="21" y="480.893" width="18.3196" height="3.4" fill="url(#bh)"/>
<rect x="20" y="472.622" width="37.7921" height="5.6" fill="#000"/>
<rect x="21" y="473.722" width="35.2921" height="3.4" fill="#df7e28"/>
<rect x="21" y="473.722" width="35.2921" height="3.4" fill="url(#bh)"/>
<rect x="20" y="465.452" width="44.1285" height="5.6" fill="#000"/>
<rect x="21" y="466.552" width="41.6285" height="3.4" fill="#4a5caf"/>
<rect x="21" y="466.552" width="41.6285" height="3.4" fill="url(#bh)"/>
<rect x="20" y="458.282" width="33.7187" height="5.6" fill="#000"/>
<rect x="21" y="459.382" width="31.2187" height="3.4" fill="#cb5a66"/>
<rect x="21" y="459.382" width="31.2187" height="3.4" fill="url(#bh)"/>
<rect x="20" y="451.112" width="4.0734" height="5.6" fill="#000"/>
<rect x="21" y="452.212" width="1.5734" height="3.4" fill="#5d3c70"/>
<rect x="21" y="452.212" width="1.5734" height="3.4" fill="url(#bh)"/>
<rect x="20" y="443.941" width="27.3823" height="5.6" fill="#000"/>
<rect x="21" y="445.041" width="24.8823" height="3.4" fill="#a3c13f"/>
<rect x="21" y="445.041" width="24.8823" height="3.4" fill="url(#bh)"/>
<rect x="20" y="436.771" width="33.4924" height="5.6" fill="#000"/>
<rect x="21" y="437.871" width="30.9924" height="3.4" fill="#e9a42d"/>
<rect x="21" y="437.871" width="30.9924" height="3.4" fill="url(#bh)"/>
<rect x="20" y="429.601" width="44.8074" height="5.6" fill="#000"/>
<rect x="21" y="430.701" width="42.3074" height="3.4" fill="#363f9b"/>
<rect x="21" y="430.701" width="42.3074" height="3.4" fill="url(#bh)"/>
<rect x="20" y="422.431" width="20.5933" height="5.6" fill="#000"/>
<rect x="21" y="423.531" width="18.0933" height="3.4" fill="#449748"/>
<rect x="21" y="423.531" width="18.0933" height="3.4" fill="url(#bh)"/>
<rect x="20" y="415.261" width="39.6025" height="5.6" fill="#000"/>
<rect x="21" y="416.361" width="37.1025" height="3.4" fill="#b7343b"/>
<rect x="21" y="416.361" width="37.1025" height="3.4" fill="url(#bh)"/>
<rect x="20" y="408.09" width="41.1866" height="5.6" fill="#000"/>
<rect x="21" y="409.19" width="38.6866" height="3.4" fill="#eec922"/>
<rect x="21" y="409.19" width="38.6866" height="3.4" fill="url(#bh)"/>
<rect x="20" y="400.92" width="22.4037" height="5.6" fill="#000"/>
<rect x="21" y="402.02" width="19.9037" height="3.4" fill="#c3579b"/>
<rect x="21" y="402.02" width="19.9037" height="3.4" fill="url(#bh)"/>
<rect x="20" y="393.75" width="28.9664" height="5.6" fill="#000"/>
<rect x="21" y="394.85" width="26.4664" height="3.4" fill="#0087a7"/>
<rect x="21" y="394.85" width="26.4664" height="3.4" fill="url(#bh)"/>
<rect x="20" y="386.58" width="59.5169" height="5.6" fill="#000"/>
<rect x="21" y="387.68" width="57.0169" height="3.4" fill="#ff0000"/>
<rect x="21" y="387.68" width="57.0169" height="3.4" fill="url(#bh)"/>
<rect x="20" y="379.41" width="21.2722" height="5.6" fill="#000"/>
<rect x="21" y="380.51" width="18.7722" height="3.4" fill="#00ff00"/>
<rect x="21" y="380.51" width="18.7722" height="3.4" fill="url(#bh)"/>
<rect x="20" y="372.239" width="64.2692" height="5.6" fill="#000"/>
<rect x="21" y="373.339" width="61.7692" height="3.4" fill="#0000ff"/>
<rect x="21" y="373.339" width="61.7692" height="3.4" fill="url(#bh)"/>
<rect x="20" y="365.069" width="32.8135" height="5.6" fill="#000"/>
<rect x="21" y="366.169" width="30.3135" height="3.4" fill="#00ffff"/>
<rect x="21" y="366.169" width="30.3135" height="3.4" fill="url(#bh)"/>
<rect x="20" y="357.899" width="35.7554" height="5.6" fill="#000"/>
<rect x="21" y="358.999" width="33.2554" height="3.4" fill="#ff00ff"/>
<rect x="21" y="358.999" width="33.2554" height="3.4" fill="url(#bh)"/>
<rect x="20" y="350.729" width="38.471" height="5.6" fill="#000"/>
<rect x="21" y="351.829" width="35.971" height="3.4" fill="#ffff00"/>
<rect x="21" y="351.829" width="35.971" height="3.4" fill="url(#bh)"/>
<rect x="20" y="343.559" width="36.6606" height="5.6" fill="#000"/>
<rect x="21" y="344.659" width="34.1606" height="3.4" fill="#785038"/>
<rect x="21" y="344.659" width="34.1606" height="3.4" fill="url(#bh)"/>
<rect x="20" y="336.388" width="30.5505" height="5.6" fill="#000"/>
<rect x="21" y="337.488" width="28.0505" height="3.4" fill="#d8a080"/>
<rect x="21" y="337.488" width="28.0505" height="3.4" fill="url(#bh)"/>
<rect x="20" y="329.218" width="23.5352" height="5.6" fill="#000"/>
<rect x="21" y="330.318" width="21.0352" height="3.4" fill="#f8d0b0"/>
<rect x="21" y="330.318" width="21.0352" height="3.4" fill="url(#bh)"/>
<rect x="20" y="322.048" width="19.6881" height="5.6" fill="#000"/>
<rect x="21" y="323.148" width="17.1881" height="3.4" fill="#f8d0b8"/>
<rect x="21" y="323.148" width="17.1881" height="3.4" fill="url(#bh)"/>
<rect x="20" y="314.878" width="22.4037" height="5.6" fill="#000"/>
<rect x="21" y="315.978" width="19.9037" height="3.4" fill="#f0b898"/>
<rect x="21" y="315.978" width="19.9037" height="3.4" fill="url(#bh)"/>
<rect x="20" y="307.707" width="29.6453" height="5.6" fill="#000"/>
<rect x="21" y="308.807" width="27.1453" height="3.4" fill="#e0a880"/>
<rect x="21" y="308.807" width="27.1453" height="3.4" fill="url(#bh)"/>
<rect x="20" y="300.537" width="36.6606" height="5.6" fill="#000"/>
<rect x="21" y="301.637" width="34.1606" height="3.4" fill="#a87850"/>
<rect x="21" y="301.637" width="34.1606" height="3.4" fill="url(#bh)"/>
<rect x="20" y="293.367" width="31.4557" height="5.6" fill="#000"/>
<rect x="21" y="294.467" width="28.9557" height="3.4" fill="#e0b090"/>
<rect x="21" y="294.467" width="28.9557" height="3.4" fill="url(#bh)"/>
<rect x="20" y="286.197" width="40.5077" height="5.6" fill="#000"/>
<rect x="21" y="287.297" width="38.0077" height="3.4" fill="#b87840"/>
<rect x="21" y="287.297" width="38.0077" height="3.4" fill="url(#bh)"/>
<rect x="20" y="279.027" width="26.4771" height="5.6" fill="#000"/>
<rect x="21" y="280.127" width="23.9771" height="3.4" fill="#e09870"/>
<rect x="21" y="280.127" width="23.9771" height="3.4" fill="url(#bh)"/>
<rect x="20" y="271.856" width="30.5505" height="5.6" fill="#000"/>
<rect x="21" y="272.956" width="28.0505" height="3.4" fill="#e0a080"/>
<rect x="21" y="272.956" width="28.0505" height="3.4" fill="url(#bh)"/>
<rect x="20" y="264.686" width="36.6606" height="5.6" fill="#000"/>
<rect x="21" y="265.786" width="34.1606" height="3.4" fill="#f0a080"/>
<rect x="21" y="265.786" width="34.1606" height="3.4" fill="url(#bh)"/>
<rect x="20" y="257.516" width="30.5505" height="5.6" fill="#000"/>
<rect x="21" y="258.616" width="28.0505" height="3.4" fill="#e0b898"/>
<rect x="21" y="258.616" width="28.0505" height="3.4" fill="url(#bh)"/>
<rect x="20" y="250.346" width="30.5505" height="5.6" fill="#000"/>
<rect x="21" y="251.446" width="28.0505" height="3.4" fill="#e0b090"/>
<rect x="21" y="251.446" width="28.0505" height="3.4" fill="url(#bh)"/>
<rect x="20" y="243.176" width="30.5505" height="5.6" fill="#000"/>
<rect x="21" y="244.276" width="28.0505" height="3.4" fill="#e0b090"/>
<rect x="21" y="244.276" width="28.0505" height="3.4" fill="url(#bh)"/>
<rect x="20" y="236.005" width="37.5658" height="5.6" fill="#000"/>
<rect x="21" y="237.105" width="35.0658" height="3.4" fill="#a87850"/>
<rect x="21" y="237.105" width="35.0658" height="3.4" fill="url(#bh)"/>
<rect x="20" y="228.835" width="30.5505" height="5.6" fill="#000"/>
<rect x="21" y="229.935" width="28.0505" height="3.4" fill="#e0a080"/>
<rect x="21" y="229.935" width="28.0505" height="3.4" fill="url(#bh)"/>
<rect x="19.5" y="228.5" width="340.0" height="337.0" fill="none" stroke="#909090" stroke-width="1.5"/>
<line x1="19.5" y1="565.5" x2="19.5" y2="571.5" stroke="#e0e0e0" stroke-width="1.5"/>
<text x="19.5" y="586" font-size="15" fill="#d4d4d4" text-anchor="middle">0</text>
<line x1="64.76" y1="565.5" x2="64.76" y2="571.5" stroke="#e0e0e0" stroke-width="1.5"/>
<text x="64.76" y="586" font-size="15" fill="#d4d4d4" text-anchor="middle">2</text>
<line x1="110.02" y1="565.5" x2="110.02" y2="571.5" stroke="#e0e0e0" stroke-width="1.5"/>
<text x="110.02" y="586" font-size="15" fill="#d4d4d4" text-anchor="middle">4</text>
<line x1="155.28" y1="565.5" x2="155.28" y2="571.5" stroke="#e0e0e0" stroke-width="1.5"/>
<text x="155.28" y="586" font-size="15" fill="#d4d4d4" text-anchor="middle">6</text>
<line x1="200.54" y1="565.5" x2="200.54" y2="571.5" stroke="#e0e0e0" stroke-width="1.5"/>
<text x="200.54" y="586" font-size="15" fill="#d4d4d4" text-anchor="middle">8</text>
<line x1="245.8" y1="565.5" x2="245.8" y2="571.5" stroke="#e0e0e0" stroke-width="1.5"/>
<text x="245.8" y="586" font-size="15" fill="#d4d4d4" text-anchor="middle">10</text>
<line x1="291.06" y1="565.5" x2="291.06" y2="571.5" stroke="#e0e0e0" stroke-width="1.5"/>
<text x="291.06" y="586" font-size="15" fill="#d4d4d4" text-anchor="middle">12</text>
<line x1="336.32" y1="565.5" x2="336.32" y2="571.5" stroke="#e0e0e0" stroke-width="1.5"/>
<text x="336.32" y="586" font-size="15" fill="#d4d4d4" text-anchor="middle">14</text>
<text x="50.5" y="642.5" font-size="29" fill="#f4f4f4" textLength="236" lengthAdjust="spacingAndGlyphs" stroke="#f4f4f4" stroke-width=".35">Avg dE2000: 1,33</text>
<text x="47" y="684.5" font-size="29" fill="#f4f4f4" textLength="245" lengthAdjust="spacingAndGlyphs" stroke="#f4f4f4" stroke-width=".35">Max dE2000: 2,84</text>
<text x="14" y="732.5" font-size="29" fill="#f4f4f4" textLength="222" lengthAdjust="spacingAndGlyphs" stroke="#f4f4f4" stroke-width=".35">Current Reading</text>
<text x="14" y="768.5" font-size="25.5" fill="#f4f4f4" textLength="103.5" lengthAdjust="spacingAndGlyphs" stroke="#f4f4f4" stroke-width=".35">x: 0,4553</text>
<text x="173.5" y="768.5" font-size="25.5" fill="#f4f4f4" textLength="103.5" lengthAdjust="spacingAndGlyphs" stroke="#f4f4f4" stroke-width=".35">y: 0,3872</text>
<text x="14" y="809.5" font-size="25.5" fill="#f4f4f4" textLength="98" lengthAdjust="spacingAndGlyphs" stroke="#f4f4f4" stroke-width=".35">fL: 32,59</text>
<text x="14" y="844" font-size="25.5" fill="#f4f4f4" textLength="162" lengthAdjust="spacingAndGlyphs" stroke="#f4f4f4" stroke-width=".35">cd/m²: 111,68</text>
<rect x="405" y="76.4" width="155" height="342" fill="#262626"/>
<line x1="405" y1="119.15" x2="560" y2="119.15" stroke="#888888" stroke-width="1.2"/>
<line x1="405" y1="161.9" x2="560" y2="161.9" stroke="#888888" stroke-width="1.2"/>
<line x1="405" y1="204.65" x2="560" y2="204.65" stroke="#888888" stroke-width="1.2"/>
<line x1="405" y1="247.4" x2="560" y2="247.4" stroke="#888888" stroke-width="1.2"/>
<line x1="405" y1="290.15" x2="560" y2="290.15" stroke="#888888" stroke-width="1.2"/>
<line x1="405" y1="332.9" x2="560" y2="332.9" stroke="#888888" stroke-width="1.2"/>
<line x1="405" y1="375.65" x2="560" y2="375.65" stroke="#888888" stroke-width="1.2"/>
<rect x="405" y="76.4" width="155" height="342.0" fill="none" stroke="#909090" stroke-width="1.5"/>
<line x1="399" y1="76.4" x2="405" y2="76.4" stroke="#e8e8e8" stroke-width="1.5"/>
<text x="399" y="81.9" font-size="15.5" fill="#d4d4d4" text-anchor="end">4</text>
<line x1="399" y1="119.15" x2="405" y2="119.15" stroke="#e8e8e8" stroke-width="1.5"/>
<text x="399" y="124.65" font-size="15.5" fill="#d4d4d4" text-anchor="end">3</text>
<line x1="399" y1="161.9" x2="405" y2="161.9" stroke="#e8e8e8" stroke-width="1.5"/>
<text x="399" y="167.4" font-size="15.5" fill="#d4d4d4" text-anchor="end">2</text>
<line x1="399" y1="204.65" x2="405" y2="204.65" stroke="#e8e8e8" stroke-width="1.5"/>
<text x="399" y="210.15" font-size="15.5" fill="#d4d4d4" text-anchor="end">1</text>
<line x1="399" y1="247.4" x2="405" y2="247.4" stroke="#e8e8e8" stroke-width="1.5"/>
<text x="399" y="252.9" font-size="15.5" fill="#d4d4d4" text-anchor="end">0</text>
<line x1="399" y1="290.15" x2="405" y2="290.15" stroke="#e8e8e8" stroke-width="1.5"/>
<text x="399" y="295.65" font-size="15.5" fill="#d4d4d4" text-anchor="end">-1</text>
<line x1="399" y1="332.9" x2="405" y2="332.9" stroke="#e8e8e8" stroke-width="1.5"/>
<text x="399" y="338.4" font-size="15.5" fill="#d4d4d4" text-anchor="end">-2</text>
<line x1="399" y1="375.65" x2="405" y2="375.65" stroke="#e8e8e8" stroke-width="1.5"/>
<text x="399" y="381.15" font-size="15.5" fill="#d4d4d4" text-anchor="end">-3</text>
<line x1="399" y1="418.4" x2="405" y2="418.4" stroke="#e8e8e8" stroke-width="1.5"/>
<text x="399" y="423.9" font-size="15.5" fill="#d4d4d4" text-anchor="end">-4</text>
<text x="473.4" y="70.5" font-size="15.5" fill="#d4d4d4" text-anchor="middle" textLength="42.5" lengthAdjust="spacingAndGlyphs">DeltaL</text>
<rect x="420" y="211.276" width="123" height="36.1238" fill="url(#bg3)" stroke="#000" stroke-width="1"/>
<rect x="605.5" y="76.4" width="155" height="342" fill="#262626"/>
<line x1="605.5" y1="119.15" x2="760.5" y2="119.15" stroke="#888888" stroke-width="1.2"/>
<line x1="605.5" y1="161.9" x2="760.5" y2="161.9" stroke="#888888" stroke-width="1.2"/>
<line x1="605.5" y1="204.65" x2="760.5" y2="204.65" stroke="#888888" stroke-width="1.2"/>
<line x1="605.5" y1="247.4" x2="760.5" y2="247.4" stroke="#888888" stroke-width="1.2"/>
<line x1="605.5" y1="290.15" x2="760.5" y2="290.15" stroke="#888888" stroke-width="1.2"/>
<line x1="605.5" y1="332.9" x2="760.5" y2="332.9" stroke="#888888" stroke-width="1.2"/>
<line x1="605.5" y1="375.65" x2="760.5" y2="375.65" stroke="#888888" stroke-width="1.2"/>
<rect x="605.5" y="76.4" width="155" height="342.0" fill="none" stroke="#909090" stroke-width="1.5"/>
<line x1="599.5" y1="76.4" x2="605.5" y2="76.4" stroke="#e8e8e8" stroke-width="1.5"/>
<text x="599.5" y="81.9" font-size="15.5" fill="#d4d4d4" text-anchor="end">4</text>
<line x1="599.5" y1="119.15" x2="605.5" y2="119.15" stroke="#e8e8e8" stroke-width="1.5"/>
<text x="599.5" y="124.65" font-size="15.5" fill="#d4d4d4" text-anchor="end">3</text>
<line x1="599.5" y1="161.9" x2="605.5" y2="161.9" stroke="#e8e8e8" stroke-width="1.5"/>
<text x="599.5" y="167.4" font-size="15.5" fill="#d4d4d4" text-anchor="end">2</text>
<line x1="599.5" y1="204.65" x2="605.5" y2="204.65" stroke="#e8e8e8" stroke-width="1.5"/>
<text x="599.5" y="210.15" font-size="15.5" fill="#d4d4d4" text-anchor="end">1</text>
<line x1="599.5" y1="247.4" x2="605.5" y2="247.4" stroke="#e8e8e8" stroke-width="1.5"/>
<text x="599.5" y="252.9" font-size="15.5" fill="#d4d4d4" text-anchor="end">0</text>
<line x1="599.5" y1="290.15" x2="605.5" y2="290.15" stroke="#e8e8e8" stroke-width="1.5"/>
<text x="599.5" y="295.65" font-size="15.5" fill="#d4d4d4" text-anchor="end">-1</text>
<line x1="599.5" y1="332.9" x2="605.5" y2="332.9" stroke="#e8e8e8" stroke-width="1.5"/>
<text x="599.5" y="338.4" font-size="15.5" fill="#d4d4d4" text-anchor="end">-2</text>
<line x1="599.5" y1="375.65" x2="605.5" y2="375.65" stroke="#e8e8e8" stroke-width="1.5"/>
<text x="599.5" y="381.15" font-size="15.5" fill="#d4d4d4" text-anchor="end">-3</text>
<line x1="599.5" y1="418.4" x2="605.5" y2="418.4" stroke="#e8e8e8" stroke-width="1.5"/>
<text x="599.5" y="423.9" font-size="15.5" fill="#d4d4d4" text-anchor="end">-4</text>
<text x="673.5" y="70.5" font-size="15.5" fill="#d4d4d4" text-anchor="middle" textLength="42.5" lengthAdjust="spacingAndGlyphs">DeltaC</text>
<rect x="620.5" y="105.898" width="123" height="141.502" fill="url(#bg3)" stroke="#000" stroke-width="1"/>
<rect x="805.5" y="76.4" width="155" height="342" fill="#262626"/>
<line x1="805.5" y1="119.15" x2="960.5" y2="119.15" stroke="#888888" stroke-width="1.2"/>
<line x1="805.5" y1="161.9" x2="960.5" y2="161.9" stroke="#888888" stroke-width="1.2"/>
<line x1="805.5" y1="204.65" x2="960.5" y2="204.65" stroke="#888888" stroke-width="1.2"/>
<line x1="805.5" y1="247.4" x2="960.5" y2="247.4" stroke="#888888" stroke-width="1.2"/>
<line x1="805.5" y1="290.15" x2="960.5" y2="290.15" stroke="#888888" stroke-width="1.2"/>
<line x1="805.5" y1="332.9" x2="960.5" y2="332.9" stroke="#888888" stroke-width="1.2"/>
<line x1="805.5" y1="375.65" x2="960.5" y2="375.65" stroke="#888888" stroke-width="1.2"/>
<rect x="805.5" y="76.4" width="155" height="342.0" fill="none" stroke="#909090" stroke-width="1.5"/>
<line x1="799.5" y1="76.4" x2="805.5" y2="76.4" stroke="#e8e8e8" stroke-width="1.5"/>
<text x="799.5" y="81.9" font-size="15.5" fill="#d4d4d4" text-anchor="end">4</text>
<line x1="799.5" y1="119.15" x2="805.5" y2="119.15" stroke="#e8e8e8" stroke-width="1.5"/>
<text x="799.5" y="124.65" font-size="15.5" fill="#d4d4d4" text-anchor="end">3</text>
<line x1="799.5" y1="161.9" x2="805.5" y2="161.9" stroke="#e8e8e8" stroke-width="1.5"/>
<text x="799.5" y="167.4" font-size="15.5" fill="#d4d4d4" text-anchor="end">2</text>
<line x1="799.5" y1="204.65" x2="805.5" y2="204.65" stroke="#e8e8e8" stroke-width="1.5"/>
<text x="799.5" y="210.15" font-size="15.5" fill="#d4d4d4" text-anchor="end">1</text>
<line x1="799.5" y1="247.4" x2="805.5" y2="247.4" stroke="#e8e8e8" stroke-width="1.5"/>
<text x="799.5" y="252.9" font-size="15.5" fill="#d4d4d4" text-anchor="end">0</text>
<line x1="799.5" y1="290.15" x2="805.5" y2="290.15" stroke="#e8e8e8" stroke-width="1.5"/>
<text x="799.5" y="295.65" font-size="15.5" fill="#d4d4d4" text-anchor="end">-1</text>
<line x1="799.5" y1="332.9" x2="805.5" y2="332.9" stroke="#e8e8e8" stroke-width="1.5"/>
<text x="799.5" y="338.4" font-size="15.5" fill="#d4d4d4" text-anchor="end">-2</text>
<line x1="799.5" y1="375.65" x2="805.5" y2="375.65" stroke="#e8e8e8" stroke-width="1.5"/>
<text x="799.5" y="381.15" font-size="15.5" fill="#d4d4d4" text-anchor="end">-3</text>
<line x1="799.5" y1="418.4" x2="805.5" y2="418.4" stroke="#e8e8e8" stroke-width="1.5"/>
<text x="799.5" y="423.9" font-size="15.5" fill="#d4d4d4" text-anchor="end">-4</text>
<text x="873.5" y="70.5" font-size="15.5" fill="#d4d4d4" text-anchor="middle" textLength="45.5" lengthAdjust="spacingAndGlyphs">DeltaH</text>
<rect x="820.5" y="221.536" width="123" height="25.8637" fill="url(#bg3)" stroke="#000" stroke-width="1"/>
<rect x="380" y="431" width="600" height="163.5" fill="#000"/>
<clipPath id="swc"><rect x="380" y="431" width="600" height="163"/></clipPath><g clip-path="url(#swc)">
<rect x="397" y="438" width="59" height="119" fill="#ffffff"/>
<rect x="397" y="498" width="59" height="59" fill="#ffffff"/>
<rect x="397.5" y="438.5" width="58" height="118" fill="none" stroke="#fff" stroke-width="1"/>
<rect x="398.5" y="439.5" width="56" height="116" fill="none" stroke="#000" stroke-opacity=".12" stroke-width="1"/>
<text x="426.5" y="571.5" font-size="13.3" fill="#fff" text-anchor="middle">White</text>
<rect x="466" y="438" width="59" height="119" fill="#e6e6e6"/>
<rect x="466" y="498" width="59" height="59" fill="#e5e5e5"/>
<rect x="466.5" y="438.5" width="58" height="118" fill="none" stroke="#fff" stroke-width="1"/>
<rect x="467.5" y="439.5" width="56" height="116" fill="none" stroke="#000" stroke-opacity=".12" stroke-width="1"/>
<text x="495.5" y="571.5" font-size="13.3" fill="#fff" text-anchor="middle">Gray 80</text>
<rect x="535" y="438" width="59" height="119" fill="#d2d2d2"/>
<rect x="535" y="498" width="59" height="59" fill="#d0d0d0"/>
<rect x="535.5" y="438.5" width="58" height="118" fill="none" stroke="#fff" stroke-width="1"/>
<rect x="536.5" y="439.5" width="56" height="116" fill="none" stroke="#000" stroke-opacity=".12" stroke-width="1"/>
<text x="564.5" y="571.5" font-size="13.3" fill="#fff" text-anchor="middle">Gray 65</text>
<rect x="604" y="438" width="59" height="119" fill="#bbbbbb"/>
<rect x="604" y="498" width="59" height="59" fill="#b9b9b9"/>
<rect x="604.5" y="438.5" width="58" height="118" fill="none" stroke="#fff" stroke-width="1"/>
<rect x="605.5" y="439.5" width="56" height="116" fill="none" stroke="#000" stroke-opacity=".12" stroke-width="1"/>
<text x="633.5" y="571.5" font-size="13.3" fill="#fff" text-anchor="middle">Gray 50</text>
<rect x="674" y="438" width="59" height="119" fill="#a0a0a0"/>
<rect x="674" y="498" width="59" height="59" fill="#9d9d9d"/>
<rect x="674.5" y="438.5" width="58" height="118" fill="none" stroke="#fff" stroke-width="1"/>
<rect x="675.5" y="439.5" width="56" height="116" fill="none" stroke="#000" stroke-opacity=".12" stroke-width="1"/>
<text x="703.5" y="571.5" font-size="13.3" fill="#fff" text-anchor="middle">Gray 35</text>
<rect x="743" y="438" width="59" height="119" fill="#05060a"/>
<rect x="743" y="498" width="59" height="59" fill="#000000"/>
<rect x="743.5" y="438.5" width="58" height="118" fill="none" stroke="#fff" stroke-width="1"/>
<rect x="744.5" y="439.5" width="56" height="116" fill="none" stroke="#000" stroke-opacity=".12" stroke-width="1"/>
<text x="772.5" y="571.5" font-size="13.3" fill="#fff" text-anchor="middle">Black</text>
<rect x="812" y="438" width="59" height="119" fill="#75513f"/>
<rect x="812" y="498" width="59" height="59" fill="#755444"/>
<rect x="812.5" y="438.5" width="58" height="118" fill="none" stroke="#fff" stroke-width="1"/>
<rect x="813.5" y="439.5" width="56" height="116" fill="none" stroke="#000" stroke-opacity=".12" stroke-width="1"/>
<text x="841.5" y="571.5" font-size="13.3" fill="#fff" text-anchor="middle">Dark Skin</text>
<rect x="881" y="438" width="59" height="119" fill="#c89783"/>
<rect x="881" y="498" width="59" height="59" fill="#c59581"/>
<rect x="881.5" y="438.5" width="58" height="118" fill="none" stroke="#fff" stroke-width="1"/>
<rect x="882.5" y="439.5" width="56" height="116" fill="none" stroke="#000" stroke-opacity=".12" stroke-width="1"/>
<text x="910.5" y="571.5" font-size="13.3" fill="#fff" text-anchor="middle">Light Skin</text>
<rect x="950" y="438" width="59" height="119" fill="#5d7ba3"/>
<rect x="950" y="498" width="59" height="59" fill="#5e7da0"/>
<rect x="950.5" y="438.5" width="58" height="118" fill="none" stroke="#fff" stroke-width="1"/>
<rect x="951.5" y="439.5" width="56" height="116" fill="none" stroke="#000" stroke-opacity=".12" stroke-width="1"/>
<text x="979.5" y="571.5" font-size="13.3" fill="#fff" text-anchor="middle">Blue Sky</text>
</g>
<text x="0" y="0" font-size="13" fill="#fff" text-anchor="middle" transform="translate(392.5,464) rotate(-90)">Actual</text>
<text x="0" y="0" font-size="13" fill="#fff" text-anchor="middle" transform="translate(392.5,531) rotate(-90)">Target</text>
<rect x="380" y="594.5" width="600" height="16.5" fill="#5f5f5f"/>
<rect x="381" y="596" width="14" height="14" fill="#8c8c8c" rx="2"/>
<path d="M391.5,598.5 L391.5,607.5 L384.5,603 Z" fill="#4a4a4a"/>
<rect x="398" y="596" width="101" height="14" fill="#4e4e4e" rx="6"/>
<rect x="965" y="596" width="14" height="14" fill="#8c8c8c" rx="2"/>
<path d="M968.5,598.5 L968.5,607.5 L975.5,603 Z" fill="#4a4a4a"/>
<rect x="991.5" y="48.3" width="696.5" height="558.7" fill="none" stroke="#d98c5e" stroke-width="7"/>
<text x="1339.5" y="70" font-size="15" fill="#d4d4d4" text-anchor="middle" textLength="86" lengthAdjust="spacingAndGlyphs">CIE 1976 u'v'</text>
<rect x="1032.5" y="74.5" width="648" height="500" fill="#262626"/>
<g clip-path="url(#cp)"><g clip-path="url(#cl)">
<rect x="1071" y="84" width="39" height="2.5" fill="url(#c0)"/>
<rect x="1057" y="86" width="83" height="2.5" fill="url(#c1)"/>
<rect x="1051" y="88" width="110" height="2.5" fill="url(#c2)"/>
<rect x="1047" y="90" width="133" height="2.5" fill="url(#c3)"/>
<rect x="1044" y="92" width="155" height="2.5" fill="url(#c4)"/>
<rect x="1042" y="94" width="175" height="2.5" fill="url(#c5)"/>
<rect x="1040" y="96" width="195" height="2.5" fill="url(#c6)"/>
<rect x="1039" y="98" width="213" height="2.5" fill="url(#c7)"/>
<rect x="1037" y="100" width="233" height="2.5" fill="url(#c8)"/>
<rect x="1036" y="102" width="251" height="2.5" fill="url(#c9)"/>
<rect x="1035" y="104" width="269" height="2.5" fill="url(#c10)"/>
<rect x="1035" y="106" width="287" height="2.5" fill="url(#c11)"/>
<rect x="1034" y="108" width="305" height="2.5" fill="url(#c12)"/>
<rect x="1034" y="110" width="322" height="2.5" fill="url(#c13)"/>
<rect x="1033" y="112" width="341" height="2.5" fill="url(#c14)"/>
<rect x="1033" y="114" width="358" height="2.5" fill="url(#c15)"/>
<rect x="1033" y="116" width="375" height="2.5" fill="url(#c16)"/>
<rect x="1033" y="118" width="393" height="2.5" fill="url(#c17)"/>
<rect x="1033" y="120" width="410" height="2.5" fill="url(#c18)"/>
<rect x="1033" y="122" width="427" height="2.5" fill="url(#c19)"/>
<rect x="1032" y="124" width="446" height="2.5" fill="url(#c20)"/>
<rect x="1032" y="126" width="463" height="2.5" fill="url(#c21)"/>
<rect x="1033" y="128" width="480" height="2.5" fill="url(#c22)"/>
<rect x="1033" y="130" width="497" height="2.5" fill="url(#c23)"/>
<rect x="1033" y="132" width="514" height="2.5" fill="url(#c24)"/>
<rect x="1033" y="134" width="532" height="2.5" fill="url(#c25)"/>
<rect x="1033" y="136" width="549" height="2.5" fill="url(#c26)"/>
<rect x="1033" y="138" width="566" height="2.5" fill="url(#c27)"/>
<rect x="1034" y="140" width="583" height="2.5" fill="url(#c28)"/>
<rect x="1034" y="142" width="600" height="2.5" fill="url(#c29)"/>
<rect x="1034" y="144" width="617" height="2.5" fill="url(#c30)"/>
<rect x="1035" y="146" width="634" height="2.5" fill="url(#c31)"/>
<rect x="1035" y="148" width="648" height="2.5" fill="url(#c32)"/>
<rect x="1035" y="150" width="648" height="2.5" fill="url(#c33)"/>
<rect x="1036" y="152" width="647" height="2.5" fill="url(#c34)"/>
<rect x="1036" y="154" width="647" height="2.5" fill="url(#c35)"/>
<rect x="1037" y="156" width="646" height="2.5" fill="url(#c36)"/>
<rect x="1037" y="158" width="646" height="2.5" fill="url(#c37)"/>
<rect x="1037" y="160" width="646" height="2.5" fill="url(#c38)"/>
<rect x="1038" y="162" width="645" height="2.5" fill="url(#c39)"/>
<rect x="1038" y="164" width="645" height="2.5" fill="url(#c40)"/>
<rect x="1039" y="166" width="644" height="2.5" fill="url(#c41)"/>
<rect x="1039" y="168" width="644" height="2.5" fill="url(#c42)"/>
<rect x="1040" y="170" width="643" height="2.5" fill="url(#c43)"/>
<rect x="1041" y="172" width="642" height="2.5" fill="url(#c44)"/>
<rect x="1041" y="174" width="642" height="2.5" fill="url(#c45)"/>
<rect x="1042" y="176" width="641" height="2.5" fill="url(#c46)"/>
<rect x="1042" y="178" width="640" height="2.5" fill="url(#c47)"/>
<rect x="1043" y="180" width="638" height="2.5" fill="url(#c48)"/>
<rect x="1044" y="182" width="635" height="2.5" fill="url(#c49)"/>
<rect x="1044" y="184" width="633" height="2.5" fill="url(#c50)"/>
<rect x="1045" y="186" width="630" height="2.5" fill="url(#c51)"/>
<rect x="1045" y="188" width="628" height="2.5" fill="url(#c52)"/>
<rect x="1046" y="190" width="625" height="2.5" fill="url(#c53)"/>
<rect x="1047" y="192" width="622" height="2.5" fill="url(#c54)"/>
<rect x="1047" y="194" width="620" height="2.5" fill="url(#c55)"/>
<rect x="1048" y="196" width="617" height="2.5" fill="url(#c56)"/>
<rect x="1049" y="198" width="614" height="2.5" fill="url(#c57)"/>
<rect x="1049" y="200" width="612" height="2.5" fill="url(#c58)"/>
<rect x="1050" y="202" width="609" height="2.5" fill="url(#c59)"/>
<rect x="1051" y="204" width="606" height="2.5" fill="url(#c60)"/>
<rect x="1052" y="206" width="603" height="2.5" fill="url(#c61)"/>
<rect x="1052" y="208" width="601" height="2.5" fill="url(#c62)"/>
<rect x="1053" y="210" width="598" height="2.5" fill="url(#c63)"/>
<rect x="1054" y="212" width="595" height="2.5" fill="url(#c64)"/>
<rect x="1055" y="214" width="593" height="2.5" fill="url(#c65)"/>
<rect x="1055" y="216" width="591" height="2.5" fill="url(#c66)"/>
<rect x="1056" y="218" width="588" height="2.5" fill="url(#c67)"/>
<rect x="1057" y="220" width="585" height="2.5" fill="url(#c68)"/>
<rect x="1058" y="222" width="582" height="2.5" fill="url(#c69)"/>
<rect x="1058" y="224" width="580" height="2.5" fill="url(#c70)"/>
<rect x="1059" y="226" width="577" height="2.5" fill="url(#c71)"/>
<rect x="1060" y="228" width="574" height="2.5" fill="url(#c72)"/>
<rect x="1061" y="230" width="571" height="2.5" fill="url(#c73)"/>
<rect x="1062" y="232" width="568" height="2.5" fill="url(#c74)"/>
<rect x="1062" y="234" width="566" height="2.5" fill="url(#c75)"/>
<rect x="1063" y="236" width="563" height="2.5" fill="url(#c76)"/>
<rect x="1064" y="238" width="560" height="2.5" fill="url(#c77)"/>
<rect x="1065" y="240" width="557" height="2.5" fill="url(#c78)"/>
<rect x="1066" y="242" width="554" height="2.5" fill="url(#c79)"/>
<rect x="1067" y="244" width="551" height="2.5" fill="url(#c80)"/>
<rect x="1067" y="246" width="550" height="2.5" fill="url(#c81)"/>
<rect x="1068" y="248" width="547" height="2.5" fill="url(#c82)"/>
<rect x="1069" y="250" width="544" height="2.5" fill="url(#c83)"/>
<rect x="1070" y="252" width="541" height="2.5" fill="url(#c84)"/>
<rect x="1071" y="254" width="538" height="2.5" fill="url(#c85)"/>
<rect x="1072" y="256" width="535" height="2.5" fill="url(#c86)"/>
<rect x="1073" y="258" width="532" height="2.5" fill="url(#c87)"/>
<rect x="1074" y="260" width="529" height="2.5" fill="url(#c88)"/>
<rect x="1074" y="262" width="527" height="2.5" fill="url(#c89)"/>
<rect x="1075" y="264" width="524" height="2.5" fill="url(#c90)"/>
<rect x="1076" y="266" width="521" height="2.5" fill="url(#c91)"/>
<rect x="1077" y="268" width="518" height="2.5" fill="url(#c92)"/>
<rect x="1078" y="270" width="515" height="2.5" fill="url(#c93)"/>
<rect x="1079" y="272" width="512" height="2.5" fill="url(#c94)"/>
<rect x="1080" y="274" width="509" height="2.5" fill="url(#c95)"/>
<rect x="1081" y="276" width="506" height="2.5" fill="url(#c96)"/>
<rect x="1082" y="278" width="504" height="2.5" fill="url(#c97)"/>
<rect x="1083" y="280" width="501" height="2.5" fill="url(#c98)"/>
<rect x="1084" y="282" width="498" height="2.5" fill="url(#c99)"/>
<rect x="1085" y="284" width="495" height="2.5" fill="url(#c100)"/>
<rect x="1086" y="286" width="492" height="2.5" fill="url(#c101)"/>
<rect x="1087" y="288" width="489" height="2.5" fill="url(#c102)"/>
<rect x="1088" y="290" width="486" height="2.5" fill="url(#c103)"/>
<rect x="1089" y="292" width="483" height="2.5" fill="url(#c104)"/>
<rect x="1090" y="294" width="480" height="2.5" fill="url(#c105)"/>
<rect x="1091" y="296" width="477" height="2.5" fill="url(#c106)"/>
<rect x="1092" y="298" width="474" height="2.5" fill="url(#c107)"/>
<rect x="1093" y="300" width="471" height="2.5" fill="url(#c108)"/>
<rect x="1094" y="302" width="468" height="2.5" fill="url(#c109)"/>
<rect x="1095" y="304" width="465" height="2.5" fill="url(#c110)"/>
<rect x="1096" y="306" width="462" height="2.5" fill="url(#c111)"/>
<rect x="1097" y="308" width="459" height="2.5" fill="url(#c112)"/>
<rect x="1098" y="310" width="456" height="2.5" fill="url(#c113)"/>
<rect x="1099" y="312" width="454" height="2.5" fill="url(#c114)"/>
<rect x="1101" y="314" width="450" height="2.5" fill="url(#c115)"/>
<rect x="1102" y="316" width="447" height="2.5" fill="url(#c116)"/>
<rect x="1103" y="318" width="444" height="2.5" fill="url(#c117)"/>
<rect x="1104" y="320" width="441" height="2.5" fill="url(#c118)"/>
<rect x="1105" y="322" width="438" height="2.5" fill="url(#c119)"/>
<rect x="1106" y="324" width="435" height="2.5" fill="url(#c120)"/>
<rect x="1107" y="326" width="432" height="2.5" fill="url(#c121)"/>
<rect x="1108" y="328" width="429" height="2.5" fill="url(#c122)"/>
<rect x="1110" y="330" width="425" height="2.5" fill="url(#c123)"/>
<rect x="1111" y="332" width="422" height="2.5" fill="url(#c124)"/>
<rect x="1112" y="334" width="419" height="2.5" fill="url(#c125)"/>
<rect x="1113" y="336" width="416" height="2.5" fill="url(#c126)"/>
<rect x="1114" y="338" width="413" height="2.5" fill="url(#c127)"/>
<rect x="1115" y="340" width="410" height="2.5" fill="url(#c128)"/>
<rect x="1116" y="342" width="407" height="2.5" fill="url(#c129)"/>
<rect x="1118" y="344" width="404" height="2.5" fill="url(#c130)"/>
<rect x="1119" y="346" width="401" height="2.5" fill="url(#c131)"/>
<rect x="1120" y="348" width="398" height="2.5" fill="url(#c132)"/>
<rect x="1121" y="350" width="395" height="2.5" fill="url(#c133)"/>
<rect x="1122" y="352" width="392" height="2.5" fill="url(#c134)"/>
<rect x="1124" y="354" width="388" height="2.5" fill="url(#c135)"/>
<rect x="1125" y="356" width="385" height="2.5" fill="url(#c136)"/>
<rect x="1126" y="358" width="382" height="2.5" fill="url(#c137)"/>
<rect x="1127" y="360" width="379" height="2.5" fill="url(#c138)"/>
<rect x="1128" y="362" width="376" height="2.5" fill="url(#c139)"/>
<rect x="1130" y="364" width="372" height="2.5" fill="url(#c140)"/>
<rect x="1131" y="366" width="369" height="2.5" fill="url(#c141)"/>
<rect x="1132" y="368" width="366" height="2.5" fill="url(#c142)"/>
<rect x="1133" y="370" width="363" height="2.5" fill="url(#c143)"/>
<rect x="1134" y="372" width="360" height="2.5" fill="url(#c144)"/>
<rect x="1136" y="374" width="356" height="2.5" fill="url(#c145)"/>
<rect x="1137" y="376" width="354" height="2.5" fill="url(#c146)"/>
<rect x="1138" y="378" width="351" height="2.5" fill="url(#c147)"/>
<rect x="1139" y="380" width="348" height="2.5" fill="url(#c148)"/>
<rect x="1141" y="382" width="344" height="2.5" fill="url(#c149)"/>
<rect x="1142" y="384" width="341" height="2.5" fill="url(#c150)"/>
<rect x="1143" y="386" width="338" height="2.5" fill="url(#c151)"/>
<rect x="1144" y="388" width="335" height="2.5" fill="url(#c152)"/>
<rect x="1146" y="390" width="331" height="2.5" fill="url(#c153)"/>
<rect x="1147" y="392" width="328" height="2.5" fill="url(#c154)"/>
<rect x="1148" y="394" width="325" height="2.5" fill="url(#c155)"/>
<rect x="1150" y="396" width="321" height="2.5" fill="url(#c156)"/>
<rect x="1151" y="398" width="318" height="2.5" fill="url(#c157)"/>
<rect x="1152" y="400" width="315" height="2.5" fill="url(#c158)"/>
<rect x="1153" y="402" width="312" height="2.5" fill="url(#c159)"/>
<rect x="1155" y="404" width="308" height="2.5" fill="url(#c160)"/>
<rect x="1156" y="406" width="305" height="2.5" fill="url(#c161)"/>
<rect x="1157" y="408" width="302" height="2.5" fill="url(#c162)"/>
<rect x="1159" y="410" width="299" height="2.5" fill="url(#c163)"/>
<rect x="1160" y="412" width="296" height="2.5" fill="url(#c164)"/>
<rect x="1162" y="414" width="292" height="2.5" fill="url(#c165)"/>
<rect x="1163" y="416" width="289" height="2.5" fill="url(#c166)"/>
<rect x="1164" y="418" width="286" height="2.5" fill="url(#c167)"/>
<rect x="1166" y="420" width="282" height="2.5" fill="url(#c168)"/>
<rect x="1167" y="422" width="279" height="2.5" fill="url(#c169)"/>
<rect x="1168" y="424" width="276" height="2.5" fill="url(#c170)"/>
<rect x="1170" y="426" width="272" height="2.5" fill="url(#c171)"/>
<rect x="1171" y="428" width="269" height="2.5" fill="url(#c172)"/>
<rect x="1173" y="430" width="265" height="2.5" fill="url(#c173)"/>
<rect x="1174" y="432" width="262" height="2.5" fill="url(#c174)"/>
<rect x="1176" y="434" width="258" height="2.5" fill="url(#c175)"/>
<rect x="1177" y="436" width="255" height="2.5" fill="url(#c176)"/>
<rect x="1179" y="438" width="251" height="2.5" fill="url(#c177)"/>
<rect x="1180" y="440" width="248" height="2.5" fill="url(#c178)"/>
<rect x="1182" y="442" width="245" height="2.5" fill="url(#c179)"/>
<rect x="1183" y="444" width="242" height="2.5" fill="url(#c180)"/>
<rect x="1185" y="446" width="238" height="2.5" fill="url(#c181)"/>
<rect x="1186" y="448" width="235" height="2.5" fill="url(#c182)"/>
<rect x="1188" y="450" width="231" height="2.5" fill="url(#c183)"/>
<rect x="1189" y="452" width="228" height="2.5" fill="url(#c184)"/>
<rect x="1191" y="454" width="224" height="2.5" fill="url(#c185)"/>
<rect x="1192" y="456" width="221" height="2.5" fill="url(#c186)"/>
<rect x="1194" y="458" width="217" height="2.5" fill="url(#c187)"/>
<rect x="1196" y="460" width="213" height="2.5" fill="url(#c188)"/>
<rect x="1197" y="462" width="210" height="2.5" fill="url(#c189)"/>
<rect x="1199" y="464" width="206" height="2.5" fill="url(#c190)"/>
<rect x="1200" y="466" width="203" height="2.5" fill="url(#c191)"/>
<rect x="1202" y="468" width="199" height="2.5" fill="url(#c192)"/>
<rect x="1204" y="470" width="195" height="2.5" fill="url(#c193)"/>
<rect x="1205" y="472" width="192" height="2.5" fill="url(#c194)"/>
<rect x="1207" y="474" width="189" height="2.5" fill="url(#c195)"/>
<rect x="1209" y="476" width="185" height="2.5" fill="url(#c196)"/>
<rect x="1211" y="478" width="181" height="2.5" fill="url(#c197)"/>
<rect x="1212" y="480" width="178" height="2.5" fill="url(#c198)"/>
<rect x="1214" y="482" width="174" height="2.5" fill="url(#c199)"/>
<rect x="1216" y="484" width="170" height="2.5" fill="url(#c200)"/>
<rect x="1218" y="486" width="166" height="2.5" fill="url(#c201)"/>
<rect x="1220" y="488" width="162" height="2.5" fill="url(#c202)"/>
<rect x="1222" y="490" width="158" height="2.5" fill="url(#c203)"/>
<rect x="1224" y="492" width="154" height="2.5" fill="url(#c204)"/>
<rect x="1226" y="494" width="150" height="2.5" fill="url(#c205)"/>
<rect x="1228" y="496" width="146" height="2.5" fill="url(#c206)"/>
<rect x="1230" y="498" width="142" height="2.5" fill="url(#c207)"/>
<rect x="1232" y="500" width="138" height="2.5" fill="url(#c208)"/>
<rect x="1234" y="502" width="134" height="2.5" fill="url(#c209)"/>
<rect x="1236" y="504" width="130" height="2.5" fill="url(#c210)"/>
<rect x="1238" y="506" width="126" height="2.5" fill="url(#c211)"/>
<rect x="1240" y="508" width="123" height="2.5" fill="url(#c212)"/>
<rect x="1243" y="510" width="118" height="2.5" fill="url(#c213)"/>
<rect x="1245" y="512" width="114" height="2.5" fill="url(#c214)"/>
<rect x="1247" y="514" width="110" height="2.5" fill="url(#c215)"/>
<rect x="1250" y="516" width="105" height="2.5" fill="url(#c216)"/>
<rect x="1252" y="518" width="101" height="2.5" fill="url(#c217)"/>
<rect x="1255" y="520" width="96" height="2.5" fill="url(#c218)"/>
<rect x="1257" y="522" width="92" height="2.5" fill="url(#c219)"/>
<rect x="1260" y="524" width="87" height="2.5" fill="url(#c220)"/>
<rect x="1262" y="526" width="83" height="2.5" fill="url(#c221)"/>
<rect x="1265" y="528" width="78" height="2.5" fill="url(#c222)"/>
<rect x="1268" y="530" width="73" height="2.5" fill="url(#c223)"/>
<rect x="1270" y="532" width="69" height="2.5" fill="url(#c224)"/>
<rect x="1273" y="534" width="64" height="2.5" fill="url(#c225)"/>
<rect x="1275" y="536" width="60" height="2.5" fill="url(#c226)"/>
<rect x="1278" y="538" width="55" height="2.5" fill="url(#c227)"/>
<rect x="1281" y="540" width="51" height="2.5" fill="url(#c228)"/>
<rect x="1283" y="542" width="47" height="2.5" fill="url(#c229)"/>
<rect x="1286" y="544" width="42" height="2.5" fill="url(#c230)"/>
<rect x="1288" y="546" width="38" height="2.5" fill="url(#c231)"/>
<rect x="1291" y="548" width="33" height="2.5" fill="url(#c232)"/>
<rect x="1293" y="550" width="29" height="2.5" fill="url(#c233)"/>
<rect x="1295" y="552" width="25" height="2.5" fill="url(#c234)"/>
<rect x="1297" y="554" width="21" height="2.5" fill="url(#c235)"/>
<rect x="1299" y="556" width="17" height="2.5" fill="url(#c236)"/>
<rect x="1301" y="558" width="13" height="2.5" fill="url(#c237)"/>
<rect x="1304" y="560" width="8" height="2.5" fill="url(#c238)"/>
<path d="M1031,73 H1683 V577 H1031 Z M1519.3,138.8 L1167.5,105.8 L1222.0,442.9Z" fill="#000" fill-opacity=".4" fill-rule="evenodd"/>
</g>
<rect x="1159.4" y="98.4" width="14" height="14" fill="none" stroke="#fff" stroke-opacity=".92" stroke-width="1.6"/>
<rect x="1184.4" y="123.4" width="14" height="14" fill="none" stroke="#fff" stroke-opacity=".92" stroke-width="1.6"/>
<rect x="1224.6" y="115" width="14" height="14" fill="none" stroke="#fff" stroke-opacity=".92" stroke-width="1.6"/>
<rect x="1245.4" y="106.4" width="14" height="14" fill="none" stroke="#fff" stroke-opacity=".92" stroke-width="1.6"/>
<rect x="1273" y="110.5" width="14" height="14" fill="none" stroke="#fff" stroke-opacity=".92" stroke-width="1.6"/>
<rect x="1222" y="137.4" width="14" height="14" fill="none" stroke="#fff" stroke-opacity=".92" stroke-width="1.6"/>
<rect x="1191.4" y="168.4" width="14" height="14" fill="none" stroke="#fff" stroke-opacity=".92" stroke-width="1.6"/>
<rect x="1174.8" y="188.4" width="14" height="14" fill="none" stroke="#fff" stroke-opacity=".92" stroke-width="1.6"/>
<rect x="1180.6" y="219.8" width="14" height="14" fill="none" stroke="#fff" stroke-opacity=".92" stroke-width="1.6"/>
<rect x="1215" y="217.4" width="14" height="14" fill="none" stroke="#fff" stroke-opacity=".92" stroke-width="1.6"/>
<rect x="1235.4" y="222.4" width="14" height="14" fill="none" stroke="#fff" stroke-opacity=".92" stroke-width="1.6"/>
<rect x="1271.6" y="240.4" width="14" height="14" fill="none" stroke="#fff" stroke-opacity=".92" stroke-width="1.6"/>
<rect x="1335.4" y="211.4" width="14" height="14" fill="none" stroke="#fff" stroke-opacity=".92" stroke-width="1.6"/>
<rect x="1304.5" y="117.5" width="14" height="14" fill="none" stroke="#fff" stroke-opacity=".92" stroke-width="1.6"/>
<rect x="1349" y="121.5" width="14" height="14" fill="none" stroke="#fff" stroke-opacity=".92" stroke-width="1.6"/>
<rect x="1349" y="124.5" width="14" height="14" fill="none" stroke="#fff" stroke-opacity=".92" stroke-width="1.6"/>
<rect x="1311" y="130" width="14" height="14" fill="none" stroke="#fff" stroke-opacity=".92" stroke-width="1.6"/>
<rect x="1329.5" y="135.5" width="14" height="14" fill="none" stroke="#fff" stroke-opacity=".92" stroke-width="1.6"/>
<rect x="1297" y="138" width="14" height="14" fill="none" stroke="#fff" stroke-opacity=".92" stroke-width="1.6"/>
<rect x="1278" y="146" width="14" height="14" fill="none" stroke="#fff" stroke-opacity=".92" stroke-width="1.6"/>
<rect x="1277.5" y="157" width="14" height="14" fill="none" stroke="#fff" stroke-opacity=".92" stroke-width="1.6"/>
<rect x="1290" y="152" width="14" height="14" fill="none" stroke="#fff" stroke-opacity=".92" stroke-width="1.6"/>
<rect x="1301" y="145" width="14" height="14" fill="none" stroke="#fff" stroke-opacity=".92" stroke-width="1.6"/>
<rect x="1309" y="147" width="14" height="14" fill="none" stroke="#fff" stroke-opacity=".92" stroke-width="1.6"/>
<rect x="1322.5" y="145" width="14" height="14" fill="none" stroke="#fff" stroke-opacity=".92" stroke-width="1.6"/>
<rect x="1294" y="143" width="14" height="14" fill="none" stroke="#fff" stroke-opacity=".92" stroke-width="1.6"/>
<rect x="1299" y="148" width="14" height="14" fill="none" stroke="#fff" stroke-opacity=".92" stroke-width="1.6"/>
<rect x="1305" y="142.5" width="14" height="14" fill="none" stroke="#fff" stroke-opacity=".92" stroke-width="1.6"/>
<rect x="1314" y="140" width="14" height="14" fill="none" stroke="#fff" stroke-opacity=".92" stroke-width="1.6"/>
<rect x="1319" y="133.5" width="14" height="14" fill="none" stroke="#fff" stroke-opacity=".92" stroke-width="1.6"/>
<rect x="1286" y="149.5" width="14" height="14" fill="none" stroke="#fff" stroke-opacity=".92" stroke-width="1.6"/>
<rect x="1368.5" y="164.5" width="14" height="14" fill="none" stroke="#fff" stroke-opacity=".92" stroke-width="1.6"/>
<rect x="1512" y="131.4" width="14" height="14" fill="none" stroke="#fff" stroke-opacity=".92" stroke-width="1.6"/>
<rect x="1430.4" y="152.4" width="14" height="14" fill="none" stroke="#fff" stroke-opacity=".92" stroke-width="1.6"/>
<rect x="1217.4" y="271" width="14" height="14" fill="none" stroke="#fff" stroke-opacity=".92" stroke-width="1.6"/>
<rect x="1217.4" y="322.6" width="14" height="14" fill="none" stroke="#fff" stroke-opacity=".92" stroke-width="1.6"/>
<rect x="1354" y="291.4" width="14" height="14" fill="none" stroke="#fff" stroke-opacity=".92" stroke-width="1.6"/>
<rect x="1215" y="436" width="14" height="14" fill="none" stroke="#fff" stroke-opacity=".92" stroke-width="1.6"/>
<rect x="1238.6" y="177.4" width="13.6" height="13.6" fill="none" stroke="#000" stroke-width="2.2"/><rect x="1240.4" y="179.2" width="10" height="10" fill="none" stroke="#fff" stroke-width="1"/>
<ellipse cx="1162.4" cy="102.4" rx="4.4" ry="4.2" fill="#00ff00" stroke="#000" stroke-width="1.1"/>
<ellipse cx="1189" cy="127.6" rx="4.4" ry="4.2" fill="#4a8a4a" stroke="#000" stroke-width="1.1"/>
<ellipse cx="1232.8" cy="119" rx="4.4" ry="4.2" fill="#a0b848" stroke="#000" stroke-width="1.1"/>
<ellipse cx="1256.2" cy="112" rx="4.4" ry="4.2" fill="#ffee00" stroke="#000" stroke-width="1.1"/>
<ellipse cx="1285.5" cy="116.4" rx="4.4" ry="4.2" fill="#e8c830" stroke="#000" stroke-width="1.1"/>
<ellipse cx="1229.8" cy="141.4" rx="4.4" ry="4.2" fill="#5a6b40" stroke="#000" stroke-width="1.1"/>
<ellipse cx="1195.8" cy="177" rx="4.4" ry="4.2" fill="#70b8a8" stroke="#000" stroke-width="1.1"/>
<ellipse cx="1176.6" cy="195" rx="4.4" ry="4.2" fill="#00ffff" stroke="#000" stroke-width="1.1"/>
<ellipse cx="1245.4" cy="183.4" rx="4.4" ry="4.2" fill="#a0a0a0" stroke="#000" stroke-width="1.1"/>
<ellipse cx="1232.8" cy="203.4" rx="4.4" ry="4.2" fill="#000" stroke="#000" stroke-width="1.1"/>
<ellipse cx="1182" cy="230" rx="4.4" ry="4.2" fill="#0088a0" stroke="#000" stroke-width="1.1"/>
<ellipse cx="1218.8" cy="225.4" rx="4.4" ry="4.2" fill="#6080a8" stroke="#000" stroke-width="1.1"/>
<ellipse cx="1241.4" cy="230" rx="4.4" ry="4.2" fill="#8888b8" stroke="#000" stroke-width="1.1"/>
<ellipse cx="1279.8" cy="247.8" rx="4.4" ry="4.2" fill="#604070" stroke="#000" stroke-width="1.1"/>
<ellipse cx="1343.2" cy="217" rx="4.4" ry="4.2" fill="#c05898" stroke="#000" stroke-width="1.1"/>
<ellipse cx="1316.8" cy="121.8" rx="4.4" ry="4.2" fill="#e8a838" stroke="#000" stroke-width="1.1"/>
<ellipse cx="1363.5" cy="127.5" rx="4.4" ry="4.2" fill="#a87040" stroke="#000" stroke-width="1.1"/>
<ellipse cx="1366.2" cy="129" rx="4.4" ry="4.2" fill="#b07038" stroke="#000" stroke-width="1.1"/>
<ellipse cx="1338" cy="132.8" rx="4.4" ry="4.2" fill="#805838" stroke="#000" stroke-width="1.1"/>
<ellipse cx="1330" cy="135.8" rx="4.4" ry="4.2" fill="#805838" stroke="#000" stroke-width="1.1"/>
<ellipse cx="1349" cy="138.5" rx="4.4" ry="4.2" fill="#7a5038" stroke="#000" stroke-width="1.1"/>
<ellipse cx="1309" cy="142.5" rx="4.4" ry="4.2" fill="#d0a080" stroke="#000" stroke-width="1.1"/>
<ellipse cx="1324" cy="142.8" rx="4.4" ry="4.2" fill="#d8a078" stroke="#000" stroke-width="1.1"/>
<ellipse cx="1332.5" cy="145.5" rx="4.4" ry="4.2" fill="#c89070" stroke="#000" stroke-width="1.1"/>
<ellipse cx="1331" cy="148.3" rx="4.4" ry="4.2" fill="#f0a080" stroke="#000" stroke-width="1.1"/>
<ellipse cx="1307.5" cy="148" rx="4.4" ry="4.2" fill="#d8a880" stroke="#000" stroke-width="1.1"/>
<ellipse cx="1301" cy="149.5" rx="4.4" ry="4.2" fill="#d0a080" stroke="#000" stroke-width="1.1"/>
<ellipse cx="1317" cy="149.3" rx="4.4" ry="4.2" fill="#e0a078" stroke="#000" stroke-width="1.1"/>
<ellipse cx="1307.5" cy="151.5" rx="4.4" ry="4.2" fill="#d8a078" stroke="#000" stroke-width="1.1"/>
<ellipse cx="1299" cy="151" rx="4.4" ry="4.2" fill="#c89878" stroke="#000" stroke-width="1.1"/>
<ellipse cx="1299.5" cy="156" rx="4.4" ry="4.2" fill="#805840" stroke="#000" stroke-width="1.1"/>
<ellipse cx="1288" cy="153.8" rx="4.4" ry="4.2" fill="#f8c8a8" stroke="#000" stroke-width="1.1"/>
<ellipse cx="1285.5" cy="162" rx="4.4" ry="4.2" fill="#f8c8b0" stroke="#000" stroke-width="1.1"/>
<ellipse cx="1381" cy="169" rx="4.4" ry="4.2" fill="#c86070" stroke="#000" stroke-width="1.1"/>
<ellipse cx="1520.4" cy="137.2" rx="4.4" ry="4.2" fill="#ff0000" stroke="#000" stroke-width="1.1"/>
<ellipse cx="1451" cy="155" rx="4.4" ry="4.2" fill="#b84048" stroke="#000" stroke-width="1.1"/>
<ellipse cx="1218" cy="281" rx="4.4" ry="4.2" fill="#5868a8" stroke="#000" stroke-width="1.1"/>
<ellipse cx="1216.4" cy="332.6" rx="4.4" ry="4.2" fill="#404898" stroke="#000" stroke-width="1.1"/>
<ellipse cx="1359.6" cy="293" rx="4.4" ry="4.2" fill="#ff00ff" stroke="#000" stroke-width="1.1"/>
<ellipse cx="1211" cy="436.8" rx="4.4" ry="4.2" fill="#0000ff" stroke="#000" stroke-width="1.1"/>
<rect x="1474" y="399.5" width="201" height="132" fill="url(#ins)" stroke="#8a8a8a" stroke-width="1.5"/>
<g clip-path="url(#ic)">
<rect x="1607.1" y="418" width="13.6" height="13.6" fill="none" stroke="#fff" stroke-opacity=".85" stroke-width="1.5"/>
<rect x="1656.8" y="419.6" width="13.6" height="13.6" fill="none" stroke="#fff" stroke-opacity=".85" stroke-width="1.5"/>
<rect x="1500.6" y="438.8" width="13.6" height="13.6" fill="none" stroke="#fff" stroke-opacity=".85" stroke-width="1.5"/>
<rect x="1567" y="458.2" width="13.6" height="13.6" fill="none" stroke="#fff" stroke-opacity=".85" stroke-width="1.5"/>
<rect x="1655.7" y="456.4" width="13.6" height="13.6" fill="none" stroke="#fff" stroke-opacity=".85" stroke-width="1.5"/>
<rect x="1586.6" y="471.4" width="13.6" height="13.6" fill="none" stroke="#fff" stroke-opacity=".85" stroke-width="1.5"/>
<rect x="1478.8" y="471" width="13.6" height="13.6" fill="none" stroke="#fff" stroke-opacity=".85" stroke-width="1.5"/>
<rect x="1485.8" y="480.2" width="13.6" height="13.6" fill="none" stroke="#fff" stroke-opacity=".85" stroke-width="1.5"/>
<rect x="1493.6" y="492.4" width="13.6" height="13.6" fill="none" stroke="#fff" stroke-opacity=".85" stroke-width="1.5"/>
<rect x="1571" y="496.8" width="13.6" height="13.6" fill="none" stroke="#fff" stroke-opacity=".85" stroke-width="1.5"/>
<ellipse cx="1673" cy="416.9" rx="4.3" ry="3.9" fill="#a87040" stroke="#000" stroke-width="1.1"/>
<ellipse cx="1539.4" cy="434.6" rx="4.3" ry="3.9" fill="#c89060" stroke="#000" stroke-width="1.1"/>
<ellipse cx="1605.8" cy="455.5" rx="4.3" ry="3.9" fill="#d89868" stroke="#000" stroke-width="1.1"/>
<ellipse cx="1496.4" cy="468.7" rx="4.3" ry="3.9" fill="#c89068" stroke="#000" stroke-width="1.1"/>
<ellipse cx="1507.4" cy="474.9" rx="4.3" ry="3.9" fill="#f0a880" stroke="#000" stroke-width="1.1"/>
<ellipse cx="1524" cy="477.3" rx="4.3" ry="3.9" fill="#c88860" stroke="#000" stroke-width="1.1"/>
<ellipse cx="1630.5" cy="474.9" rx="4.3" ry="3.9" fill="#d08858" stroke="#000" stroke-width="1.1"/>
<ellipse cx="1483.1" cy="484.4" rx="4.3" ry="3.9" fill="#c08868" stroke="#000" stroke-width="1.1"/>
<ellipse cx="1530.1" cy="489.9" rx="4.3" ry="3.9" fill="#c88860" stroke="#000" stroke-width="1.1"/>
<ellipse cx="1604" cy="492.3" rx="4.3" ry="3.9" fill="#f0a078" stroke="#000" stroke-width="1.1"/>
</g>
<rect x="1423" y="542" width="256" height="29.5" fill="#333333"/>
<text x="1424" y="562.5" font-size="21.5" fill="#f0f0f0" textLength="225" lengthAdjust="spacingAndGlyphs">RGB Triplet: 217, 140, 94</text>
</g>
<rect x="1032.5" y="74.5" width="648" height="500" fill="none" stroke="#909090" stroke-width="1.5"/>
<line x1="1032.5" y1="574.5" x2="1032.5" y2="580.5" stroke="#e8e8e8" stroke-width="1.5"/>
<text x="1032.5" y="597" font-size="16.5" fill="#d4d4d4" text-anchor="middle" textLength="8.5" lengthAdjust="spacingAndGlyphs">0</text>
<line x1="1026.5" y1="575" x2="1032.5" y2="575" stroke="#e8e8e8" stroke-width="1.5"/>
<text x="1026.3" y="580.8" font-size="16.5" fill="#d4d4d4" text-anchor="end" textLength="8.5" lengthAdjust="spacingAndGlyphs">0</text>
<line x1="1086.5" y1="574.5" x2="1086.5" y2="580.5" stroke="#e8e8e8" stroke-width="1.5"/>
<text x="1086.5" y="597" font-size="16.5" fill="#d4d4d4" text-anchor="middle" textLength="28.5" lengthAdjust="spacingAndGlyphs">0,05</text>
<line x1="1026.5" y1="533.45" x2="1032.5" y2="533.45" stroke="#e8e8e8" stroke-width="1.5"/>
<text x="1026.3" y="539.25" font-size="16.5" fill="#d4d4d4" text-anchor="end" textLength="28.5" lengthAdjust="spacingAndGlyphs">0,05</text>
<line x1="1140.5" y1="574.5" x2="1140.5" y2="580.5" stroke="#e8e8e8" stroke-width="1.5"/>
<text x="1140.5" y="597" font-size="16.5" fill="#d4d4d4" text-anchor="middle" textLength="19.5" lengthAdjust="spacingAndGlyphs">0,1</text>
<line x1="1026.5" y1="491.9" x2="1032.5" y2="491.9" stroke="#e8e8e8" stroke-width="1.5"/>
<text x="1026.3" y="497.7" font-size="16.5" fill="#d4d4d4" text-anchor="end" textLength="19.5" lengthAdjust="spacingAndGlyphs">0,1</text>
<line x1="1194.5" y1="574.5" x2="1194.5" y2="580.5" stroke="#e8e8e8" stroke-width="1.5"/>
<text x="1194.5" y="597" font-size="16.5" fill="#d4d4d4" text-anchor="middle" textLength="28.5" lengthAdjust="spacingAndGlyphs">0,15</text>
<line x1="1026.5" y1="450.35" x2="1032.5" y2="450.35" stroke="#e8e8e8" stroke-width="1.5"/>
<text x="1026.3" y="456.15" font-size="16.5" fill="#d4d4d4" text-anchor="end" textLength="28.5" lengthAdjust="spacingAndGlyphs">0,15</text>
<line x1="1248.5" y1="574.5" x2="1248.5" y2="580.5" stroke="#e8e8e8" stroke-width="1.5"/>
<text x="1248.5" y="597" font-size="16.5" fill="#d4d4d4" text-anchor="middle" textLength="19.5" lengthAdjust="spacingAndGlyphs">0,2</text>
<line x1="1026.5" y1="408.8" x2="1032.5" y2="408.8" stroke="#e8e8e8" stroke-width="1.5"/>
<text x="1026.3" y="414.6" font-size="16.5" fill="#d4d4d4" text-anchor="end" textLength="19.5" lengthAdjust="spacingAndGlyphs">0,2</text>
<line x1="1302.5" y1="574.5" x2="1302.5" y2="580.5" stroke="#e8e8e8" stroke-width="1.5"/>
<text x="1302.5" y="597" font-size="16.5" fill="#d4d4d4" text-anchor="middle" textLength="28.5" lengthAdjust="spacingAndGlyphs">0,25</text>
<line x1="1026.5" y1="367.25" x2="1032.5" y2="367.25" stroke="#e8e8e8" stroke-width="1.5"/>
<text x="1026.3" y="373.05" font-size="16.5" fill="#d4d4d4" text-anchor="end" textLength="28.5" lengthAdjust="spacingAndGlyphs">0,25</text>
<line x1="1356.5" y1="574.5" x2="1356.5" y2="580.5" stroke="#e8e8e8" stroke-width="1.5"/>
<text x="1356.5" y="597" font-size="16.5" fill="#d4d4d4" text-anchor="middle" textLength="19.5" lengthAdjust="spacingAndGlyphs">0,3</text>
<line x1="1026.5" y1="325.7" x2="1032.5" y2="325.7" stroke="#e8e8e8" stroke-width="1.5"/>
<text x="1026.3" y="331.5" font-size="16.5" fill="#d4d4d4" text-anchor="end" textLength="19.5" lengthAdjust="spacingAndGlyphs">0,3</text>
<line x1="1410.5" y1="574.5" x2="1410.5" y2="580.5" stroke="#e8e8e8" stroke-width="1.5"/>
<text x="1410.5" y="597" font-size="16.5" fill="#d4d4d4" text-anchor="middle" textLength="28.5" lengthAdjust="spacingAndGlyphs">0,35</text>
<line x1="1026.5" y1="284.15" x2="1032.5" y2="284.15" stroke="#e8e8e8" stroke-width="1.5"/>
<text x="1026.3" y="289.95" font-size="16.5" fill="#d4d4d4" text-anchor="end" textLength="28.5" lengthAdjust="spacingAndGlyphs">0,35</text>
<line x1="1464.5" y1="574.5" x2="1464.5" y2="580.5" stroke="#e8e8e8" stroke-width="1.5"/>
<text x="1464.5" y="597" font-size="16.5" fill="#d4d4d4" text-anchor="middle" textLength="19.5" lengthAdjust="spacingAndGlyphs">0,4</text>
<line x1="1026.5" y1="242.6" x2="1032.5" y2="242.6" stroke="#e8e8e8" stroke-width="1.5"/>
<text x="1026.3" y="248.4" font-size="16.5" fill="#d4d4d4" text-anchor="end" textLength="19.5" lengthAdjust="spacingAndGlyphs">0,4</text>
<line x1="1518.5" y1="574.5" x2="1518.5" y2="580.5" stroke="#e8e8e8" stroke-width="1.5"/>
<text x="1518.5" y="597" font-size="16.5" fill="#d4d4d4" text-anchor="middle" textLength="28.5" lengthAdjust="spacingAndGlyphs">0,45</text>
<line x1="1026.5" y1="201.05" x2="1032.5" y2="201.05" stroke="#e8e8e8" stroke-width="1.5"/>
<text x="1026.3" y="206.85" font-size="16.5" fill="#d4d4d4" text-anchor="end" textLength="28.5" lengthAdjust="spacingAndGlyphs">0,45</text>
<line x1="1572.5" y1="574.5" x2="1572.5" y2="580.5" stroke="#e8e8e8" stroke-width="1.5"/>
<text x="1572.5" y="597" font-size="16.5" fill="#d4d4d4" text-anchor="middle" textLength="19.5" lengthAdjust="spacingAndGlyphs">0,5</text>
<line x1="1026.5" y1="159.5" x2="1032.5" y2="159.5" stroke="#e8e8e8" stroke-width="1.5"/>
<text x="1026.3" y="165.3" font-size="16.5" fill="#d4d4d4" text-anchor="end" textLength="19.5" lengthAdjust="spacingAndGlyphs">0,5</text>
<line x1="1626.5" y1="574.5" x2="1626.5" y2="580.5" stroke="#e8e8e8" stroke-width="1.5"/>
<text x="1626.5" y="597" font-size="16.5" fill="#d4d4d4" text-anchor="middle" textLength="28.5" lengthAdjust="spacingAndGlyphs">0,55</text>
<line x1="1026.5" y1="117.95" x2="1032.5" y2="117.95" stroke="#e8e8e8" stroke-width="1.5"/>
<text x="1026.3" y="123.75" font-size="16.5" fill="#d4d4d4" text-anchor="end" textLength="28.5" lengthAdjust="spacingAndGlyphs">0,55</text>
<rect x="325" y="626" width="1365" height="25" fill="url(#th)"/>
<rect x="325" y="626" width="9" height="25" fill="#000"/>
<rect x="334" y="651" width="1356" height="23.92" fill="#3d3d3d"/>
<rect x="334" y="674.62" width="1356" height="23.92" fill="#7e7e7e"/>
<rect x="334" y="698.24" width="1356" height="23.92" fill="#3d3d3d"/>
<rect x="334" y="721.86" width="1356" height="23.92" fill="#7e7e7e"/>
<rect x="334" y="745.48" width="1356" height="23.92" fill="#3d3d3d"/>
<rect x="334" y="769.1" width="1356" height="23.92" fill="#7e7e7e"/>
<rect x="334" y="792.72" width="1356" height="23.92" fill="#3d3d3d"/>
<rect x="334" y="816.34" width="1356" height="23.92" fill="#7e7e7e"/>
<rect x="325" y="651" width="9" height="188.96" fill="url(#tsh)"/>
<clipPath id="tc"><rect x="325" y="620" width="1365" height="234"/></clipPath>
<g clip-path="url(#tc)" font-size="14.6" fill="#f2f2f2" stroke="#f2f2f2" stroke-width=".2">
<text x="403" y="643.8" textLength="24.6" lengthAdjust="spacingAndGlyphs">White</text>
<text x="438" y="643.8" textLength="31" lengthAdjust="spacingAndGlyphs">Gray 80</text>
<text x="473.6" y="643.8" textLength="30.8" lengthAdjust="spacingAndGlyphs">Gray 65</text>
<text x="509.6" y="643.8" textLength="31" lengthAdjust="spacingAndGlyphs">Gray 50</text>
<text x="545.6" y="643.8" textLength="30.8" lengthAdjust="spacingAndGlyphs">Gray 35</text>
<text x="581.6" y="643.8" textLength="21.4" lengthAdjust="spacingAndGlyphs">Black</text>
<text x="611" y="643.8" textLength="37.4" lengthAdjust="spacingAndGlyphs">Dark Skin</text>
<text x="653.6" y="643.8" textLength="38.8" lengthAdjust="spacingAndGlyphs">Light Skin</text>
<text x="697.4" y="643.8" textLength="33.6" lengthAdjust="spacingAndGlyphs">Blue Sky</text>
<text x="736" y="643.8" textLength="28.4" lengthAdjust="spacingAndGlyphs">Foliage</text>
<text x="769.6" y="643.8" textLength="47.4" lengthAdjust="spacingAndGlyphs">Blue Flower</text>
<text x="822" y="643.8" textLength="51" lengthAdjust="spacingAndGlyphs">Bluish Green</text>
<text x="878.4" y="643.8" textLength="29.2" lengthAdjust="spacingAndGlyphs">Orange</text>
<text x="912.6" y="643.8" textLength="52.4" lengthAdjust="spacingAndGlyphs">Purplish Blue</text>
<text x="970.4" y="643.8" textLength="57.6" lengthAdjust="spacingAndGlyphs">Moderate Red</text>
<text x="1033" y="643.8" textLength="26" lengthAdjust="spacingAndGlyphs">Purple</text>
<text x="1064.4" y="643.8" textLength="53" lengthAdjust="spacingAndGlyphs">Yellow Green</text>
<text x="1122.4" y="643.8" textLength="57.2" lengthAdjust="spacingAndGlyphs">Orange Yellow</text>
<text x="1185" y="643.8" textLength="17.4" lengthAdjust="spacingAndGlyphs">Blue</text>
<text x="1214.4" y="643.8" textLength="24.2" lengthAdjust="spacingAndGlyphs">Green</text>
<text x="1244" y="643.8" textLength="15" lengthAdjust="spacingAndGlyphs">Red</text>
<text x="1273.4" y="643.8" textLength="25.6" lengthAdjust="spacingAndGlyphs">Yellow</text>
<text x="1308" y="643.8" textLength="36" lengthAdjust="spacingAndGlyphs">Magenta</text>
<text x="1349" y="643.8" textLength="19.5" lengthAdjust="spacingAndGlyphs">Cyan</text>
<text x="1378.5" y="643.8" textLength="39.6" lengthAdjust="spacingAndGlyphs">100% Red</text>
<text x="1423.1" y="643.8" textLength="49" lengthAdjust="spacingAndGlyphs">100% Green</text>
<text x="1477.6" y="643.8" textLength="41.9" lengthAdjust="spacingAndGlyphs">100% Blue</text>
<text x="1525" y="643.8" textLength="43.6" lengthAdjust="spacingAndGlyphs">100% Cyan</text>
<text x="1573.7" y="643.8" textLength="59.7" lengthAdjust="spacingAndGlyphs">100% Magenta</text>
<text x="1639" y="643.8" textLength="52" lengthAdjust="spacingAndGlyphs">100% Yellow</text>
<text x="336.4" y="669" textLength="33.6" lengthAdjust="spacingAndGlyphs">x: CIE31</text>
<text x="403" y="669" textLength="18.3" lengthAdjust="spacingAndGlyphs">0,31</text>
<text x="438" y="669" textLength="18.3" lengthAdjust="spacingAndGlyphs">0,31</text>
<text x="473.6" y="669" textLength="18.3" lengthAdjust="spacingAndGlyphs">0,31</text>
<text x="509.6" y="669" textLength="18.3" lengthAdjust="spacingAndGlyphs">0,31</text>
<text x="545.6" y="669" textLength="18.3" lengthAdjust="spacingAndGlyphs">0,31</text>
<text x="581.6" y="669" textLength="18.3" lengthAdjust="spacingAndGlyphs">0,28</text>
<text x="611" y="669" textLength="18.3" lengthAdjust="spacingAndGlyphs">0,41</text>
<text x="653.6" y="669" textLength="18.3" lengthAdjust="spacingAndGlyphs">0,38</text>
<text x="697.4" y="669" textLength="18.3" lengthAdjust="spacingAndGlyphs">0,25</text>
<text x="736" y="669" textLength="18.3" lengthAdjust="spacingAndGlyphs">0,34</text>
<text x="769.6" y="669" textLength="18.3" lengthAdjust="spacingAndGlyphs">0,27</text>
<text x="822" y="669" textLength="18.3" lengthAdjust="spacingAndGlyphs">0,26</text>
<text x="878.4" y="669" textLength="18.3" lengthAdjust="spacingAndGlyphs">0,53</text>
<text x="912.6" y="669" textLength="18.3" lengthAdjust="spacingAndGlyphs">0,21</text>
<text x="970.4" y="669" textLength="18.3" lengthAdjust="spacingAndGlyphs">0,47</text>
<text x="1033" y="669" textLength="18.3" lengthAdjust="spacingAndGlyphs">0,29</text>
<text x="1064.4" y="669" textLength="18.3" lengthAdjust="spacingAndGlyphs">0,38</text>
<text x="1122.4" y="669" textLength="18.3" lengthAdjust="spacingAndGlyphs">0,48</text>
<text x="1185" y="669" textLength="18.3" lengthAdjust="spacingAndGlyphs">0,18</text>
<text x="1214.4" y="669" textLength="18.3" lengthAdjust="spacingAndGlyphs">0,30</text>
<text x="1244" y="669" textLength="18.3" lengthAdjust="spacingAndGlyphs">0,55</text>
<text x="1273.4" y="669" textLength="18.3" lengthAdjust="spacingAndGlyphs">0,46</text>
<text x="1308" y="669" textLength="18.3" lengthAdjust="spacingAndGlyphs">0,38</text>
<text x="1349" y="669" textLength="18.3" lengthAdjust="spacingAndGlyphs">0,20</text>
<text x="1378.5" y="669" textLength="18.3" lengthAdjust="spacingAndGlyphs">0,64</text>
<text x="1423.1" y="669" textLength="18.3" lengthAdjust="spacingAndGlyphs">0,30</text>
<text x="1477.6" y="669" textLength="18.3" lengthAdjust="spacingAndGlyphs">0,14</text>
<text x="1525" y="669" textLength="18.3" lengthAdjust="spacingAndGlyphs">0,22</text>
<text x="1573.7" y="669" textLength="18.3" lengthAdjust="spacingAndGlyphs">0,32</text>
<text x="1639" y="669" textLength="18.3" lengthAdjust="spacingAndGlyphs">0,43</text>
<text x="336.4" y="692.549" textLength="33.6" lengthAdjust="spacingAndGlyphs">y: CIE31</text>
<text x="403" y="692.549" textLength="18.3" lengthAdjust="spacingAndGlyphs">0,33</text>
<text x="438" y="692.549" textLength="18.3" lengthAdjust="spacingAndGlyphs">0,33</text>
<text x="473.6" y="692.549" textLength="18.3" lengthAdjust="spacingAndGlyphs">0,33</text>
<text x="509.6" y="692.549" textLength="18.3" lengthAdjust="spacingAndGlyphs">0,33</text>
<text x="545.6" y="692.549" textLength="18.3" lengthAdjust="spacingAndGlyphs">0,33</text>
<text x="581.6" y="692.549" textLength="18.3" lengthAdjust="spacingAndGlyphs">0,30</text>
<text x="611" y="692.549" textLength="18.3" lengthAdjust="spacingAndGlyphs">0,37</text>
<text x="653.6" y="692.549" textLength="18.3" lengthAdjust="spacingAndGlyphs">0,36</text>
<text x="697.4" y="692.549" textLength="18.3" lengthAdjust="spacingAndGlyphs">0,26</text>
<text x="736" y="692.549" textLength="18.3" lengthAdjust="spacingAndGlyphs">0,43</text>
<text x="769.6" y="692.549" textLength="18.3" lengthAdjust="spacingAndGlyphs">0,25</text>
<text x="822" y="692.549" textLength="18.3" lengthAdjust="spacingAndGlyphs">0,36</text>
<text x="878.4" y="692.549" textLength="18.3" lengthAdjust="spacingAndGlyphs">0,41</text>
<text x="912.6" y="692.549" textLength="18.3" lengthAdjust="spacingAndGlyphs">0,19</text>
<text x="970.4" y="692.549" textLength="18.3" lengthAdjust="spacingAndGlyphs">0,32</text>
<text x="1033" y="692.549" textLength="18.3" lengthAdjust="spacingAndGlyphs">0,22</text>
<text x="1064.4" y="692.549" textLength="18.3" lengthAdjust="spacingAndGlyphs">0,50</text>
<text x="1122.4" y="692.549" textLength="18.3" lengthAdjust="spacingAndGlyphs">0,44</text>
<text x="1185" y="692.549" textLength="18.3" lengthAdjust="spacingAndGlyphs">0,14</text>
<text x="1214.4" y="692.549" textLength="18.3" lengthAdjust="spacingAndGlyphs">0,50</text>
<text x="1244" y="692.549" textLength="18.3" lengthAdjust="spacingAndGlyphs">0,32</text>
<text x="1273.4" y="692.549" textLength="18.3" lengthAdjust="spacingAndGlyphs">0,48</text>
<text x="1308" y="692.549" textLength="18.3" lengthAdjust="spacingAndGlyphs">0,25</text>
<text x="1349" y="692.549" textLength="18.3" lengthAdjust="spacingAndGlyphs">0,27</text>
<text x="1378.5" y="692.549" textLength="18.3" lengthAdjust="spacingAndGlyphs">0,33</text>
<text x="1423.1" y="692.549" textLength="18.3" lengthAdjust="spacingAndGlyphs">0,61</text>
<text x="1477.6" y="692.549" textLength="18.3" lengthAdjust="spacingAndGlyphs">0,06</text>
<text x="1525" y="692.549" textLength="18.3" lengthAdjust="spacingAndGlyphs">0,33</text>
<text x="1573.7" y="692.549" textLength="18.3" lengthAdjust="spacingAndGlyphs">0,16</text>
<text x="1639" y="692.549" textLength="18.3" lengthAdjust="spacingAndGlyphs">0,51</text>
<text x="336.4" y="716.098" textLength="4.6" lengthAdjust="spacingAndGlyphs">Y</text>
<text x="403" y="716.098" textLength="28.7" lengthAdjust="spacingAndGlyphs">315,42</text>
<text x="438" y="716.098" textLength="28.7" lengthAdjust="spacingAndGlyphs">250,61</text>
<text x="473.6" y="716.098" textLength="28.7" lengthAdjust="spacingAndGlyphs">203,21</text>
<text x="509.6" y="716.098" textLength="28.7" lengthAdjust="spacingAndGlyphs">157,28</text>
<text x="545.6" y="716.098" textLength="28.7" lengthAdjust="spacingAndGlyphs">109,51</text>
<text x="581.6" y="716.098" textLength="18.3" lengthAdjust="spacingAndGlyphs">0,28</text>
<text x="611" y="716.098" textLength="23.5" lengthAdjust="spacingAndGlyphs">31,61</text>
<text x="653.6" y="716.098" textLength="28.7" lengthAdjust="spacingAndGlyphs">113,60</text>
<text x="697.4" y="716.098" textLength="23.5" lengthAdjust="spacingAndGlyphs">58,70</text>
<text x="736" y="716.098" textLength="23.5" lengthAdjust="spacingAndGlyphs">40,53</text>
<text x="769.6" y="716.098" textLength="23.5" lengthAdjust="spacingAndGlyphs">74,87</text>
<text x="822" y="716.098" textLength="28.7" lengthAdjust="spacingAndGlyphs">131,01</text>
<text x="878.4" y="716.098" textLength="23.5" lengthAdjust="spacingAndGlyphs">91,28</text>
<text x="912.6" y="716.098" textLength="23.5" lengthAdjust="spacingAndGlyphs">37,18</text>
<text x="970.4" y="716.098" textLength="23.5" lengthAdjust="spacingAndGlyphs">61,18</text>
<text x="1033" y="716.098" textLength="23.5" lengthAdjust="spacingAndGlyphs">20,81</text>
<text x="1064.4" y="716.098" textLength="28.7" lengthAdjust="spacingAndGlyphs">135,26</text>
<text x="1122.4" y="716.098" textLength="28.7" lengthAdjust="spacingAndGlyphs">136,70</text>
<text x="1185" y="716.098" textLength="23.5" lengthAdjust="spacingAndGlyphs">19,42</text>
<text x="1214.4" y="716.098" textLength="23.5" lengthAdjust="spacingAndGlyphs">72,71</text>
<text x="1244" y="716.098" textLength="23.5" lengthAdjust="spacingAndGlyphs">37,90</text>
<text x="1273.4" y="716.098" textLength="28.7" lengthAdjust="spacingAndGlyphs">186,66</text>
<text x="1308" y="716.098" textLength="23.5" lengthAdjust="spacingAndGlyphs">61,81</text>
<text x="1349" y="716.098" textLength="23.5" lengthAdjust="spacingAndGlyphs">60,45</text>
<text x="1378.5" y="716.098" textLength="23.5" lengthAdjust="spacingAndGlyphs">72,06</text>
<text x="1423.1" y="716.098" textLength="28.7" lengthAdjust="spacingAndGlyphs">219,63</text>
<text x="1477.6" y="716.098" textLength="23.5" lengthAdjust="spacingAndGlyphs">24,42</text>
<text x="1525" y="716.098" textLength="28.7" lengthAdjust="spacingAndGlyphs">243,82</text>
<text x="1573.7" y="716.098" textLength="23.5" lengthAdjust="spacingAndGlyphs">95,99</text>
<text x="1639" y="716.098" textLength="28.7" lengthAdjust="spacingAndGlyphs">291,30</text>
<text x="336.4" y="739.647" textLength="60.6" lengthAdjust="spacingAndGlyphs">Target x:CIE31</text>
<text x="403" y="739.647" textLength="18.3" lengthAdjust="spacingAndGlyphs">0,31</text>
<text x="438" y="739.647" textLength="18.3" lengthAdjust="spacingAndGlyphs">0,31</text>
<text x="473.6" y="739.647" textLength="18.3" lengthAdjust="spacingAndGlyphs">0,31</text>
<text x="509.6" y="739.647" textLength="18.3" lengthAdjust="spacingAndGlyphs">0,31</text>
<text x="545.6" y="739.647" textLength="18.3" lengthAdjust="spacingAndGlyphs">0,31</text>
<text x="581.6" y="739.647" textLength="18.3" lengthAdjust="spacingAndGlyphs">0,31</text>
<text x="611" y="739.647" textLength="18.3" lengthAdjust="spacingAndGlyphs">0,40</text>
<text x="653.6" y="739.647" textLength="18.3" lengthAdjust="spacingAndGlyphs">0,38</text>
<text x="697.4" y="739.647" textLength="18.3" lengthAdjust="spacingAndGlyphs">0,25</text>
<text x="736" y="739.647" textLength="18.3" lengthAdjust="spacingAndGlyphs">0,34</text>
<text x="769.6" y="739.647" textLength="18.3" lengthAdjust="spacingAndGlyphs">0,27</text>
<text x="822" y="739.647" textLength="18.3" lengthAdjust="spacingAndGlyphs">0,26</text>
<text x="878.4" y="739.647" textLength="18.3" lengthAdjust="spacingAndGlyphs">0,51</text>
<text x="912.6" y="739.647" textLength="18.3" lengthAdjust="spacingAndGlyphs">0,22</text>
<text x="970.4" y="739.647" textLength="18.3" lengthAdjust="spacingAndGlyphs">0,46</text>
<text x="1033" y="739.647" textLength="18.3" lengthAdjust="spacingAndGlyphs">0,29</text>
<text x="1064.4" y="739.647" textLength="18.3" lengthAdjust="spacingAndGlyphs">0,38</text>
<text x="1122.4" y="739.647" textLength="18.3" lengthAdjust="spacingAndGlyphs">0,47</text>
<text x="1185" y="739.647" textLength="18.3" lengthAdjust="spacingAndGlyphs">0,19</text>
<text x="1214.4" y="739.647" textLength="18.3" lengthAdjust="spacingAndGlyphs">0,31</text>
<text x="1244" y="739.647" textLength="18.3" lengthAdjust="spacingAndGlyphs">0,54</text>
<text x="1273.4" y="739.647" textLength="18.3" lengthAdjust="spacingAndGlyphs">0,45</text>
<text x="1308" y="739.647" textLength="18.3" lengthAdjust="spacingAndGlyphs">0,37</text>
<text x="1349" y="739.647" textLength="18.3" lengthAdjust="spacingAndGlyphs">0,21</text>
<text x="1378.5" y="739.647" textLength="18.3" lengthAdjust="spacingAndGlyphs">0,64</text>
<text x="1423.1" y="739.647" textLength="18.3" lengthAdjust="spacingAndGlyphs">0,30</text>
<text x="1477.6" y="739.647" textLength="18.3" lengthAdjust="spacingAndGlyphs">0,15</text>
<text x="1525" y="739.647" textLength="18.3" lengthAdjust="spacingAndGlyphs">0,22</text>
<text x="1573.7" y="739.647" textLength="18.3" lengthAdjust="spacingAndGlyphs">0,32</text>
<text x="1639" y="739.647" textLength="18.3" lengthAdjust="spacingAndGlyphs">0,42</text>
<text x="336.4" y="763.197" textLength="60.6" lengthAdjust="spacingAndGlyphs">Target y:CIE31</text>
<text x="403" y="763.197" textLength="18.3" lengthAdjust="spacingAndGlyphs">0,33</text>
<text x="438" y="763.197" textLength="18.3" lengthAdjust="spacingAndGlyphs">0,33</text>
<text x="473.6" y="763.197" textLength="18.3" lengthAdjust="spacingAndGlyphs">0,33</text>
<text x="509.6" y="763.197" textLength="18.3" lengthAdjust="spacingAndGlyphs">0,33</text>
<text x="545.6" y="763.197" textLength="18.3" lengthAdjust="spacingAndGlyphs">0,33</text>
<text x="581.6" y="763.197" textLength="18.3" lengthAdjust="spacingAndGlyphs">0,33</text>
<text x="611" y="763.197" textLength="18.3" lengthAdjust="spacingAndGlyphs">0,36</text>
<text x="653.6" y="763.197" textLength="18.3" lengthAdjust="spacingAndGlyphs">0,36</text>
<text x="697.4" y="763.197" textLength="18.3" lengthAdjust="spacingAndGlyphs">0,27</text>
<text x="736" y="763.197" textLength="18.3" lengthAdjust="spacingAndGlyphs">0,43</text>
<text x="769.6" y="763.197" textLength="18.3" lengthAdjust="spacingAndGlyphs">0,25</text>
<text x="822" y="763.197" textLength="18.3" lengthAdjust="spacingAndGlyphs">0,36</text>
<text x="878.4" y="763.197" textLength="18.3" lengthAdjust="spacingAndGlyphs">0,41</text>
<text x="912.6" y="763.197" textLength="18.3" lengthAdjust="spacingAndGlyphs">0,19</text>
<text x="970.4" y="763.197" textLength="18.3" lengthAdjust="spacingAndGlyphs">0,31</text>
<text x="1033" y="763.197" textLength="18.3" lengthAdjust="spacingAndGlyphs">0,22</text>
<text x="1064.4" y="763.197" textLength="18.3" lengthAdjust="spacingAndGlyphs">0,49</text>
<text x="1122.4" y="763.197" textLength="18.3" lengthAdjust="spacingAndGlyphs">0,44</text>
<text x="1185" y="763.197" textLength="18.3" lengthAdjust="spacingAndGlyphs">0,14</text>
<text x="1214.4" y="763.197" textLength="18.3" lengthAdjust="spacingAndGlyphs">0,49</text>
<text x="1244" y="763.197" textLength="18.3" lengthAdjust="spacingAndGlyphs">0,32</text>
<text x="1273.4" y="763.197" textLength="18.3" lengthAdjust="spacingAndGlyphs">0,47</text>
<text x="1308" y="763.197" textLength="18.3" lengthAdjust="spacingAndGlyphs">0,25</text>
<text x="1349" y="763.197" textLength="18.3" lengthAdjust="spacingAndGlyphs">0,27</text>
<text x="1378.5" y="763.197" textLength="18.3" lengthAdjust="spacingAndGlyphs">0,33</text>
<text x="1423.1" y="763.197" textLength="18.3" lengthAdjust="spacingAndGlyphs">0,60</text>
<text x="1477.6" y="763.197" textLength="18.3" lengthAdjust="spacingAndGlyphs">0,06</text>
<text x="1525" y="763.197" textLength="18.3" lengthAdjust="spacingAndGlyphs">0,33</text>
<text x="1573.7" y="763.197" textLength="18.3" lengthAdjust="spacingAndGlyphs">0,15</text>
<text x="1639" y="763.197" textLength="18.3" lengthAdjust="spacingAndGlyphs">0,51</text>
<text x="336.4" y="786.746" textLength="35" lengthAdjust="spacingAndGlyphs">Target Y</text>
<text x="403" y="786.746" textLength="28.7" lengthAdjust="spacingAndGlyphs">315,42</text>
<text x="438" y="786.746" textLength="28.7" lengthAdjust="spacingAndGlyphs">249,59</text>
<text x="473.6" y="786.746" textLength="28.7" lengthAdjust="spacingAndGlyphs">201,11</text>
<text x="509.6" y="786.746" textLength="28.7" lengthAdjust="spacingAndGlyphs">154,88</text>
<text x="545.6" y="786.746" textLength="28.7" lengthAdjust="spacingAndGlyphs">107,85</text>
<text x="581.6" y="786.746" textLength="18.3" lengthAdjust="spacingAndGlyphs">0,00</text>
<text x="611" y="786.746" textLength="23.5" lengthAdjust="spacingAndGlyphs">31,77</text>
<text x="653.6" y="786.746" textLength="28.7" lengthAdjust="spacingAndGlyphs">110,07</text>
<text x="697.4" y="786.746" textLength="23.5" lengthAdjust="spacingAndGlyphs">58,98</text>
<text x="736" y="786.746" textLength="23.5" lengthAdjust="spacingAndGlyphs">41,11</text>
<text x="769.6" y="786.746" textLength="23.5" lengthAdjust="spacingAndGlyphs">73,55</text>
<text x="822" y="786.746" textLength="28.7" lengthAdjust="spacingAndGlyphs">132,08</text>
<text x="878.4" y="786.746" textLength="23.5" lengthAdjust="spacingAndGlyphs">89,42</text>
<text x="912.6" y="786.746" textLength="23.5" lengthAdjust="spacingAndGlyphs">37,07</text>
<text x="970.4" y="786.746" textLength="23.5" lengthAdjust="spacingAndGlyphs">58,91</text>
<text x="1033" y="786.746" textLength="23.5" lengthAdjust="spacingAndGlyphs">21,05</text>
<text x="1064.4" y="786.746" textLength="28.7" lengthAdjust="spacingAndGlyphs">134,87</text>
<text x="1122.4" y="786.746" textLength="28.7" lengthAdjust="spacingAndGlyphs">134,10</text>
<text x="1185" y="786.746" textLength="23.5" lengthAdjust="spacingAndGlyphs">19,69</text>
<text x="1214.4" y="786.746" textLength="23.5" lengthAdjust="spacingAndGlyphs">72,46</text>
<text x="1244" y="786.746" textLength="23.5" lengthAdjust="spacingAndGlyphs">36,78</text>
<text x="1273.4" y="786.746" textLength="28.7" lengthAdjust="spacingAndGlyphs">185,99</text>
<text x="1308" y="786.746" textLength="23.5" lengthAdjust="spacingAndGlyphs">59,38</text>
<text x="1349" y="786.746" textLength="23.5" lengthAdjust="spacingAndGlyphs">61,25</text>
<text x="1378.5" y="786.746" textLength="23.5" lengthAdjust="spacingAndGlyphs">67,08</text>
<text x="1423.1" y="786.746" textLength="28.7" lengthAdjust="spacingAndGlyphs">225,58</text>
<text x="1477.6" y="786.746" textLength="23.5" lengthAdjust="spacingAndGlyphs">22,77</text>
<text x="1525" y="786.746" textLength="28.7" lengthAdjust="spacingAndGlyphs">248,35</text>
<text x="1573.7" y="786.746" textLength="23.5" lengthAdjust="spacingAndGlyphs">89,85</text>
<text x="1639" y="786.746" textLength="28.7" lengthAdjust="spacingAndGlyphs">292,65</text>
<text x="336.4" y="810.295" textLength="35.6" lengthAdjust="spacingAndGlyphs">ΔE 2000</text>
<text x="403" y="810.295" textLength="18.3" lengthAdjust="spacingAndGlyphs">0,66</text>
<text x="438" y="810.295" textLength="18.3" lengthAdjust="spacingAndGlyphs">0,75</text>
<text x="473.6" y="810.295" textLength="18.3" lengthAdjust="spacingAndGlyphs">0,50</text>
<text x="509.6" y="810.295" textLength="18.3" lengthAdjust="spacingAndGlyphs">0,77</text>
<text x="545.6" y="810.295" textLength="18.3" lengthAdjust="spacingAndGlyphs">0,90</text>
<text x="581.6" y="810.295" textLength="18.3" lengthAdjust="spacingAndGlyphs">0,64</text>
<text x="611" y="810.295" textLength="18.3" lengthAdjust="spacingAndGlyphs">1,02</text>
<text x="653.6" y="810.295" textLength="18.3" lengthAdjust="spacingAndGlyphs">1,17</text>
<text x="697.4" y="810.295" textLength="18.3" lengthAdjust="spacingAndGlyphs">1,40</text>
<text x="736" y="810.295" textLength="18.3" lengthAdjust="spacingAndGlyphs">0,80</text>
<text x="769.6" y="810.295" textLength="18.3" lengthAdjust="spacingAndGlyphs">0,77</text>
<text x="822" y="810.295" textLength="18.3" lengthAdjust="spacingAndGlyphs">0,92</text>
<text x="878.4" y="810.295" textLength="18.3" lengthAdjust="spacingAndGlyphs">1,67</text>
<text x="912.6" y="810.295" textLength="18.3" lengthAdjust="spacingAndGlyphs">1,95</text>
<text x="970.4" y="810.295" textLength="18.3" lengthAdjust="spacingAndGlyphs">1,49</text>
<text x="1033" y="810.295" textLength="18.3" lengthAdjust="spacingAndGlyphs">0,18</text>
<text x="1064.4" y="810.295" textLength="18.3" lengthAdjust="spacingAndGlyphs">1,21</text>
<text x="1122.4" y="810.295" textLength="18.3" lengthAdjust="spacingAndGlyphs">1,48</text>
<text x="1185" y="810.295" textLength="18.3" lengthAdjust="spacingAndGlyphs">1,98</text>
<text x="1214.4" y="810.295" textLength="18.3" lengthAdjust="spacingAndGlyphs">0,91</text>
<text x="1244" y="810.295" textLength="18.3" lengthAdjust="spacingAndGlyphs">1,75</text>
<text x="1273.4" y="810.295" textLength="18.3" lengthAdjust="spacingAndGlyphs">1,82</text>
<text x="1308" y="810.295" textLength="18.3" lengthAdjust="spacingAndGlyphs">0,99</text>
<text x="1349" y="810.295" textLength="18.3" lengthAdjust="spacingAndGlyphs">1,28</text>
<text x="1378.5" y="810.295" textLength="18.3" lengthAdjust="spacingAndGlyphs">2,63</text>
<text x="1423.1" y="810.295" textLength="18.3" lengthAdjust="spacingAndGlyphs">0,94</text>
<text x="1477.6" y="810.295" textLength="18.3" lengthAdjust="spacingAndGlyphs">2,84</text>
<text x="1525" y="810.295" textLength="18.3" lengthAdjust="spacingAndGlyphs">1,45</text>
<text x="1573.7" y="810.295" textLength="18.3" lengthAdjust="spacingAndGlyphs">1,58</text>
<text x="1639" y="810.295" textLength="18.3" lengthAdjust="spacingAndGlyphs">1,70</text>
<text x="336.4" y="833.844" textLength="24" lengthAdjust="spacingAndGlyphs">dEITP</text>
<text x="403" y="833.844" textLength="18.3" lengthAdjust="spacingAndGlyphs">0,57</text>
<text x="438" y="833.844" textLength="18.3" lengthAdjust="spacingAndGlyphs">0,55</text>
<text x="473.6" y="833.844" textLength="18.3" lengthAdjust="spacingAndGlyphs">0,82</text>
<text x="509.6" y="833.844" textLength="18.3" lengthAdjust="spacingAndGlyphs">1,22</text>
<text x="545.6" y="833.844" textLength="18.3" lengthAdjust="spacingAndGlyphs">1,29</text>
<text x="581.6" y="833.844" textLength="23.5" lengthAdjust="spacingAndGlyphs">68,85</text>
<text x="611" y="833.844" textLength="18.3" lengthAdjust="spacingAndGlyphs">3,91</text>
<text x="653.6" y="833.844" textLength="18.3" lengthAdjust="spacingAndGlyphs">3,14</text>
<text x="697.4" y="833.844" textLength="18.3" lengthAdjust="spacingAndGlyphs">3,22</text>
<text x="736" y="833.844" textLength="18.3" lengthAdjust="spacingAndGlyphs">2,83</text>
<text x="769.6" y="833.844" textLength="18.3" lengthAdjust="spacingAndGlyphs">1,86</text>
<text x="822" y="833.844" textLength="18.3" lengthAdjust="spacingAndGlyphs">2,97</text>
<text x="878.4" y="833.844" textLength="18.3" lengthAdjust="spacingAndGlyphs">9,59</text>
<text x="912.6" y="833.844" textLength="18.3" lengthAdjust="spacingAndGlyphs">6,62</text>
<text x="970.4" y="833.844" textLength="18.3" lengthAdjust="spacingAndGlyphs">5,77</text>
<text x="1033" y="833.844" textLength="18.3" lengthAdjust="spacingAndGlyphs">0,89</text>
<text x="1064.4" y="833.844" textLength="18.3" lengthAdjust="spacingAndGlyphs">4,92</text>
<text x="1122.4" y="833.844" textLength="18.3" lengthAdjust="spacingAndGlyphs">7,65</text>
<text x="1185" y="833.844" textLength="23.5" lengthAdjust="spacingAndGlyphs">10,50</text>
<text x="1214.4" y="833.844" textLength="18.3" lengthAdjust="spacingAndGlyphs">3,80</text>
<text x="1244" y="833.844" textLength="23.5" lengthAdjust="spacingAndGlyphs">10,52</text>
<text x="1273.4" y="833.844" textLength="18.3" lengthAdjust="spacingAndGlyphs">7,94</text>
<text x="1308" y="833.844" textLength="18.3" lengthAdjust="spacingAndGlyphs">3,18</text>
<text x="1349" y="833.844" textLength="18.3" lengthAdjust="spacingAndGlyphs">6,29</text>
<text x="1378.5" y="833.844" textLength="18.3" lengthAdjust="spacingAndGlyphs">8,56</text>
<text x="1423.1" y="833.844" textLength="18.3" lengthAdjust="spacingAndGlyphs">5,83</text>
<text x="1477.6" y="833.844" textLength="23.5" lengthAdjust="spacingAndGlyphs">16,02</text>
<text x="1525" y="833.844" textLength="18.3" lengthAdjust="spacingAndGlyphs">5,63</text>
<text x="1573.7" y="833.844" textLength="18.3" lengthAdjust="spacingAndGlyphs">5,94</text>
<text x="1639" y="833.844" textLength="18.3" lengthAdjust="spacingAndGlyphs">6,27</text>
</g>
<rect x="334" y="840" width="1356" height="14" fill="#545454"/>
<rect x="334.5" y="841" width="9" height="12.5" fill="#8c8c8c" rx="1.5"/>
<path d="M341,843.5 L341,851 L336.5,847.2 Z" fill="#3c3c3c"/>
<rect x="345" y="841" width="941" height="12.5" fill="#444444" rx="6"/>
<rect x="1681" y="841" width="9" height="12.5" fill="#8c8c8c" rx="1.5"/>
<rect x="0" y="893" width="1370" height="59" fill="#3a3a3a"/>
<clipPath id="bc"><rect x="0" y="890" width="1370" height="62"/></clipPath><g clip-path="url(#bc)" font-size="10.9" fill="#262626">
<path d="M0,941.5 V897 Q0,893 4,893 H45.5 Q49.5,893 49.5,897 V941.5 Z" fill="url(#bt)"/>
<rect x="5.5" y="898.5" width="39.5" height="23.5" fill="#ffffff" rx="2.5"/>
<rect x="5.5" y="898.5" width="39.5" height="23.5" fill="url(#bsh)" rx="2.5"/>
<text class="b" x="25" y="936.5" text-anchor="middle">White</text>
<path d="M52,941.5 V897 Q52,893 56,893 H97.5 Q101.5,893 101.5,897 V941.5 Z" fill="url(#bt)"/>
<rect x="57.5" y="898.5" width="39.5" height="23.5" fill="#e6e6e6" rx="2.5"/>
<rect x="57.5" y="898.5" width="39.5" height="23.5" fill="url(#bsh)" rx="2.5"/>
<text class="b" x="77" y="936.5" text-anchor="middle">Gray 80</text>
<path d="M104,941.5 V897 Q104,893 108,893 H149.5 Q153.5,893 153.5,897 V941.5 Z" fill="url(#bt)"/>
<rect x="109.5" y="898.5" width="39.5" height="23.5" fill="#d2d2d2" rx="2.5"/>
<rect x="109.5" y="898.5" width="39.5" height="23.5" fill="url(#bsh)" rx="2.5"/>
<text class="b" x="129" y="936.5" text-anchor="middle">Gray 65</text>
<path d="M156,941.5 V897 Q156,893 160,893 H201.5 Q205.5,893 205.5,897 V941.5 Z" fill="url(#bt)"/>
<rect x="161.5" y="898.5" width="39.5" height="23.5" fill="#bbbbbb" rx="2.5"/>
<rect x="161.5" y="898.5" width="39.5" height="23.5" fill="url(#bsh)" rx="2.5"/>
<text class="b" x="181" y="936.5" text-anchor="middle">Gray 50</text>
<path d="M208,941.5 V897 Q208,893 212,893 H253.5 Q257.5,893 257.5,897 V941.5 Z" fill="url(#bt)"/>
<rect x="213.5" y="898.5" width="39.5" height="23.5" fill="#9f9f9f" rx="2.5"/>
<rect x="213.5" y="898.5" width="39.5" height="23.5" fill="url(#bsh)" rx="2.5"/>
<text class="b" x="233" y="936.5" text-anchor="middle">Gray 35</text>
<path d="M260,941.5 V897 Q260,893 264,893 H305.5 Q309.5,893 309.5,897 V941.5 Z" fill="url(#bt)"/>
<rect x="265.5" y="898.5" width="39.5" height="23.5" fill="#000000" rx="2.5"/>
<rect x="265.5" y="898.5" width="39.5" height="23.5" fill="url(#bsh)" rx="2.5"/>
<text class="b" x="285" y="936.5" text-anchor="middle">Black</text>
<path d="M312,941.5 V897 Q312,893 316,893 H357.5 Q361.5,893 361.5,897 V941.5 Z" fill="url(#bt)"/>
<rect x="317.5" y="898.5" width="39.5" height="23.5" fill="#75523f" rx="2.5"/>
<rect x="317.5" y="898.5" width="39.5" height="23.5" fill="url(#bsh)" rx="2.5"/>
<text class="b" x="337" y="936.5" text-anchor="middle">Dark Skin</text>
<path d="M364,941.5 V897 Q364,893 368,893 H409.5 Q413.5,893 413.5,897 V941.5 Z" fill="url(#bt)"/>
<rect x="369.5" y="898.5" width="39.5" height="23.5" fill="#c69782" rx="2.5"/>
<rect x="369.5" y="898.5" width="39.5" height="23.5" fill="url(#bsh)" rx="2.5"/>
<text class="b" x="389" y="936.5" text-anchor="middle">Light Skin</text>
<path d="M416,941.5 V897 Q416,893 420,893 H461.5 Q465.5,893 465.5,897 V941.5 Z" fill="url(#bt)"/>
<rect x="421.5" y="898.5" width="39.5" height="23.5" fill="#5d7ba3" rx="2.5"/>
<rect x="421.5" y="898.5" width="39.5" height="23.5" fill="url(#bsh)" rx="2.5"/>
<text class="b" x="441" y="936.5" text-anchor="middle">Blue Sky</text>
<path d="M468,941.5 V897 Q468,893 472,893 H513.5 Q517.5,893 517.5,897 V941.5 Z" fill="url(#bt)"/>
<rect x="473.5" y="898.5" width="39.5" height="23.5" fill="#596e41" rx="2.5"/>
<rect x="473.5" y="898.5" width="39.5" height="23.5" fill="url(#bsh)" rx="2.5"/>
<text class="b" x="493" y="936.5" text-anchor="middle">Foliage</text>
<path d="M520,941.5 V897 Q520,893 524,893 H565.5 Q569.5,893 569.5,897 V941.5 Z" fill="url(#bt)"/>
<rect x="525.5" y="898.5" width="39.5" height="11" fill="#8583b9" rx="2.5"/>
<rect x="525.5" y="898.5" width="39.5" height="11" fill="url(#bsh)" rx="2.5"/>
<text class="b" x="528.4" y="924.8">Blue</text>
<text class="b" x="528.4" y="936.8">Flower</text>
<path d="M572,941.5 V897 Q572,893 576,893 H617.5 Q621.5,893 621.5,897 V941.5 Z" fill="url(#bt)"/>
<rect x="577.5" y="898.5" width="39.5" height="11" fill="#63bfab" rx="2.5"/>
<rect x="577.5" y="898.5" width="39.5" height="11" fill="url(#bsh)" rx="2.5"/>
<text class="b" x="581.6" y="924.8">Bluish</text>
<text class="b" x="581.6" y="936.8">Green</text>
<path d="M624,941.5 V897 Q624,893 628,893 H669.5 Q673.5,893 673.5,897 V941.5 Z" fill="url(#bt)"/>
<rect x="629.5" y="898.5" width="39.5" height="23.5" fill="#df7e28" rx="2.5"/>
<rect x="629.5" y="898.5" width="39.5" height="23.5" fill="url(#bsh)" rx="2.5"/>
<text class="b" x="649" y="936.5" text-anchor="middle">Orange</text>
<path d="M676,941.5 V897 Q676,893 680,893 H721.5 Q725.5,893 725.5,897 V941.5 Z" fill="url(#bt)"/>
<rect x="681.5" y="898.5" width="39.5" height="11" fill="#4a5caf" rx="2.5"/>
<rect x="681.5" y="898.5" width="39.5" height="11" fill="url(#bsh)" rx="2.5"/>
<text class="b" x="681.1" y="924.8">Purplish</text>
<text class="b" x="681.1" y="936.8">Blue</text>
<path d="M728,941.5 V897 Q728,893 732,893 H773.5 Q777.5,893 777.5,897 V941.5 Z" fill="url(#bt)"/>
<rect x="733.5" y="898.5" width="39.5" height="11" fill="#cb5a66" rx="2.5"/>
<rect x="733.5" y="898.5" width="39.5" height="11" fill="url(#bsh)" rx="2.5"/>
<text class="b" x="729.7" y="924.8">Moderate</text>
<text class="b" x="729.7" y="936.8">Red</text>
<path d="M780,941.5 V897 Q780,893 784,893 H825.5 Q829.5,893 829.5,897 V941.5 Z" fill="url(#bt)"/>
<rect x="785.5" y="898.5" width="39.5" height="23.5" fill="#5d3c70" rx="2.5"/>
<rect x="785.5" y="898.5" width="39.5" height="23.5" fill="url(#bsh)" rx="2.5"/>
<text class="b" x="805" y="936.5" text-anchor="middle">Purple</text>
<path d="M832,941.5 V897 Q832,893 836,893 H877.5 Q881.5,893 881.5,897 V941.5 Z" fill="url(#bt)"/>
<rect x="837.5" y="898.5" width="39.5" height="11" fill="#a3c13f" rx="2.5"/>
<rect x="837.5" y="898.5" width="39.5" height="11" fill="url(#bsh)" rx="2.5"/>
<text class="b" x="841.2" y="924.8">Yellow</text>
<text class="b" x="841.2" y="936.8">Green</text>
<path d="M884,941.5 V897 Q884,893 888,893 H929.5 Q933.5,893 933.5,897 V941.5 Z" fill="url(#bt)"/>
<rect x="889.5" y="898.5" width="39.5" height="11" fill="#e9a42d" rx="2.5"/>
<rect x="889.5" y="898.5" width="39.5" height="11" fill="url(#bsh)" rx="2.5"/>
<text class="b" x="890.6" y="924.8">Orange</text>
<text class="b" x="890.6" y="936.8">Yellow</text>
<path d="M936,941.5 V897 Q936,893 940,893 H981.5 Q985.5,893 985.5,897 V941.5 Z" fill="url(#bt)"/>
<rect x="941.5" y="898.5" width="39.5" height="23.5" fill="#363f9b" rx="2.5"/>
<rect x="941.5" y="898.5" width="39.5" height="23.5" fill="url(#bsh)" rx="2.5"/>
<text class="b" x="961" y="936.5" text-anchor="middle">Blue</text>
<path d="M988,941.5 V897 Q988,893 992,893 H1033.5 Q1037.5,893 1037.5,897 V941.5 Z" fill="url(#bt)"/>
<rect x="993.5" y="898.5" width="39.5" height="23.5" fill="#449748" rx="2.5"/>
<rect x="993.5" y="898.5" width="39.5" height="23.5" fill="url(#bsh)" rx="2.5"/>
<text class="b" x="1013" y="936.5" text-anchor="middle">Green</text>
<path d="M1040,941.5 V897 Q1040,893 1044,893 H1085.5 Q1089.5,893 1089.5,897 V941.5 Z" fill="url(#bt)"/>
<rect x="1045.5" y="898.5" width="39.5" height="23.5" fill="#b7343b" rx="2.5"/>
<rect x="1045.5" y="898.5" width="39.5" height="23.5" fill="url(#bsh)" rx="2.5"/>
<text class="b" x="1065" y="936.5" text-anchor="middle">Red</text>
<path d="M1092,941.5 V897 Q1092,893 1096,893 H1137.5 Q1141.5,893 1141.5,897 V941.5 Z" fill="url(#bt)"/>
<rect x="1097.5" y="898.5" width="39.5" height="23.5" fill="#eec922" rx="2.5"/>
<rect x="1097.5" y="898.5" width="39.5" height="23.5" fill="url(#bsh)" rx="2.5"/>
<text class="b" x="1117" y="936.5" text-anchor="middle">Yellow</text>
<path d="M1144,941.5 V897 Q1144,893 1148,893 H1189.5 Q1193.5,893 1193.5,897 V941.5 Z" fill="url(#bt)"/>
<rect x="1149.5" y="898.5" width="39.5" height="23.5" fill="#c3579b" rx="2.5"/>
<rect x="1149.5" y="898.5" width="39.5" height="23.5" fill="url(#bsh)" rx="2.5"/>
<text class="b" x="1169" y="936.5" text-anchor="middle">Magenta</text>
<path d="M1196,941.5 V897 Q1196,893 1200,893 H1241.5 Q1245.5,893 1245.5,897 V941.5 Z" fill="url(#bt)"/>
<rect x="1201.5" y="898.5" width="39.5" height="23.5" fill="#0087a7" rx="2.5"/>
<rect x="1201.5" y="898.5" width="39.5" height="23.5" fill="url(#bsh)" rx="2.5"/>
<text class="b" x="1221" y="936.5" text-anchor="middle">Cyan</text>
<path d="M1248,941.5 V897 Q1248,893 1252,893 H1293.5 Q1297.5,893 1297.5,897 V941.5 Z" fill="url(#bt)"/>
<rect x="1253.5" y="898.5" width="39.5" height="23.5" fill="#ff0000" rx="2.5"/>
<rect x="1253.5" y="898.5" width="39.5" height="23.5" fill="url(#bsh)" rx="2.5"/>
<text class="b" x="1273" y="936.5" text-anchor="middle">100% Red</text>
<path d="M1300,941.5 V897 Q1300,893 1304,893 H1345.5 Q1349.5,893 1349.5,897 V941.5 Z" fill="url(#bt)"/>
<rect x="1305.5" y="898.5" width="39.5" height="11" fill="#00ff00" rx="2.5"/>
<rect x="1305.5" y="898.5" width="39.5" height="11" fill="url(#bsh)" rx="2.5"/>
<text class="b" x="1309.6" y="924.8">100%</text>
<text class="b" x="1309.6" y="936.8">Green</text>
<path d="M1352,941.5 V897 Q1352,893 1356,893 H1397.5 Q1401.5,893 1401.5,897 V941.5 Z" fill="url(#bt)"/>
<rect x="1357.5" y="898.5" width="39.5" height="11" fill="#0000ff" rx="2.5"/>
<rect x="1357.5" y="898.5" width="39.5" height="11" fill="url(#bsh)" rx="2.5"/>
<text class="b" x="1362.8" y="924.8">100%</text>
<text class="b" x="1362.8" y="936.8">Blue</text>
</g>
<rect x="0" y="942" width="1370" height="10" fill="#555555"/>
<rect x="0" y="942" width="10.5" height="10" fill="#9a9a9a"/>
<path d="M8,943.5 L8,951.5 L3.5,947.5 Z" fill="#333"/>
<rect x="13" y="942.5" width="751" height="12" fill="#414141" rx="5"/>
<rect x="1357" y="942" width="11" height="10" fill="#9a9a9a"/>
<path d="M1360,943.5 L1360,951.5 L1365,947.5 Z" fill="#333"/>
<rect x="1370" y="893" width="320" height="59" fill="#3a3a3a"/>
<path d="M1370,911 V898 Q1370,893 1375,893 H1413 Q1418,893 1418,898 V911 Z" fill="url(#g2)"/>
<circle cx="1394.5" cy="902" r="7.5" fill="url(#gc)"/><path d="M1390,904.2 L1399,904.2 L1394.5,899.6 Z" fill="#3a3a3a"/>
<rect x="1370" y="912" width="48" height="40" fill="url(#g1)"/>
<rect x="1379.5" y="918.5" width="29" height="29" rx="4" fill="#8e8e8e" stroke="#2a2a2a" stroke-width="2.2"/>
<path d="M1380.5,933 V922.5 Q1380.5,919.5 1383.5,919.5 H1404.500 Q1407.5,919.5 1407.5,922.5 V933 Z" fill="#bcbcbc"/>
<rect x="1387" y="926" width="14" height="7" fill="#2b2b2b"/>
<rect x="1387" y="933" width="14" height="7" fill="#000"/>
<rect x="1419.3" y="893" width="44.5" height="30" fill="url(#g1)"/>
<circle cx="1441.8" cy="908" r="10" fill="url(#gc)"/>
<rect x="1464.4" y="893" width="44.5" height="30" fill="url(#g1)"/>
<circle cx="1486.9" cy="908" r="10" fill="url(#gc)"/>
<rect x="1509.5" y="893" width="44.5" height="30" fill="url(#g1)"/>
<circle cx="1532" cy="908" r="10" fill="url(#gc)"/>
<rect x="1554.6" y="893" width="44.5" height="30" fill="url(#g1)"/>
<circle cx="1577.1" cy="908" r="10" fill="url(#gc)"/>
<rect x="1599.7" y="893" width="45.1" height="30" fill="url(#g3)"/>
<circle cx="1622.2" cy="908" r="10" fill="#303030"/>
<rect x="1644.8" y="893" width="45.1" height="30" fill="url(#g3)"/>
<circle cx="1667.3" cy="908" r="10" fill="#303030"/>
<rect x="1437.8" y="904" width="8" height="8" fill="#3a3a3a"/>
<path d="M1484.9,903.3 L1484.9,914 L1493.5,908.6 Z" fill="#2e2e2e"/>
<text x="1532" y="911.5" font-size="10" font-weight="bold" fill="#333" text-anchor="middle">[··]</text>
<text x="1577.1" y="913" font-size="17" font-weight="bold" fill="#333" text-anchor="middle">∞</text>
<g transform="translate(1622.2,908)" fill="none" stroke="#1c1c1c" stroke-width="2.3"><path d="M-5.2,-1.2 A5.4,5.4 0 0 1 4.2,-3.4"/><path d="M5.2,1.2 A5.4,5.4 0 0 1 -4.2,3.4"/><path d="M2.2,-6.8 L6.6,-2.6 L1.2,-1.4 Z" fill="#1c1c1c" stroke="none"/><path d="M-2.2,6.8 L-6.6,2.6 L-1.2,1.4 Z" fill="#1c1c1c" stroke="none"/></g>
<rect x="1419.3" y="924" width="135.7" height="28" fill="url(#g2)"/>
<rect x="1555.6" y="924" width="134.4" height="28" fill="url(#g2)"/>
<circle cx="1449.8" cy="939.5" r="10" fill="url(#gc)"/><text x="1449.8" y="944.5" font-size="17" fill="#333" text-anchor="middle">«</text>
<circle cx="1663.5" cy="939.5" r="10" fill="url(#gc)"/><text x="1663.5" y="944.5" font-size="17" fill="#333" text-anchor="middle">»</text>
<text x="1476.5" y="946.7" font-size="21.5" fill="#2c2c2c" textLength="51" lengthAdjust="spacingAndGlyphs" font-weight="bold">Back</text>
<text x="1583.3" y="946.7" font-size="21.5" fill="#2c2c2c" textLength="51.7" lengthAdjust="spacingAndGlyphs" font-weight="bold">Next</text>
</svg>
</body></html>
